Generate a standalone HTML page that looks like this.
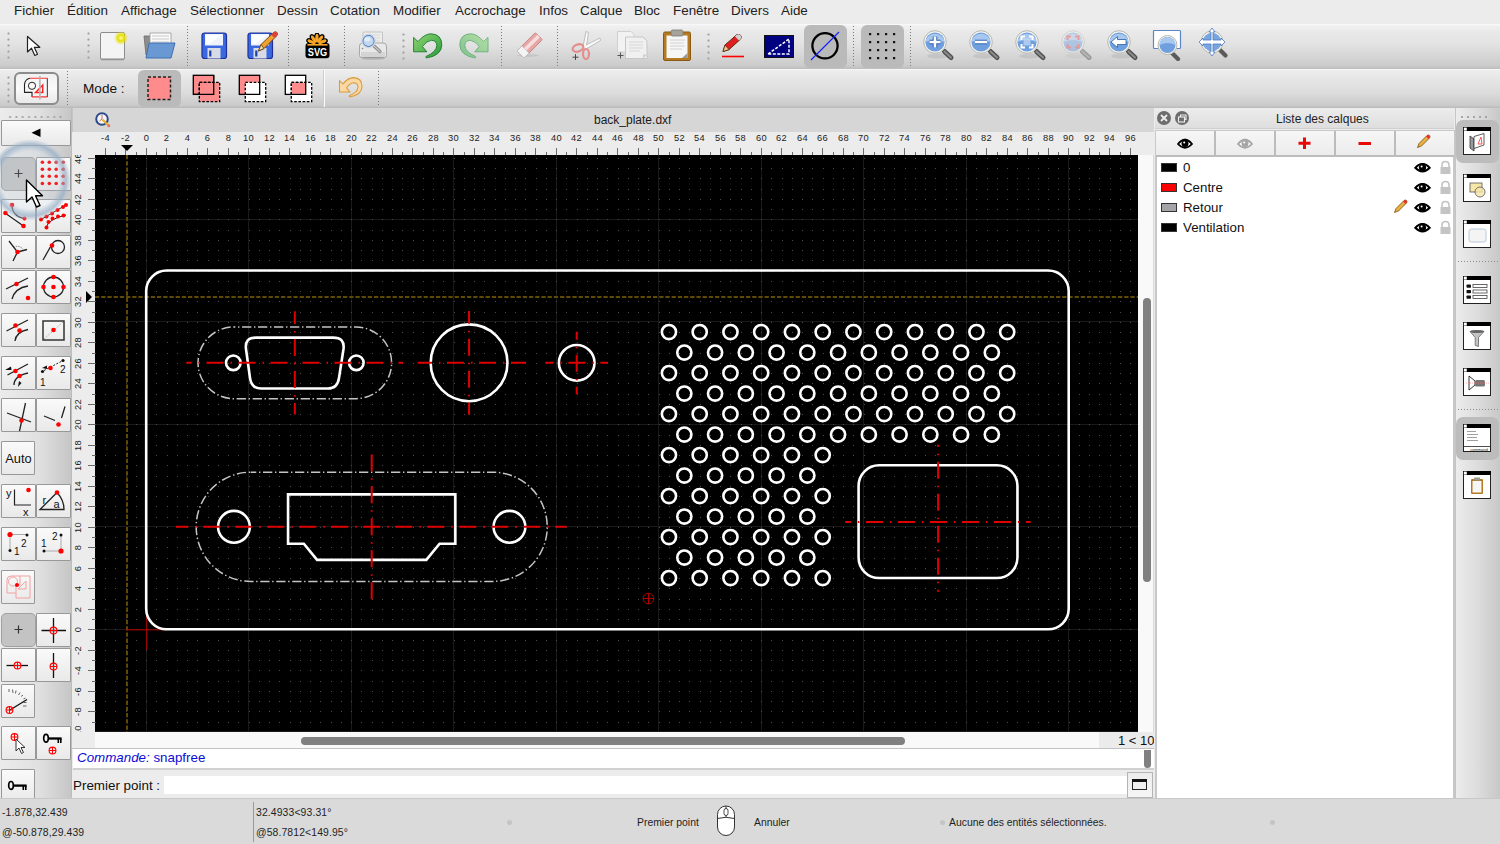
<!DOCTYPE html>
<html><head><meta charset="utf-8">
<style>
*{box-sizing:border-box;margin:0;padding:0}
html,body{width:1500px;height:844px;overflow:hidden;background:#ececec;font-family:"Liberation Sans",sans-serif;position:relative}
.a{position:absolute}
.mi{position:absolute;top:2px;font-size:13.4px;color:#222;white-space:nowrap;line-height:18px}
.sep{position:absolute;width:0;border-left:1px dotted #8a8a8a}
.hdl{position:absolute;width:2px;background-image:radial-gradient(circle,#9a9a9a 1px,transparent 1.2px);background-size:2px 6px}
.tb{position:absolute}
.btn{position:absolute;border:1px solid #989898;border-radius:1px;background:linear-gradient(#fafafa,#e9e9e9)}
.chk{position:absolute;border:1px solid #a0a0a0;border-radius:5px;background:#c3c3c3}
svg{display:block}
.st{position:absolute;font-size:10.4px;color:#1e1e1e;white-space:nowrap;letter-spacing:0.12px}
.st2{position:absolute;font-size:10.4px;color:#1e1e1e;white-space:nowrap}
.lr{position:absolute;left:1183px;font-size:13.3px;color:#111;white-space:nowrap;line-height:16px}
.sw{position:absolute;left:1161px;width:16px;height:9px;border:1px solid #333}
</style></head><body>
<!-- menu bar -->
<div class="a" style="left:0;top:0;width:1500px;height:24px;background:#ececec"></div>
<div class="mi" style="left:14px">Fichier</div>
<div class="mi" style="left:67px">Édition</div>
<div class="mi" style="left:121px">Affichage</div>
<div class="mi" style="left:190px">Sélectionner</div>
<div class="mi" style="left:277px">Dessin</div>
<div class="mi" style="left:330px">Cotation</div>
<div class="mi" style="left:393px">Modifier</div>
<div class="mi" style="left:455px">Accrochage</div>
<div class="mi" style="left:539px">Infos</div>
<div class="mi" style="left:580px">Calque</div>
<div class="mi" style="left:634px">Bloc</div>
<div class="mi" style="left:673px">Fenêtre</div>
<div class="mi" style="left:731px">Divers</div>
<div class="mi" style="left:781px">Aide</div>

<!-- toolbar 1 -->
<div class="a" style="left:0;top:24px;width:1500px;height:45px;background:linear-gradient(#f3f3f3,#e9e9e9 15%,#e2e2e2 45%,#cbcbcb 93%,#c6c6c6 95%,#bdbdbd);border-top:1px solid #f8f8f8"></div>
<!-- toolbar 2 -->
<div class="a" style="left:0;top:69px;width:1500px;height:39px;background:linear-gradient(#eeeeee,#e7e7e7 20%,#dcdcdc 60%,#cacaca 93%,#c4c4c4 95%,#bababa);border-top:1px solid #f6f6f6"></div>
<svg class="a" style="left:7px;top:32px" width="3" height="29"><rect x="0.5" y="0.5" width="2" height="2" rx="0.6" fill="#a0a0a0"/><rect x="0.5" y="6.5" width="2" height="2" rx="0.6" fill="#a0a0a0"/><rect x="0.5" y="12.5" width="2" height="2" rx="0.6" fill="#a0a0a0"/><rect x="0.5" y="18.5" width="2" height="2" rx="0.6" fill="#a0a0a0"/><rect x="0.5" y="24.5" width="2" height="2" rx="0.6" fill="#a0a0a0"/></svg><svg class="a" style="left:26px;top:35px" width="15" height="22" viewBox="0 0 15 22"><path d="M1.5 1.5V17L5.5 13.2L8.8 20.5L11.5 19.3L8.3 12.3H13.8Z" fill="#fff" stroke="#222" stroke-width="1.2" stroke-linejoin="round"/></svg><svg class="a" style="left:87px;top:32px" width="3" height="29"><rect x="0.5" y="0.5" width="2" height="2" rx="0.6" fill="#a0a0a0"/><rect x="0.5" y="6.5" width="2" height="2" rx="0.6" fill="#a0a0a0"/><rect x="0.5" y="12.5" width="2" height="2" rx="0.6" fill="#a0a0a0"/><rect x="0.5" y="18.5" width="2" height="2" rx="0.6" fill="#a0a0a0"/><rect x="0.5" y="24.5" width="2" height="2" rx="0.6" fill="#a0a0a0"/></svg><svg class="a" style="left:99px;top:31px" width="30" height="31" viewBox="0 0 30 31"><rect x="1.5" y="1.5" width="24" height="27" rx="1.5" fill="#f4f4f4" stroke="#8c8c8c" stroke-width="1"/><rect x="2" y="27" width="23" height="2.5" fill="#9a9a9a" opacity=".6"/><radialGradient id="gl"><stop offset="0" stop-color="#fff9b0"/><stop offset=".45" stop-color="#e8e000"/><stop offset="1" stop-color="#e8e000" stop-opacity="0"/></radialGradient><circle cx="22" cy="7" r="7" fill="url(#gl)"/></svg><svg class="a" style="left:142px;top:31px" width="35" height="29" viewBox="0 0 35 29"><path d="M2 5H9L11 7H27V24H4Z" fill="#8d8d8d" stroke="#6a6a6a" stroke-width=".8"/><path d="M8 2H29V18H8Z" fill="#fafafa" stroke="#999" stroke-width=".8"/><path d="M10 5H27M10 8H27M10 11H27" stroke="#c9c9c9" stroke-width="1"/><path d="M7 12H33L29 27H4Z" fill="#6a98d3" stroke="#3e6fb0" stroke-width="1"/></svg><div class="a" style="left:187px;top:26px;width:1px;height:40px;background-image:linear-gradient(#7a7a7a 50%,transparent 50%);background-size:1px 3px"></div><svg class="a" style="left:201px;top:32px" width="27" height="28" viewBox="0 0 27 28"><rect x="1" y="1" width="24.5" height="25.5" rx="2.5" fill="#3a68e0" stroke="#1e2f9a" stroke-width="1.2"/><rect x="4" y="2" width="18" height="11.5" fill="#eef3fb"/><path d="M5 3H20L9 12H5Z" fill="#fff" opacity=".8"/><rect x="6.5" y="16" width="13" height="10.5" fill="#d7dbe6"/><rect x="8.2" y="18.5" width="2.2" height="6" fill="#1f3fa8"/></svg><svg class="a" style="left:247px;top:32px" width="27" height="28" viewBox="0 0 27 28"><rect x="1" y="1" width="24.5" height="25.5" rx="2.5" fill="#3a68e0" stroke="#1e2f9a" stroke-width="1.2"/><rect x="4" y="2" width="18" height="11.5" fill="#eef3fb"/><path d="M5 3H20L9 12H5Z" fill="#fff" opacity=".8"/><rect x="6.5" y="16" width="13" height="10.5" fill="#d7dbe6"/><rect x="8.2" y="18.5" width="2.2" height="6" fill="#1f3fa8"/></svg><svg class="a" style="left:255px;top:30px" width="24" height="24" viewBox="0 0 24 24"><path d="M3.5 21L6 14.5L18.5 2.5Q20.5 1 22 2.5Q23.5 4 21.5 6L9 18.5Z" fill="#f0a030" stroke="#7a4a10" stroke-width="1"/><path d="M18.5 2.5Q20.5 1 22 2.5Q23.5 4 21.5 6L19.5 8L16.5 5Z" fill="#e04040"/><path d="M3.5 21L6 14.5L9 18.5Z" fill="#f3d9a8" stroke="#5a3a10" stroke-width=".8"/></svg><div class="a" style="left:288px;top:26px;width:1px;height:40px;background-image:linear-gradient(#7a7a7a 50%,transparent 50%);background-size:1px 3px"></div><svg class="a" style="left:305px;top:33px" width="25" height="26" viewBox="0 0 25 26"><ellipse cx="12" cy="5.2" rx="2.3" ry="5" transform="rotate(-68 12 11)" fill="#f8a427" stroke="#000" stroke-width="1.6"/><ellipse cx="12" cy="5.2" rx="2.3" ry="5" transform="rotate(-34 12 11)" fill="#f8a427" stroke="#000" stroke-width="1.6"/><ellipse cx="12" cy="5.2" rx="2.3" ry="5" transform="rotate(0 12 11)" fill="#f8a427" stroke="#000" stroke-width="1.6"/><ellipse cx="12" cy="5.2" rx="2.3" ry="5" transform="rotate(34 12 11)" fill="#f8a427" stroke="#000" stroke-width="1.6"/><ellipse cx="12" cy="5.2" rx="2.3" ry="5" transform="rotate(68 12 11)" fill="#f8a427" stroke="#000" stroke-width="1.6"/><rect x="0.5" y="10" width="24" height="15.2" rx="3" fill="#000"/><ellipse cx="12" cy="5.2" rx="1.5" ry="4.2" transform="rotate(-68 12 11)" fill="#f8a427"/><ellipse cx="12" cy="5.2" rx="1.5" ry="4.2" transform="rotate(-34 12 11)" fill="#f8a427"/><ellipse cx="12" cy="5.2" rx="1.5" ry="4.2" transform="rotate(0 12 11)" fill="#f8a427"/><ellipse cx="12" cy="5.2" rx="1.5" ry="4.2" transform="rotate(34 12 11)" fill="#f8a427"/><ellipse cx="12" cy="5.2" rx="1.5" ry="4.2" transform="rotate(68 12 11)" fill="#f8a427"/><rect x="2.5" y="11" width="20" height="1.6" fill="#f8a427"/><text x="12.5" y="23.3" font-family="Liberation Sans" font-weight="bold" font-size="10.5" fill="#fff" text-anchor="middle" transform="translate(12.5 0) scale(0.88 1.1) translate(-12.5 -2.2)">SVG</text></svg><div class="a" style="left:344px;top:26px;width:1px;height:40px;background-image:linear-gradient(#7a7a7a 50%,transparent 50%);background-size:1px 3px"></div><svg class="a" style="left:358px;top:31px" width="30" height="29" viewBox="0 0 30 29"><rect x="5" y="1" width="19.5" height="14" rx="1" fill="#ececec" stroke="#c4c4c4" stroke-width="1"/><path d="M8 4H22M8 7H22M8 10H22" stroke="#d8d8d8"/><path d="M1.5 15Q1.5 12 4.5 12H25Q28.5 12 28.5 15V24.5Q28.5 26.5 26.5 26.5H3.5Q1.5 26.5 1.5 24.5Z" fill="#e8e8e8" stroke="#a8a8a8" stroke-width="1"/><rect x="3" y="21" width="24" height="5" fill="#d4d4d4"/><ellipse cx="15" cy="27.5" rx="12" ry="1.3" fill="#000" opacity=".15"/><circle cx="4.5" cy="17.5" r=".8" fill="#888"/><path d="M15 14L22 20.5" stroke="#8a8a8a" stroke-width="3.2" stroke-linecap="round"/><path d="M15 14L22 20.5" stroke="#c8c8c8" stroke-width="1.2" stroke-linecap="round"/><circle cx="10.5" cy="10" r="6.8" fill="#f4f4f4" stroke="#d6d6d6" stroke-width="1"/><circle cx="10.5" cy="10" r="5.6" fill="#c6d8ef" stroke="#5a8ad0" stroke-width="1.1"/><ellipse cx="9.5" cy="8.2" rx="3" ry="2" fill="#fff" opacity=".55"/></svg><svg class="a" style="left:402px;top:33px" width="3" height="28"><rect x="0.5" y="0.5" width="2" height="2" rx="0.6" fill="#a0a0a0"/><rect x="0.5" y="6.5" width="2" height="2" rx="0.6" fill="#a0a0a0"/><rect x="0.5" y="12.5" width="2" height="2" rx="0.6" fill="#a0a0a0"/><rect x="0.5" y="18.5" width="2" height="2" rx="0.6" fill="#a0a0a0"/><rect x="0.5" y="24.5" width="2" height="2" rx="0.6" fill="#a0a0a0"/></svg><svg class="a" style="left:408px;top:28px" width="40" height="34" viewBox="0 0 40 34"><linearGradient id="ug" x1="0" y1="0" x2="1" y2="1"><stop offset="0" stop-color="#8fd672"/><stop offset="1" stop-color="#2a9a3c"/></linearGradient><path d="M5.6 9.4L10 13.6Q16.5 5.8 23 5.8Q33.8 6.2 33.8 17Q33.5 27.5 18.5 30Q17.5 29.5 18 28.5Q28.5 24 28.8 17.5Q28.5 12.5 23.5 12.3Q19 12.5 14.4 18.5L18.8 23.8L5.6 23.8Z" fill="url(#ug)" stroke="#1b7a2c" stroke-width="0.9" stroke-linejoin="round"/></svg><svg class="a" style="left:454px;top:28px" width="40" height="34" viewBox="0 0 40 34"><linearGradient id="rgd" x1="0" y1="0" x2="1" y2="1"><stop offset="0" stop-color="#b8e0a8"/><stop offset="1" stop-color="#7cc08c"/></linearGradient><g transform="translate(39.6 0) scale(-1 1)"><path d="M5.6 9.4L10 13.6Q16.5 5.8 23 5.8Q33.8 6.2 33.8 17Q33.5 27.5 18.5 30Q17.5 29.5 18 28.5Q28.5 24 28.8 17.5Q28.5 12.5 23.5 12.3Q19 12.5 14.4 18.5L18.8 23.8L5.6 23.8Z" fill="url(#rgd)" stroke="#6aae7c" stroke-width="0.9" stroke-linejoin="round"/></g></svg><div class="a" style="left:501px;top:26px;width:1px;height:40px;background-image:linear-gradient(#7a7a7a 50%,transparent 50%);background-size:1px 3px"></div><svg class="a" style="left:515px;top:32px" width="30" height="28" viewBox="0 0 30 28"><ellipse cx="13" cy="23.5" rx="11" ry="1.5" fill="#000" opacity=".08"/><g transform="rotate(-45 14 14)"><rect x="2" y="9" width="26" height="10" rx="1.5" fill="#e6a6a6" stroke="#c87a7a" stroke-width=".8"/><rect x="2" y="9" width="7" height="10" fill="#f4f4f4" stroke="#bdbdbd" stroke-width=".8"/><rect x="9" y="12" width="19" height="3.5" fill="#f6dede"/></g></svg><div class="a" style="left:557px;top:26px;width:1px;height:40px;background-image:linear-gradient(#7a7a7a 50%,transparent 50%);background-size:1px 3px"></div><svg class="a" style="left:570px;top:30px" width="32" height="30" viewBox="0 0 32 30"><path d="M13 17L16 1.5L18.5 2.5L16 19" fill="#fafafa" stroke="#b0b0b0" stroke-width=".8"/><path d="M16 15L30 8L30.5 10.5L16 19" fill="#fafafa" stroke="#b0b0b0" stroke-width=".8"/><ellipse cx="8" cy="18" rx="5.5" ry="3.5" fill="none" stroke="#e58c8c" stroke-width="2.2" transform="rotate(-20 8 18)"/><ellipse cx="16" cy="24" rx="3" ry="5" fill="none" stroke="#e58c8c" stroke-width="2.2"/><path d="M2.5 27.2H8.5M5.5 24.2V30.2" stroke="#444" stroke-width="1"/></svg><svg class="a" style="left:616px;top:30px" width="33" height="30" viewBox="0 0 33 30"><path d="M1.5 1.5H15L18 4.5V22H1.5Z" fill="#f2f2f2" stroke="#d0d0d0" stroke-width="1"/><path d="M9.5 7H27L31 11V28.5H9.5Z" fill="#f0f0f0" stroke="#c6c6c6" stroke-width="1"/><path d="M13 12H27M13 15H27M13 18H27M13 21H24" stroke="#d6d6d6"/><path d="M27 28.5L31 24.5H27Z" fill="#cfcfcf"/><path d="M1.5 25.5H7.5M4.5 22.5V28.5" stroke="#555" stroke-width="1"/></svg><svg class="a" style="left:662px;top:28px" width="31" height="34" viewBox="0 0 31 34"><rect x="1.5" y="4" width="27" height="28.5" rx="1.5" fill="#b57a22" stroke="#8a5a14" stroke-width="1"/><rect x="4.5" y="7.5" width="21" height="22.5" fill="#f7f7f7"/><rect x="9" y="2" width="12" height="6" rx="1.5" fill="#a4a49a" stroke="#7a7a70" stroke-width=".8"/><path d="M8 12H23M8 15H22M8 18H23M8 21H20" stroke="#d0d0d0"/><path d="M25.5 25L20 30H25.5Z" fill="#9a9a9a"/></svg><svg class="a" style="left:707px;top:33px" width="3" height="28"><rect x="0.5" y="0.5" width="2" height="2" rx="0.6" fill="#a0a0a0"/><rect x="0.5" y="6.5" width="2" height="2" rx="0.6" fill="#a0a0a0"/><rect x="0.5" y="12.5" width="2" height="2" rx="0.6" fill="#a0a0a0"/><rect x="0.5" y="18.5" width="2" height="2" rx="0.6" fill="#a0a0a0"/><rect x="0.5" y="24.5" width="2" height="2" rx="0.6" fill="#a0a0a0"/></svg><svg class="a" style="left:721px;top:34px" width="26" height="24" viewBox="0 0 26 24"><path d="M2 17.5L4 11L15.5 0.9Q17.8 -0.6 19.5 1.2Q21.2 3 19.5 5.2L8 15.6Z" fill="#e02020" stroke="#5a2a10" stroke-width="1"/><path d="M15.5 1Q17.8 -0.6 19.5 1.2Q21.2 3 19.5 5.2L18 6.5L14 2.5Z" fill="#d0d0d0"/><path d="M2 17.5L4 11L8 15.6Z" fill="#f0c890" stroke="#5a2a10" stroke-width=".8"/><path d="M1 22.5H23" stroke="#f00" stroke-width="1.6"/></svg><svg class="a" style="left:764px;top:35px" width="30" height="23" viewBox="0 0 30 23"><rect x="0.5" y="0.5" width="29" height="22" fill="#000080" stroke="#111" stroke-width="1"/><path d="M4 19L25 4V19Z" fill="none" stroke="#fff" stroke-width="1.5" stroke-dasharray="3 1.5"/></svg><div class="chk" style="left:804px;top:25px;width:43px;height:43px;border:none;background:#bababa;border-radius:6px"></div><svg class="a" style="left:809px;top:29px" width="34" height="34" viewBox="0 0 34 34"><circle cx="16" cy="16.8" r="12.6" fill="none" stroke="#000" stroke-width="2.3"/><path d="M2 31L30 3" stroke="#1020ff" stroke-width="1.1"/></svg><div class="a" style="left:853px;top:26px;width:1px;height:40px;background-image:linear-gradient(#7a7a7a 50%,transparent 50%);background-size:1px 3px"></div><div class="chk" style="left:861px;top:25px;width:43px;height:43px;border:none;background:#bababa;border-radius:6px"></div><svg class="a" style="left:869px;top:33px" width="27" height="27" viewBox="0 0 27 27"><rect x="0" y="0" width="2.2" height="2.2" fill="#111"/><rect x="0" y="8" width="2.2" height="2.2" fill="#111"/><rect x="0" y="16" width="2.2" height="2.2" fill="#111"/><rect x="0" y="24" width="2.2" height="2.2" fill="#111"/><rect x="8" y="0" width="2.2" height="2.2" fill="#111"/><rect x="8" y="8" width="2.2" height="2.2" fill="#111"/><rect x="8" y="16" width="2.2" height="2.2" fill="#111"/><rect x="8" y="24" width="2.2" height="2.2" fill="#111"/><rect x="16" y="0" width="2.2" height="2.2" fill="#111"/><rect x="16" y="8" width="2.2" height="2.2" fill="#111"/><rect x="16" y="16" width="2.2" height="2.2" fill="#111"/><rect x="16" y="24" width="2.2" height="2.2" fill="#111"/><rect x="24" y="0" width="2.2" height="2.2" fill="#111"/><rect x="24" y="8" width="2.2" height="2.2" fill="#111"/><rect x="24" y="16" width="2.2" height="2.2" fill="#111"/><rect x="24" y="24" width="2.2" height="2.2" fill="#111"/></svg><div class="a" style="left:910px;top:26px;width:1px;height:40px;background-image:linear-gradient(#7a7a7a 50%,transparent 50%);background-size:1px 3px"></div><svg class="a" style="left:921px;top:29px" width="34" height="34" viewBox="0 0 34 34"><g><ellipse cx="17" cy="27" rx="11" ry="2.5" fill="#000" opacity="0.08"/><path d="M23.5 22.5L30 28.5" stroke="#505050" stroke-width="5" stroke-linecap="round"/><path d="M23.5 22.5L30 28.5" stroke="#8a8a8a" stroke-width="2.2" stroke-linecap="round"/><circle cx="14" cy="13" r="11.3" fill="#f3f3ef" stroke="#b8b8b0" stroke-width="1"/><circle cx="14" cy="13" r="9.6" fill="#6f9fdf"/><path d="M4.5 13A9.6 9.6 0 0 1 23.5 13Q14 9 4.5 13Z" fill="#a9c8ef"/><path d="M14 7.5V18.5M8.5 13H19.5" stroke="#2a5ea8" stroke-width="4.5"/><path d="M14 7.5V18.5M8.5 13H19.5" stroke="#fff" stroke-width="2.6"/></g></svg><svg class="a" style="left:967px;top:29px" width="34" height="34" viewBox="0 0 34 34"><g><ellipse cx="17" cy="27" rx="11" ry="2.5" fill="#000" opacity="0.08"/><path d="M23.5 22.5L30 28.5" stroke="#505050" stroke-width="5" stroke-linecap="round"/><path d="M23.5 22.5L30 28.5" stroke="#8a8a8a" stroke-width="2.2" stroke-linecap="round"/><circle cx="14" cy="13" r="11.3" fill="#f3f3ef" stroke="#b8b8b0" stroke-width="1"/><circle cx="14" cy="13" r="9.6" fill="#6f9fdf"/><path d="M4.5 13A9.6 9.6 0 0 1 23.5 13Q14 9 4.5 13Z" fill="#a9c8ef"/><path d="M8 13H20" stroke="#2a5ea8" stroke-width="4.5"/><path d="M8 13H20" stroke="#fff" stroke-width="2.6"/></g></svg><svg class="a" style="left:1013px;top:29px" width="34" height="34" viewBox="0 0 34 34"><g><ellipse cx="17" cy="27" rx="11" ry="2.5" fill="#000" opacity="0.08"/><path d="M23.5 22.5L30 28.5" stroke="#505050" stroke-width="5" stroke-linecap="round"/><path d="M23.5 22.5L30 28.5" stroke="#8a8a8a" stroke-width="2.2" stroke-linecap="round"/><circle cx="14" cy="13" r="11.3" fill="#f3f3ef" stroke="#b8b8b0" stroke-width="1"/><circle cx="14" cy="13" r="9.6" fill="#6f9fdf"/><path d="M4.5 13A9.6 9.6 0 0 1 23.5 13Q14 9 4.5 13Z" fill="#a9c8ef"/><path d="M8.5 11V7.5H12M16 7.5H19.5V11M19.5 15V18.5H16M12 18.5H8.5V15" fill="none" stroke="#fff" stroke-width="2"/><rect x="10.5" y="9.5" width="7" height="7" fill="#c9dcf5" opacity=".7"/></g></svg><svg class="a" style="left:1059px;top:29px" width="34" height="34" viewBox="0 0 34 34"><g opacity="0.45"><ellipse cx="17" cy="27" rx="11" ry="2.5" fill="#000" opacity="0.08"/><path d="M23.5 22.5L30 28.5" stroke="#505050" stroke-width="5" stroke-linecap="round"/><path d="M23.5 22.5L30 28.5" stroke="#8a8a8a" stroke-width="2.2" stroke-linecap="round"/><circle cx="14" cy="13" r="11.3" fill="#f3f3ef" stroke="#b8b8b0" stroke-width="1"/><circle cx="14" cy="13" r="9.6" fill="#6f9fdf"/><path d="M4.5 13A9.6 9.6 0 0 1 23.5 13Q14 9 4.5 13Z" fill="#a9c8ef"/><path d="M8.5 11V7.5H12M16 7.5H19.5V11M19.5 15V18.5H16M12 18.5H8.5V15" fill="none" stroke="#f04040" stroke-width="2"/></g></svg><svg class="a" style="left:1105px;top:29px" width="34" height="34" viewBox="0 0 34 34"><g><ellipse cx="17" cy="27" rx="11" ry="2.5" fill="#000" opacity="0.08"/><path d="M23.5 22.5L30 28.5" stroke="#505050" stroke-width="5" stroke-linecap="round"/><path d="M23.5 22.5L30 28.5" stroke="#8a8a8a" stroke-width="2.2" stroke-linecap="round"/><circle cx="14" cy="13" r="11.3" fill="#f3f3ef" stroke="#b8b8b0" stroke-width="1"/><circle cx="14" cy="13" r="9.6" fill="#6f9fdf"/><path d="M4.5 13A9.6 9.6 0 0 1 23.5 13Q14 9 4.5 13Z" fill="#a9c8ef"/><path d="M6 13L12.5 7.5V10.5H21V15.5H12.5V18.5Z" fill="#fff" stroke="#2a5ea8" stroke-width=".8"/></g></svg><svg class="a" style="left:1152px;top:29px" width="32" height="32" viewBox="0 0 32 32"><rect x="1.5" y="1.5" width="27" height="18" rx="1" fill="#fff" stroke="#5b86c8" stroke-width="1.2"/><path d="M20 24L26 30" stroke="#5a5a5a" stroke-width="4.2" stroke-linecap="round"/><circle cx="15.5" cy="16" r="9.5" fill="#f3f3ef" stroke="#b8b8b0" stroke-width="1"/><circle cx="15.5" cy="16" r="8" fill="#6f9fdf"/><path d="M7.5 16A8 8 0 0 1 23.5 16Q15.5 12 7.5 16Z" fill="#a9c8ef"/></svg><svg class="a" style="left:1197px;top:27px" width="36" height="35" viewBox="0 0 36 35"><path d="M22 22L28.5 28.5" stroke="#5a5a5a" stroke-width="4.2" stroke-linecap="round"/><circle cx="15" cy="15" r="11" fill="#f3f3ef" stroke="#b8b8b0" stroke-width="1"/><circle cx="15" cy="15" r="9.3" fill="#7aa6e0"/><path d="M15 1L18 5H16V13H24V11L28 15L24 19V17H16V25H18L15 29L12 25H14V17H6V19L2 15L6 11V13H14V5H12Z" fill="#fff" stroke="#4a7ac0" stroke-width=".8"/></svg><svg class="a" style="left:7px;top:76px" width="3" height="27"><rect x="0.5" y="0.5" width="2" height="2" rx="0.6" fill="#a0a0a0"/><rect x="0.5" y="6.5" width="2" height="2" rx="0.6" fill="#a0a0a0"/><rect x="0.5" y="12.5" width="2" height="2" rx="0.6" fill="#a0a0a0"/><rect x="0.5" y="18.5" width="2" height="2" rx="0.6" fill="#a0a0a0"/><rect x="0.5" y="24.5" width="2" height="2" rx="0.6" fill="#a0a0a0"/></svg><div class="a" style="left:14px;top:72px;width:45px;height:33px;border:2px solid #8c8c8c;border-radius:6px;background:linear-gradient(#f0f0f0,#fafafa 50%,#e8e8e8)"></div><svg class="a" style="left:22px;top:76px" width="28" height="25" viewBox="0 0 28 25"><g transform="translate(0 1)"><path d="M7.9 1.2Q3 2 2.5 7.5V15.4H10V19.9" fill="none" stroke="#222" stroke-width="1.1"/><path d="M7.9 1.2H25.4M10 19.9H25.4" stroke="#f33" stroke-width="1.1"/><path d="M25.4 1.2V19.9" stroke="#555" stroke-width="1.2"/><circle cx="10" cy="8.8" r="3.6" fill="none" stroke="#222" stroke-width="1"/><path d="M13.6 15.4L20.7 8V15.4Z" fill="none" stroke="#f22" stroke-width="1.5"/><path d="M17.9 -1V22.5" stroke="#b4b4b4" stroke-width="1.6"/></g></svg><div class="a" style="left:67px;top:71px;width:1px;height:35px;background-image:linear-gradient(#7a7a7a 50%,transparent 50%);background-size:1px 3px"></div><div class="a" style="left:83px;top:81px;font-size:13.6px;color:#111;white-space:nowrap">Mode :</div><div class="chk" style="left:138px;top:70px;width:43px;height:37px;border:none;background:#bababa;border-radius:6px"></div><svg class="a" style="left:147px;top:76px" width="25" height="25" viewBox="0 0 25 25"><rect x="1" y="1" width="22.5" height="22.5" fill="#ff8c8c" stroke="#222" stroke-width="1.5" stroke-dasharray="3 2"/></svg><svg class="a" style="left:192px;top:74px" width="30" height="30" viewBox="0 0 30 30"><rect x="1.3" y="1.3" width="20.4" height="19.1" fill="#ff8c8c" stroke="#000" stroke-width="1.3"/><rect x="7.3" y="8.3" width="20.4" height="19.3" fill="#ff8c8c" stroke="#000" stroke-width="1.3" stroke-dasharray="2.6 1.6"/><path d="M7.3 20.4V8.3H21.7" fill="none" stroke="#000" stroke-width="1.3" stroke-dasharray="2.6 1.6"/><path d="M1.3 20.4H21.7V1.3" fill="none" stroke="#000" stroke-width="1.3"/></svg><svg class="a" style="left:238px;top:74px" width="30" height="30" viewBox="0 0 30 30"><rect x="1.3" y="1.3" width="20.4" height="19.1" fill="#ff8c8c" stroke="#000" stroke-width="1.3"/><rect x="7.3" y="8.3" width="20.4" height="19.3" fill="#fff" stroke="#000" stroke-width="1.3" stroke-dasharray="2.6 1.6"/><path d="M7.3 20.4H21.7V8.3" fill="none" stroke="#000" stroke-width="1.3"/></svg><svg class="a" style="left:284px;top:74px" width="30" height="30" viewBox="0 0 30 30"><rect x="1.3" y="1.3" width="20.4" height="19.1" fill="#fff" stroke="#000" stroke-width="1.3"/><rect x="7.3" y="8.3" width="20.4" height="19.3" fill="#fff" stroke="#000" stroke-width="1.3" stroke-dasharray="2.6 1.6"/><rect x="7.95" y="8.95" width="13.1" height="10.8" fill="#ff8c8c"/><path d="M7.3 20.4H21.7V8.3" fill="none" stroke="#000" stroke-width="1.3"/><path d="M7.3 20.4V8.3H21.7" fill="none" stroke="#000" stroke-width="1.3" stroke-dasharray="2.6 1.6"/></svg><div class="a" style="left:323px;top:70px;width:2px;height:37px;background:linear-gradient(90deg,#cfcfcf 50%,#fafafa 50%)"></div><svg class="a" style="left:335px;top:73px" width="32" height="30" viewBox="0 0 32 30"><g transform="scale(0.8)"><path d="M5.6 9.4L10 13.6Q16.5 5.8 23 5.8Q33.8 6.2 33.8 17Q33.5 27.5 18.5 30Q17.5 29.5 18 28.5Q28.5 24 28.8 17.5Q28.5 12.5 23.5 12.3Q19 12.5 14.4 18.5L18.8 23.8L5.6 23.8Z" fill="#fcd8a2" stroke="#d99a3c" stroke-width="1.3" stroke-linejoin="round"/></g></svg><div class="a" style="left:378px;top:71px;width:1px;height:35px;background-image:linear-gradient(#7a7a7a 50%,transparent 50%);background-size:1px 3px"></div>

<!-- left toolbar -->
<div class="a" style="left:0;top:108px;width:72px;height:690px;background:linear-gradient(90deg,#ececec,#e0e0e0 55%,#c6c6c6);border-right:1px solid #bdbdbd"></div>
<div class="a" style="left:7px;top:116px;width:58px;height:2px;background-image:radial-gradient(circle,#a6a6a6 0.9px,transparent 1.2px);background-size:6.3px 2px"></div><div class="btn" style="left:1px;top:120px;width:70px;height:26px"></div><svg class="a" style="left:1px;top:120px" width="70" height="26" viewBox="0 0 70 26"><path d="M30.5 12.8L39.5 8.5V17Z" fill="#000"/></svg><div class="chk" style="left:1px;top:157px;width:35px;height:34px"></div><svg class="a" style="left:1px;top:157px" width="35" height="34" viewBox="0 0 35 34"><path d="M17.5 12.5V20.5M13.5 16.5H21.5" stroke="#333" stroke-width="1.2"/></svg><div class="btn" style="left:36px;top:157px;width:35px;height:34px"></div><svg class="a" style="left:36px;top:157px" width="35" height="34" viewBox="0 0 35 34"><circle cx="6.4" cy="5.3" r="1.8" fill="#f00"/><circle cx="6.4" cy="12.3" r="1.8" fill="#f00"/><circle cx="6.4" cy="19.3" r="1.8" fill="#f00"/><circle cx="6.4" cy="26.5" r="1.8" fill="#f00"/><circle cx="13.3" cy="5.3" r="1.8" fill="#f00"/><circle cx="13.3" cy="12.3" r="1.8" fill="#f00"/><circle cx="13.3" cy="19.3" r="1.8" fill="#f00"/><circle cx="13.3" cy="26.5" r="1.8" fill="#f00"/><circle cx="20.2" cy="5.3" r="1.8" fill="#f00"/><circle cx="20.2" cy="12.3" r="1.8" fill="#f00"/><circle cx="20.2" cy="19.3" r="1.8" fill="#f00"/><circle cx="20.2" cy="26.5" r="1.8" fill="#f00"/><circle cx="27.2" cy="5.3" r="1.8" fill="#f00"/><circle cx="27.2" cy="12.3" r="1.8" fill="#f00"/><circle cx="27.2" cy="19.3" r="1.8" fill="#f00"/><circle cx="27.2" cy="26.5" r="1.8" fill="#f00"/></svg><div class="btn" style="left:1px;top:199px;width:35px;height:34px"></div><svg class="a" style="left:1px;top:199px" width="35" height="34" viewBox="0 0 35 34"><path d="M11 6Q11 17 23 19.5M4 14L22.5 27" stroke="#222" stroke-width="1.2" fill="none"/><circle cx="11" cy="6" r="2.3" fill="#f00"/><circle cx="23.5" cy="19.5" r="2" fill="#f00"/><circle cx="4.5" cy="14" r="2.3" fill="#f00"/><circle cx="22.5" cy="27" r="2.3" fill="#f00"/></svg><div class="btn" style="left:36px;top:199px;width:35px;height:34px"></div><svg class="a" style="left:36px;top:199px" width="35" height="34" viewBox="0 0 35 34"><path d="M5 20.5L30 6M10 29Q12 20 30 16" stroke="#222" stroke-width="1" fill="none"/><circle cx="5" cy="20.5" r="2" fill="#f00"/><circle cx="10.5" cy="17.5" r="2" fill="#f00"/><circle cx="16" cy="14.5" r="2" fill="#f00"/><circle cx="21.5" cy="11" r="2" fill="#f00"/><circle cx="27" cy="8" r="2" fill="#f00"/><circle cx="30" cy="6" r="2" fill="#f00"/><circle cx="10.5" cy="28.5" r="2" fill="#f00"/><circle cx="12.5" cy="23" r="2" fill="#f00"/><circle cx="16.5" cy="19.5" r="2" fill="#f00"/><circle cx="22" cy="17.5" r="2" fill="#f00"/><circle cx="27.5" cy="16.5" r="2" fill="#f00"/></svg><div class="btn" style="left:1px;top:235px;width:35px;height:34px"></div><svg class="a" style="left:1px;top:235px" width="35" height="34" viewBox="0 0 35 34"><path d="M8 6L16.5 17L12 26M16.5 17L26 14.5" stroke="#222" stroke-width="1.3" fill="none"/><path d="M13 12.5Q17 9.5 22 14" stroke="#444" stroke-width=".8" stroke-dasharray="1 1" fill="none"/><circle cx="16.5" cy="17" r="2.3" fill="#f00"/></svg><div class="btn" style="left:36px;top:235px;width:35px;height:34px"></div><svg class="a" style="left:36px;top:235px" width="35" height="34" viewBox="0 0 35 34"><circle cx="22" cy="12" r="6.5" fill="none" stroke="#222" stroke-width="1.3"/><path d="M7 25L15.5 10" stroke="#222" stroke-width="1.3"/><circle cx="16" cy="10.5" r="2.3" fill="#f00"/></svg><div class="btn" style="left:1px;top:270px;width:35px;height:34px"></div><svg class="a" style="left:1px;top:270px" width="35" height="34" viewBox="0 0 35 34"><path d="M5 19L27 8M11 29Q14 18 27 16" stroke="#222" stroke-width="1.3" fill="none"/><circle cx="15.5" cy="14" r="2.3" fill="#f00"/><circle cx="27" cy="28" r="2.3" fill="#f00"/></svg><div class="btn" style="left:36px;top:270px;width:35px;height:34px"></div><svg class="a" style="left:36px;top:270px" width="35" height="34" viewBox="0 0 35 34"><circle cx="17.5" cy="17" r="10" fill="none" stroke="#222" stroke-width="1.3"/><circle cx="17.5" cy="17" r="2.3" fill="#f00"/><circle cx="17.5" cy="7" r="2.3" fill="#f00"/><circle cx="17.5" cy="27" r="2.3" fill="#f00"/><circle cx="7.5" cy="17" r="2.3" fill="#f00"/><circle cx="27.5" cy="17" r="2.3" fill="#f00"/></svg><div class="btn" style="left:1px;top:313px;width:35px;height:34px"></div><svg class="a" style="left:1px;top:313px" width="35" height="34" viewBox="0 0 35 34"><path d="M5.5 18L27 7M14 28Q15 19 27 16.5" stroke="#222" stroke-width="1.3" fill="none"/><circle cx="14.5" cy="12.5" r="2.3" fill="#f00"/><circle cx="18.5" cy="17.5" r="2.3" fill="#f00"/></svg><div class="btn" style="left:36px;top:313px;width:35px;height:34px"></div><svg class="a" style="left:36px;top:313px" width="35" height="34" viewBox="0 0 35 34"><rect x="7" y="8" width="21" height="19" fill="none" stroke="#333" stroke-width="1.5"/><path d="M8 26L27 9" stroke="#888" stroke-width=".7" stroke-dasharray="1.5 1.5"/><circle cx="17.5" cy="17" r="2.3" fill="#f00"/></svg><div class="btn" style="left:1px;top:356px;width:35px;height:34px"></div><svg class="a" style="left:1px;top:356px" width="35" height="34" viewBox="0 0 35 34"><path d="M6.5 19L27 8M13 29Q13 20 27 17" stroke="#222" stroke-width="1.3" fill="none"/><path d="M4 14L10 10.5L10.5 14Z M17 31L18 25L20.5 27Z" fill="#111"/><circle cx="14.5" cy="15" r="2.3" fill="#f00"/><circle cx="18.5" cy="20" r="2.3" fill="#f00"/></svg><div class="btn" style="left:36px;top:356px;width:35px;height:34px"></div><svg class="a" style="left:36px;top:356px" width="35" height="34" viewBox="0 0 35 34"><path d="M8 14.5L27 4.5" stroke="#222" stroke-width="1" stroke-dasharray="2 1.5" fill="none"/><path d="M6 12L11 9.5L11 13Z" fill="#111"/><circle cx="27" cy="4.5" r="1.6" fill="#111"/><circle cx="6.5" cy="15.5" r="1.6" fill="#111"/><circle cx="14.5" cy="12" r="2.3" fill="#f00"/><text x="24" y="17" font-family="Liberation Sans" font-size="10" fill="#111">2</text><text x="4" y="30" font-family="Liberation Sans" font-size="10" fill="#111">1</text></svg><div class="btn" style="left:1px;top:398px;width:35px;height:34px"></div><svg class="a" style="left:1px;top:398px" width="35" height="34" viewBox="0 0 35 34"><path d="M6 15L30 24M24.5 5L18.5 33" stroke="#222" stroke-width="1.3"/><circle cx="20.5" cy="22.5" r="2.3" fill="#f00"/></svg><div class="btn" style="left:36px;top:398px;width:35px;height:34px"></div><svg class="a" style="left:36px;top:398px" width="35" height="34" viewBox="0 0 35 34"><path d="M8 18L19 22.5M29 8.5L25.5 20" stroke="#222" stroke-width="1.3"/><circle cx="22.5" cy="26.5" r="2.3" fill="#f00"/></svg><div class="btn" style="left:1px;top:441px;width:34px;height:34px"></div><svg class="a" style="left:1px;top:441px" width="34" height="34" viewBox="0 0 34 34"><text x="17.5" y="21.5" font-family="Liberation Sans" font-size="12.8" fill="#111" text-anchor="middle">Auto</text></svg><div class="btn" style="left:1px;top:484px;width:35px;height:34px"></div><svg class="a" style="left:1px;top:484px" width="35" height="34" viewBox="0 0 35 34"><text x="5" y="13" font-family="Liberation Sans" font-size="11" fill="#111">y</text><path d="M13.5 5.5V21H30" stroke="#222" stroke-width="1.2" fill="none"/><text x="22" y="32" font-family="Liberation Sans" font-size="11" fill="#111">x</text><circle cx="27.5" cy="6" r="2.3" fill="#f00"/></svg><div class="btn" style="left:36px;top:484px;width:35px;height:34px"></div><svg class="a" style="left:36px;top:484px" width="35" height="34" viewBox="0 0 35 34"><path d="M4 25.5H28Q28 16 21 8.5Z" fill="none" stroke="#222" stroke-width="1.3"/><text x="6.5" y="20" font-family="Liberation Sans" font-size="11" fill="#111">r</text><text x="17.5" y="24" font-family="Liberation Sans" font-size="11" fill="#111">a</text><circle cx="21" cy="8.5" r="2.3" fill="#f00"/></svg><div class="btn" style="left:1px;top:527px;width:35px;height:34px"></div><svg class="a" style="left:1px;top:527px" width="35" height="34" viewBox="0 0 35 34"><path d="M9 7.5H26M9 7.5V23.5" stroke="#aaa" stroke-width="1"/><circle cx="9" cy="7.5" r="2.6" fill="#f00"/><circle cx="26" cy="8" r="1.5" fill="#111"/><circle cx="9" cy="23.5" r="1.5" fill="#111"/><text x="20" y="20" font-family="Liberation Sans" font-size="10" fill="#111">2</text><text x="13" y="28" font-family="Liberation Sans" font-size="10" fill="#111">1</text></svg><div class="btn" style="left:36px;top:527px;width:35px;height:34px"></div><svg class="a" style="left:36px;top:527px" width="35" height="34" viewBox="0 0 35 34"><path d="M8 24H25M25 8V24" stroke="#aaa" stroke-width="1"/><circle cx="25" cy="24" r="2.6" fill="#f00"/><circle cx="25" cy="8" r="1.5" fill="#111"/><circle cx="8" cy="24" r="1.5" fill="#111"/><text x="16" y="13" font-family="Liberation Sans" font-size="10" fill="#111">2</text><text x="5" y="20" font-family="Liberation Sans" font-size="10" fill="#111">1</text></svg><div class="btn" style="left:1px;top:570px;width:34px;height:34px"></div><svg class="a" style="left:1px;top:570px" width="34" height="34" viewBox="0 0 34 34"><path d="M6 23V10Q6 6 10 6H19V15H15V23Z M15 23V28H29V6H19" fill="none" stroke="#f3a0a0" stroke-width="1"/><circle cx="12" cy="11.5" r="4.5" fill="none" stroke="#f3a0a0" stroke-width="1"/><path d="M17 19H25V11Z" fill="none" stroke="#f3a0a0"/><circle cx="16" cy="15" r="2" fill="#f00"/></svg><div class="chk" style="left:1px;top:613px;width:35px;height:34px"></div><svg class="a" style="left:1px;top:613px" width="35" height="34" viewBox="0 0 35 34"><path d="M17.5 12.5V20.5M13.5 16.5H21.5" stroke="#333" stroke-width="1.2"/></svg><div class="btn" style="left:36px;top:613px;width:35px;height:34px"></div><svg class="a" style="left:36px;top:613px" width="35" height="34" viewBox="0 0 35 34"><path d="M5.5 17.5H30M17.5 5V30" stroke="#111" stroke-width="1.3"/><circle cx="17.5" cy="17.5" r="3.4" fill="none" stroke="#f00" stroke-width="1.1"/><path d="M14.0 17.5H21.0M17.5 14.0V21.0" stroke="#f00" stroke-width="1"/></svg><div class="btn" style="left:1px;top:648px;width:35px;height:34px"></div><svg class="a" style="left:1px;top:648px" width="35" height="34" viewBox="0 0 35 34"><path d="M5.5 17.5H27" stroke="#111" stroke-width="1.3"/><circle cx="16.5" cy="17.5" r="3.4" fill="none" stroke="#f00" stroke-width="1.1"/><path d="M13.0 17.5H20.0M16.5 14.0V21.0" stroke="#f00" stroke-width="1"/></svg><div class="btn" style="left:36px;top:648px;width:35px;height:34px"></div><svg class="a" style="left:36px;top:648px" width="35" height="34" viewBox="0 0 35 34"><path d="M17.5 5V30" stroke="#111" stroke-width="1.3"/><circle cx="17.5" cy="18.5" r="3.4" fill="none" stroke="#f00" stroke-width="1.1"/><path d="M14.0 18.5H21.0M17.5 15.0V22.0" stroke="#f00" stroke-width="1"/></svg><div class="btn" style="left:1px;top:684px;width:34px;height:34px"></div><svg class="a" style="left:1px;top:684px" width="34" height="34" viewBox="0 0 34 34"><path d="M8 5V8M11.5 5.5L12 9M15 6.5L14.5 9.5M19 8.5L17.5 11M22 11L20 12.5M24.5 14L22.5 15M25.5 18.5H22.5M25.5 22H22" stroke="#666" stroke-width="1"/><path d="M9 26L26 15.5" stroke="#111" stroke-width="1.3"/><circle cx="8.5" cy="26" r="3.4" fill="none" stroke="#f00" stroke-width="1.1"/><path d="M5.0 26H12.0M8.5 22.5V29.5" stroke="#f00" stroke-width="1"/></svg><div class="btn" style="left:1px;top:726px;width:35px;height:34px"></div><svg class="a" style="left:1px;top:726px" width="35" height="34" viewBox="0 0 35 34"><circle cx="13.5" cy="11" r="3.4" fill="none" stroke="#f00" stroke-width="1.1"/><path d="M10.0 11H17.0M13.5 7.5V14.5" stroke="#f00" stroke-width="1"/><path d="M15 13V25L18 22L20.5 27.5L22.5 26.5L20 21.5H24Z" fill="#fff" stroke="#333" stroke-width="1"/></svg><div class="btn" style="left:36px;top:726px;width:35px;height:34px"></div><svg class="a" style="left:36px;top:726px" width="35" height="34" viewBox="0 0 35 34"><ellipse cx="10" cy="12.3" rx="2.3" ry="3.9" fill="none" stroke="#000" stroke-width="1.7"/><path d="M12.3 12.5H25.6" stroke="#000" stroke-width="2.3"/><path d="M22.3 12.5V17.0M24.8 12.5V17.0" stroke="#000" stroke-width="1.6"/><circle cx="16.5" cy="24.5" r="3.4" fill="none" stroke="#f00" stroke-width="1.1"/><path d="M13.0 24.5H20.0M16.5 21.0V28.0" stroke="#f00" stroke-width="1"/></svg><div class="btn" style="left:1px;top:769px;width:34px;height:34px"></div><svg class="a" style="left:1px;top:769px" width="34" height="34" viewBox="0 0 34 34"><ellipse cx="10" cy="16.4" rx="2.3" ry="3.9" fill="none" stroke="#000" stroke-width="1.7"/><path d="M12.3 16.599999999999998H25.6" stroke="#000" stroke-width="2.3"/><path d="M22.3 16.599999999999998V21.099999999999998M24.8 16.599999999999998V21.099999999999998" stroke="#000" stroke-width="1.6"/></svg><svg class="a" style="left:-12px;top:138px;z-index:5" width="84" height="84" viewBox="0 0 84 84"><radialGradient id="rg" cx=".5" cy=".5" r=".5"><stop offset="0" stop-color="#c4d2e0" stop-opacity=".10"/><stop offset=".70" stop-color="#b8cadc" stop-opacity=".18"/><stop offset=".80" stop-color="#9fb6cc" stop-opacity=".55"/><stop offset=".88" stop-color="#93abc4" stop-opacity=".7"/><stop offset=".95" stop-color="#aabdd0" stop-opacity=".35"/><stop offset="1" stop-color="#b8cadc" stop-opacity="0"/></radialGradient><circle cx="42" cy="42" r="41" fill="url(#rg)"/></svg><svg class="a" style="left:24px;top:178px;z-index:6" width="20" height="32" viewBox="0 0 20 32"><path d="M2.5 2V24L8 19L12.5 29L16 27.5L11.5 17.8H18.5Z" fill="#fff" stroke="#000" stroke-width="1.4" stroke-linejoin="round"/></svg>

<!-- drawing window -->
<div class="a" style="left:72px;top:108px;width:1083px;height:24px;background:#d6d6d6"></div>
<div class="a" style="left:72px;top:108px;width:1px;height:690px;background:#c4c4c4"></div>
<div class="a" style="left:72px;top:132px;width:1082px;height:23px;background:#ececec"></div>
<div class="a" style="left:72px;top:155px;width:23px;height:593px;background:#ececec"></div>
<div class="a" style="left:594px;top:113px;font-size:12px;color:#1a1a1a;white-space:nowrap">back_plate.dxf</div>
<svg class="a" style="left:95px;top:112px" width="16" height="16"><circle cx="7" cy="7" r="5.8" fill="#f4f4f4" stroke="#2b4a8a" stroke-width="2"/><path d="M7 3V7L4.5 9" stroke="#c44" stroke-width=".8" fill="none"/><path d="M7.5 7.5L13.5 13.5" stroke="#e8b030" stroke-width="2.2"/><circle cx="13.8" cy="13.8" r="1.5" fill="#e47070"/></svg>
<svg width="1043" height="23" viewBox="95 132 1043 23" style="position:absolute;left:95px;top:132px"><path d="M105.5 148V155M115.5 152V155M125.5 148V155M136.5 152V155M146.5 148V155M156.5 152V155M166.5 148V155M177.5 152V155M187.5 148V155M197.5 152V155M207.5 148V155M218.5 152V155M228.5 148V155M238.5 152V155M248.5 148V155M259.5 152V155M269.5 148V155M279.5 152V155M289.5 148V155M300.5 152V155M310.5 148V155M320.5 152V155M330.5 148V155M341.5 152V155M351.5 148V155M361.5 152V155M371.5 148V155M382.5 152V155M392.5 148V155M402.5 152V155M412.5 148V155M423.5 152V155M433.5 148V155M443.5 152V155M453.5 148V155M464.5 152V155M474.5 148V155M484.5 152V155M494.5 148V155M505.5 152V155M515.5 148V155M525.5 152V155M535.5 148V155M546.5 152V155M556.5 148V155M566.5 152V155M576.5 148V155M587.5 152V155M597.5 148V155M607.5 152V155M617.5 148V155M628.5 152V155M638.5 148V155M648.5 152V155M658.5 148V155M669.5 152V155M679.5 148V155M689.5 152V155M699.5 148V155M710.5 152V155M720.5 148V155M730.5 152V155M740.5 148V155M751.5 152V155M761.5 148V155M771.5 152V155M781.5 148V155M792.5 152V155M802.5 148V155M812.5 152V155M822.5 148V155M833.5 152V155M843.5 148V155M853.5 152V155M863.5 148V155M874.5 152V155M884.5 148V155M894.5 152V155M904.5 148V155M915.5 152V155M925.5 148V155M935.5 152V155M945.5 148V155M956.5 152V155M966.5 148V155M976.5 152V155M986.5 148V155M997.5 152V155M1007.5 148V155M1017.5 152V155M1027.5 148V155M1038.5 152V155M1048.5 148V155M1058.5 152V155M1068.5 148V155M1079.5 152V155M1089.5 148V155M1099.5 152V155M1109.5 148V155M1120.5 152V155M1130.5 148V155" stroke="#6b6b6b" stroke-width="1"/><g font-family="Liberation Sans" font-size="9.3" letter-spacing="0.3" text-anchor="middle" fill="#1c1c1c"><text x="105.5" y="141">-4</text><text x="125.5" y="141">-2</text><text x="146.5" y="141">0</text><text x="166.5" y="141">2</text><text x="187.5" y="141">4</text><text x="207.5" y="141">6</text><text x="228.5" y="141">8</text><text x="248.5" y="141">10</text><text x="269.5" y="141">12</text><text x="289.5" y="141">14</text><text x="310.5" y="141">16</text><text x="330.5" y="141">18</text><text x="351.5" y="141">20</text><text x="371.5" y="141">22</text><text x="392.5" y="141">24</text><text x="412.5" y="141">26</text><text x="433.5" y="141">28</text><text x="453.5" y="141">30</text><text x="474.5" y="141">32</text><text x="494.5" y="141">34</text><text x="515.5" y="141">36</text><text x="535.5" y="141">38</text><text x="556.5" y="141">40</text><text x="576.5" y="141">42</text><text x="597.5" y="141">44</text><text x="617.5" y="141">46</text><text x="638.5" y="141">48</text><text x="658.5" y="141">50</text><text x="679.5" y="141">52</text><text x="699.5" y="141">54</text><text x="720.5" y="141">56</text><text x="740.5" y="141">58</text><text x="761.5" y="141">60</text><text x="781.5" y="141">62</text><text x="802.5" y="141">64</text><text x="822.5" y="141">66</text><text x="843.5" y="141">68</text><text x="863.5" y="141">70</text><text x="884.5" y="141">72</text><text x="904.5" y="141">74</text><text x="925.5" y="141">76</text><text x="945.5" y="141">78</text><text x="966.5" y="141">80</text><text x="986.5" y="141">82</text><text x="1007.5" y="141">84</text><text x="1027.5" y="141">86</text><text x="1048.5" y="141">88</text><text x="1068.5" y="141">90</text><text x="1089.5" y="141">92</text><text x="1109.5" y="141">94</text><text x="1130.5" y="141">96</text></g><path d="M121 145H133L127 151Z" fill="#000"/></svg><svg width="23" height="577" viewBox="72 155 23 577" style="position:absolute;left:72px;top:155px"><path d="M88 732.5H95M92 722.5H95M88 711.5H95M92 701.5H95M88 691.5H95M92 681.5H95M88 670.5H95M92 660.5H95M88 650.5H95M92 640.5H95M88 629.5H95M92 619.5H95M88 609.5H95M92 599.5H95M88 588.5H95M92 578.5H95M88 568.5H95M92 558.5H95M88 547.5H95M92 537.5H95M88 527.5H95M92 517.5H95M88 506.5H95M92 496.5H95M88 486.5H95M92 476.5H95M88 465.5H95M92 455.5H95M88 445.5H95M92 435.5H95M88 424.5H95M92 414.5H95M88 404.5H95M92 394.5H95M88 383.5H95M92 373.5H95M88 363.5H95M92 353.5H95M88 342.5H95M92 332.5H95M88 322.5H95M92 312.5H95M88 301.5H95M92 291.5H95M88 281.5H95M92 271.5H95M88 260.5H95M92 250.5H95M88 240.5H95M92 230.5H95M88 219.5H95M92 209.5H95M88 199.5H95M92 189.5H95M88 178.5H95M92 168.5H95M88 158.5H95" stroke="#6b6b6b" stroke-width="1"/><g font-family="Liberation Sans" font-size="9.3" letter-spacing="0.3" text-anchor="middle" fill="#1c1c1c"><text transform="translate(81 732.5) rotate(-90)" y="0">-10</text><text transform="translate(81 711.5) rotate(-90)" y="0">-8</text><text transform="translate(81 691.5) rotate(-90)" y="0">-6</text><text transform="translate(81 670.5) rotate(-90)" y="0">-4</text><text transform="translate(81 650.5) rotate(-90)" y="0">-2</text><text transform="translate(81 629.5) rotate(-90)" y="0">0</text><text transform="translate(81 609.5) rotate(-90)" y="0">2</text><text transform="translate(81 588.5) rotate(-90)" y="0">4</text><text transform="translate(81 568.5) rotate(-90)" y="0">6</text><text transform="translate(81 547.5) rotate(-90)" y="0">8</text><text transform="translate(81 527.5) rotate(-90)" y="0">10</text><text transform="translate(81 506.5) rotate(-90)" y="0">12</text><text transform="translate(81 486.5) rotate(-90)" y="0">14</text><text transform="translate(81 465.5) rotate(-90)" y="0">16</text><text transform="translate(81 445.5) rotate(-90)" y="0">18</text><text transform="translate(81 424.5) rotate(-90)" y="0">20</text><text transform="translate(81 404.5) rotate(-90)" y="0">22</text><text transform="translate(81 383.5) rotate(-90)" y="0">24</text><text transform="translate(81 363.5) rotate(-90)" y="0">26</text><text transform="translate(81 342.5) rotate(-90)" y="0">28</text><text transform="translate(81 322.5) rotate(-90)" y="0">30</text><text transform="translate(81 301.5) rotate(-90)" y="0">32</text><text transform="translate(81 281.5) rotate(-90)" y="0">34</text><text transform="translate(81 260.5) rotate(-90)" y="0">36</text><text transform="translate(81 240.5) rotate(-90)" y="0">38</text><text transform="translate(81 219.5) rotate(-90)" y="0">40</text><text transform="translate(81 199.5) rotate(-90)" y="0">42</text><text transform="translate(81 178.5) rotate(-90)" y="0">44</text><text transform="translate(81 158.5) rotate(-90)" y="0">46</text></g><path d="M86 291V303L92 297Z" fill="#000"/></svg>
<svg width="1043" height="577" viewBox="95 155 1043 577" style="position:absolute;left:95px;top:155px;display:block"><rect x="95" y="155" width="1043" height="577" fill="#000"/><path d="M146.5 155V732M248.5 155V732M351.5 155V732M453.5 155V732M556.5 155V732M658.5 155V732M761.5 155V732M863.5 155V732M966.5 155V732M1068.5 155V732M95 731.5H1138M95 629.5H1138M95 526.5H1138M95 424.5H1138M95 321.5H1138M95 219.5H1138" stroke="#1a1a1a" stroke-width="1" fill="none"/><path d="M95 722h1v1h-1zm10 0h1v1h-1zm10 0h1v1h-1zm11 0h1v1h-1zm10 0h1v1h-1zm10 0h1v1h-1zm10 0h1v1h-1zm11 0h1v1h-1zm10 0h1v1h-1zm10 0h1v1h-1zm10 0h1v1h-1zm11 0h1v1h-1zm10 0h1v1h-1zm10 0h1v1h-1zm10 0h1v1h-1zm11 0h1v1h-1zm10 0h1v1h-1zm10 0h1v1h-1zm10 0h1v1h-1zm11 0h1v1h-1zm10 0h1v1h-1zm10 0h1v1h-1zm10 0h1v1h-1zm11 0h1v1h-1zm10 0h1v1h-1zm10 0h1v1h-1zm10 0h1v1h-1zm11 0h1v1h-1zm10 0h1v1h-1zm10 0h1v1h-1zm10 0h1v1h-1zm11 0h1v1h-1zm10 0h1v1h-1zm10 0h1v1h-1zm10 0h1v1h-1zm11 0h1v1h-1zm10 0h1v1h-1zm10 0h1v1h-1zm10 0h1v1h-1zm11 0h1v1h-1zm10 0h1v1h-1zm10 0h1v1h-1zm10 0h1v1h-1zm11 0h1v1h-1zm10 0h1v1h-1zm10 0h1v1h-1zm10 0h1v1h-1zm11 0h1v1h-1zm10 0h1v1h-1zm10 0h1v1h-1zm10 0h1v1h-1zm11 0h1v1h-1zm10 0h1v1h-1zm10 0h1v1h-1zm10 0h1v1h-1zm11 0h1v1h-1zm10 0h1v1h-1zm10 0h1v1h-1zm10 0h1v1h-1zm11 0h1v1h-1zm10 0h1v1h-1zm10 0h1v1h-1zm10 0h1v1h-1zm11 0h1v1h-1zm10 0h1v1h-1zm10 0h1v1h-1zm10 0h1v1h-1zm11 0h1v1h-1zm10 0h1v1h-1zm10 0h1v1h-1zm10 0h1v1h-1zm11 0h1v1h-1zm10 0h1v1h-1zm10 0h1v1h-1zm10 0h1v1h-1zm11 0h1v1h-1zm10 0h1v1h-1zm10 0h1v1h-1zm10 0h1v1h-1zm11 0h1v1h-1zm10 0h1v1h-1zm10 0h1v1h-1zm10 0h1v1h-1zm11 0h1v1h-1zm10 0h1v1h-1zm10 0h1v1h-1zm10 0h1v1h-1zm11 0h1v1h-1zm10 0h1v1h-1zm10 0h1v1h-1zm10 0h1v1h-1zm11 0h1v1h-1zm10 0h1v1h-1zm10 0h1v1h-1zm10 0h1v1h-1zm11 0h1v1h-1zm10 0h1v1h-1zm10 0h1v1h-1zm10 0h1v1h-1zm11 0h1v1h-1zm10 0h1v1h-1zm10 0h1v1h-1zM95 711h1v1h-1zm10 0h1v1h-1zm10 0h1v1h-1zm11 0h1v1h-1zm10 0h1v1h-1zm10 0h1v1h-1zm10 0h1v1h-1zm11 0h1v1h-1zm10 0h1v1h-1zm10 0h1v1h-1zm10 0h1v1h-1zm11 0h1v1h-1zm10 0h1v1h-1zm10 0h1v1h-1zm10 0h1v1h-1zm11 0h1v1h-1zm10 0h1v1h-1zm10 0h1v1h-1zm10 0h1v1h-1zm11 0h1v1h-1zm10 0h1v1h-1zm10 0h1v1h-1zm10 0h1v1h-1zm11 0h1v1h-1zm10 0h1v1h-1zm10 0h1v1h-1zm10 0h1v1h-1zm11 0h1v1h-1zm10 0h1v1h-1zm10 0h1v1h-1zm10 0h1v1h-1zm11 0h1v1h-1zm10 0h1v1h-1zm10 0h1v1h-1zm10 0h1v1h-1zm11 0h1v1h-1zm10 0h1v1h-1zm10 0h1v1h-1zm10 0h1v1h-1zm11 0h1v1h-1zm10 0h1v1h-1zm10 0h1v1h-1zm10 0h1v1h-1zm11 0h1v1h-1zm10 0h1v1h-1zm10 0h1v1h-1zm10 0h1v1h-1zm11 0h1v1h-1zm10 0h1v1h-1zm10 0h1v1h-1zm10 0h1v1h-1zm11 0h1v1h-1zm10 0h1v1h-1zm10 0h1v1h-1zm10 0h1v1h-1zm11 0h1v1h-1zm10 0h1v1h-1zm10 0h1v1h-1zm10 0h1v1h-1zm11 0h1v1h-1zm10 0h1v1h-1zm10 0h1v1h-1zm10 0h1v1h-1zm11 0h1v1h-1zm10 0h1v1h-1zm10 0h1v1h-1zm10 0h1v1h-1zm11 0h1v1h-1zm10 0h1v1h-1zm10 0h1v1h-1zm10 0h1v1h-1zm11 0h1v1h-1zm10 0h1v1h-1zm10 0h1v1h-1zm10 0h1v1h-1zm11 0h1v1h-1zm10 0h1v1h-1zm10 0h1v1h-1zm10 0h1v1h-1zm11 0h1v1h-1zm10 0h1v1h-1zm10 0h1v1h-1zm10 0h1v1h-1zm11 0h1v1h-1zm10 0h1v1h-1zm10 0h1v1h-1zm10 0h1v1h-1zm11 0h1v1h-1zm10 0h1v1h-1zm10 0h1v1h-1zm10 0h1v1h-1zm11 0h1v1h-1zm10 0h1v1h-1zm10 0h1v1h-1zm10 0h1v1h-1zm11 0h1v1h-1zm10 0h1v1h-1zm10 0h1v1h-1zm10 0h1v1h-1zm11 0h1v1h-1zm10 0h1v1h-1zm10 0h1v1h-1zM95 701h1v1h-1zm10 0h1v1h-1zm10 0h1v1h-1zm11 0h1v1h-1zm10 0h1v1h-1zm10 0h1v1h-1zm10 0h1v1h-1zm11 0h1v1h-1zm10 0h1v1h-1zm10 0h1v1h-1zm10 0h1v1h-1zm11 0h1v1h-1zm10 0h1v1h-1zm10 0h1v1h-1zm10 0h1v1h-1zm11 0h1v1h-1zm10 0h1v1h-1zm10 0h1v1h-1zm10 0h1v1h-1zm11 0h1v1h-1zm10 0h1v1h-1zm10 0h1v1h-1zm10 0h1v1h-1zm11 0h1v1h-1zm10 0h1v1h-1zm10 0h1v1h-1zm10 0h1v1h-1zm11 0h1v1h-1zm10 0h1v1h-1zm10 0h1v1h-1zm10 0h1v1h-1zm11 0h1v1h-1zm10 0h1v1h-1zm10 0h1v1h-1zm10 0h1v1h-1zm11 0h1v1h-1zm10 0h1v1h-1zm10 0h1v1h-1zm10 0h1v1h-1zm11 0h1v1h-1zm10 0h1v1h-1zm10 0h1v1h-1zm10 0h1v1h-1zm11 0h1v1h-1zm10 0h1v1h-1zm10 0h1v1h-1zm10 0h1v1h-1zm11 0h1v1h-1zm10 0h1v1h-1zm10 0h1v1h-1zm10 0h1v1h-1zm11 0h1v1h-1zm10 0h1v1h-1zm10 0h1v1h-1zm10 0h1v1h-1zm11 0h1v1h-1zm10 0h1v1h-1zm10 0h1v1h-1zm10 0h1v1h-1zm11 0h1v1h-1zm10 0h1v1h-1zm10 0h1v1h-1zm10 0h1v1h-1zm11 0h1v1h-1zm10 0h1v1h-1zm10 0h1v1h-1zm10 0h1v1h-1zm11 0h1v1h-1zm10 0h1v1h-1zm10 0h1v1h-1zm10 0h1v1h-1zm11 0h1v1h-1zm10 0h1v1h-1zm10 0h1v1h-1zm10 0h1v1h-1zm11 0h1v1h-1zm10 0h1v1h-1zm10 0h1v1h-1zm10 0h1v1h-1zm11 0h1v1h-1zm10 0h1v1h-1zm10 0h1v1h-1zm10 0h1v1h-1zm11 0h1v1h-1zm10 0h1v1h-1zm10 0h1v1h-1zm10 0h1v1h-1zm11 0h1v1h-1zm10 0h1v1h-1zm10 0h1v1h-1zm10 0h1v1h-1zm11 0h1v1h-1zm10 0h1v1h-1zm10 0h1v1h-1zm10 0h1v1h-1zm11 0h1v1h-1zm10 0h1v1h-1zm10 0h1v1h-1zm10 0h1v1h-1zm11 0h1v1h-1zm10 0h1v1h-1zm10 0h1v1h-1zM95 691h1v1h-1zm10 0h1v1h-1zm10 0h1v1h-1zm11 0h1v1h-1zm10 0h1v1h-1zm10 0h1v1h-1zm10 0h1v1h-1zm11 0h1v1h-1zm10 0h1v1h-1zm10 0h1v1h-1zm10 0h1v1h-1zm11 0h1v1h-1zm10 0h1v1h-1zm10 0h1v1h-1zm10 0h1v1h-1zm11 0h1v1h-1zm10 0h1v1h-1zm10 0h1v1h-1zm10 0h1v1h-1zm11 0h1v1h-1zm10 0h1v1h-1zm10 0h1v1h-1zm10 0h1v1h-1zm11 0h1v1h-1zm10 0h1v1h-1zm10 0h1v1h-1zm10 0h1v1h-1zm11 0h1v1h-1zm10 0h1v1h-1zm10 0h1v1h-1zm10 0h1v1h-1zm11 0h1v1h-1zm10 0h1v1h-1zm10 0h1v1h-1zm10 0h1v1h-1zm11 0h1v1h-1zm10 0h1v1h-1zm10 0h1v1h-1zm10 0h1v1h-1zm11 0h1v1h-1zm10 0h1v1h-1zm10 0h1v1h-1zm10 0h1v1h-1zm11 0h1v1h-1zm10 0h1v1h-1zm10 0h1v1h-1zm10 0h1v1h-1zm11 0h1v1h-1zm10 0h1v1h-1zm10 0h1v1h-1zm10 0h1v1h-1zm11 0h1v1h-1zm10 0h1v1h-1zm10 0h1v1h-1zm10 0h1v1h-1zm11 0h1v1h-1zm10 0h1v1h-1zm10 0h1v1h-1zm10 0h1v1h-1zm11 0h1v1h-1zm10 0h1v1h-1zm10 0h1v1h-1zm10 0h1v1h-1zm11 0h1v1h-1zm10 0h1v1h-1zm10 0h1v1h-1zm10 0h1v1h-1zm11 0h1v1h-1zm10 0h1v1h-1zm10 0h1v1h-1zm10 0h1v1h-1zm11 0h1v1h-1zm10 0h1v1h-1zm10 0h1v1h-1zm10 0h1v1h-1zm11 0h1v1h-1zm10 0h1v1h-1zm10 0h1v1h-1zm10 0h1v1h-1zm11 0h1v1h-1zm10 0h1v1h-1zm10 0h1v1h-1zm10 0h1v1h-1zm11 0h1v1h-1zm10 0h1v1h-1zm10 0h1v1h-1zm10 0h1v1h-1zm11 0h1v1h-1zm10 0h1v1h-1zm10 0h1v1h-1zm10 0h1v1h-1zm11 0h1v1h-1zm10 0h1v1h-1zm10 0h1v1h-1zm10 0h1v1h-1zm11 0h1v1h-1zm10 0h1v1h-1zm10 0h1v1h-1zm10 0h1v1h-1zm11 0h1v1h-1zm10 0h1v1h-1zm10 0h1v1h-1zM95 681h1v1h-1zm10 0h1v1h-1zm10 0h1v1h-1zm11 0h1v1h-1zm10 0h1v1h-1zm10 0h1v1h-1zm10 0h1v1h-1zm11 0h1v1h-1zm10 0h1v1h-1zm10 0h1v1h-1zm10 0h1v1h-1zm11 0h1v1h-1zm10 0h1v1h-1zm10 0h1v1h-1zm10 0h1v1h-1zm11 0h1v1h-1zm10 0h1v1h-1zm10 0h1v1h-1zm10 0h1v1h-1zm11 0h1v1h-1zm10 0h1v1h-1zm10 0h1v1h-1zm10 0h1v1h-1zm11 0h1v1h-1zm10 0h1v1h-1zm10 0h1v1h-1zm10 0h1v1h-1zm11 0h1v1h-1zm10 0h1v1h-1zm10 0h1v1h-1zm10 0h1v1h-1zm11 0h1v1h-1zm10 0h1v1h-1zm10 0h1v1h-1zm10 0h1v1h-1zm11 0h1v1h-1zm10 0h1v1h-1zm10 0h1v1h-1zm10 0h1v1h-1zm11 0h1v1h-1zm10 0h1v1h-1zm10 0h1v1h-1zm10 0h1v1h-1zm11 0h1v1h-1zm10 0h1v1h-1zm10 0h1v1h-1zm10 0h1v1h-1zm11 0h1v1h-1zm10 0h1v1h-1zm10 0h1v1h-1zm10 0h1v1h-1zm11 0h1v1h-1zm10 0h1v1h-1zm10 0h1v1h-1zm10 0h1v1h-1zm11 0h1v1h-1zm10 0h1v1h-1zm10 0h1v1h-1zm10 0h1v1h-1zm11 0h1v1h-1zm10 0h1v1h-1zm10 0h1v1h-1zm10 0h1v1h-1zm11 0h1v1h-1zm10 0h1v1h-1zm10 0h1v1h-1zm10 0h1v1h-1zm11 0h1v1h-1zm10 0h1v1h-1zm10 0h1v1h-1zm10 0h1v1h-1zm11 0h1v1h-1zm10 0h1v1h-1zm10 0h1v1h-1zm10 0h1v1h-1zm11 0h1v1h-1zm10 0h1v1h-1zm10 0h1v1h-1zm10 0h1v1h-1zm11 0h1v1h-1zm10 0h1v1h-1zm10 0h1v1h-1zm10 0h1v1h-1zm11 0h1v1h-1zm10 0h1v1h-1zm10 0h1v1h-1zm10 0h1v1h-1zm11 0h1v1h-1zm10 0h1v1h-1zm10 0h1v1h-1zm10 0h1v1h-1zm11 0h1v1h-1zm10 0h1v1h-1zm10 0h1v1h-1zm10 0h1v1h-1zm11 0h1v1h-1zm10 0h1v1h-1zm10 0h1v1h-1zm10 0h1v1h-1zm11 0h1v1h-1zm10 0h1v1h-1zm10 0h1v1h-1zM95 670h1v1h-1zm10 0h1v1h-1zm10 0h1v1h-1zm11 0h1v1h-1zm10 0h1v1h-1zm10 0h1v1h-1zm10 0h1v1h-1zm11 0h1v1h-1zm10 0h1v1h-1zm10 0h1v1h-1zm10 0h1v1h-1zm11 0h1v1h-1zm10 0h1v1h-1zm10 0h1v1h-1zm10 0h1v1h-1zm11 0h1v1h-1zm10 0h1v1h-1zm10 0h1v1h-1zm10 0h1v1h-1zm11 0h1v1h-1zm10 0h1v1h-1zm10 0h1v1h-1zm10 0h1v1h-1zm11 0h1v1h-1zm10 0h1v1h-1zm10 0h1v1h-1zm10 0h1v1h-1zm11 0h1v1h-1zm10 0h1v1h-1zm10 0h1v1h-1zm10 0h1v1h-1zm11 0h1v1h-1zm10 0h1v1h-1zm10 0h1v1h-1zm10 0h1v1h-1zm11 0h1v1h-1zm10 0h1v1h-1zm10 0h1v1h-1zm10 0h1v1h-1zm11 0h1v1h-1zm10 0h1v1h-1zm10 0h1v1h-1zm10 0h1v1h-1zm11 0h1v1h-1zm10 0h1v1h-1zm10 0h1v1h-1zm10 0h1v1h-1zm11 0h1v1h-1zm10 0h1v1h-1zm10 0h1v1h-1zm10 0h1v1h-1zm11 0h1v1h-1zm10 0h1v1h-1zm10 0h1v1h-1zm10 0h1v1h-1zm11 0h1v1h-1zm10 0h1v1h-1zm10 0h1v1h-1zm10 0h1v1h-1zm11 0h1v1h-1zm10 0h1v1h-1zm10 0h1v1h-1zm10 0h1v1h-1zm11 0h1v1h-1zm10 0h1v1h-1zm10 0h1v1h-1zm10 0h1v1h-1zm11 0h1v1h-1zm10 0h1v1h-1zm10 0h1v1h-1zm10 0h1v1h-1zm11 0h1v1h-1zm10 0h1v1h-1zm10 0h1v1h-1zm10 0h1v1h-1zm11 0h1v1h-1zm10 0h1v1h-1zm10 0h1v1h-1zm10 0h1v1h-1zm11 0h1v1h-1zm10 0h1v1h-1zm10 0h1v1h-1zm10 0h1v1h-1zm11 0h1v1h-1zm10 0h1v1h-1zm10 0h1v1h-1zm10 0h1v1h-1zm11 0h1v1h-1zm10 0h1v1h-1zm10 0h1v1h-1zm10 0h1v1h-1zm11 0h1v1h-1zm10 0h1v1h-1zm10 0h1v1h-1zm10 0h1v1h-1zm11 0h1v1h-1zm10 0h1v1h-1zm10 0h1v1h-1zm10 0h1v1h-1zm11 0h1v1h-1zm10 0h1v1h-1zm10 0h1v1h-1zM95 660h1v1h-1zm10 0h1v1h-1zm10 0h1v1h-1zm11 0h1v1h-1zm10 0h1v1h-1zm10 0h1v1h-1zm10 0h1v1h-1zm11 0h1v1h-1zm10 0h1v1h-1zm10 0h1v1h-1zm10 0h1v1h-1zm11 0h1v1h-1zm10 0h1v1h-1zm10 0h1v1h-1zm10 0h1v1h-1zm11 0h1v1h-1zm10 0h1v1h-1zm10 0h1v1h-1zm10 0h1v1h-1zm11 0h1v1h-1zm10 0h1v1h-1zm10 0h1v1h-1zm10 0h1v1h-1zm11 0h1v1h-1zm10 0h1v1h-1zm10 0h1v1h-1zm10 0h1v1h-1zm11 0h1v1h-1zm10 0h1v1h-1zm10 0h1v1h-1zm10 0h1v1h-1zm11 0h1v1h-1zm10 0h1v1h-1zm10 0h1v1h-1zm10 0h1v1h-1zm11 0h1v1h-1zm10 0h1v1h-1zm10 0h1v1h-1zm10 0h1v1h-1zm11 0h1v1h-1zm10 0h1v1h-1zm10 0h1v1h-1zm10 0h1v1h-1zm11 0h1v1h-1zm10 0h1v1h-1zm10 0h1v1h-1zm10 0h1v1h-1zm11 0h1v1h-1zm10 0h1v1h-1zm10 0h1v1h-1zm10 0h1v1h-1zm11 0h1v1h-1zm10 0h1v1h-1zm10 0h1v1h-1zm10 0h1v1h-1zm11 0h1v1h-1zm10 0h1v1h-1zm10 0h1v1h-1zm10 0h1v1h-1zm11 0h1v1h-1zm10 0h1v1h-1zm10 0h1v1h-1zm10 0h1v1h-1zm11 0h1v1h-1zm10 0h1v1h-1zm10 0h1v1h-1zm10 0h1v1h-1zm11 0h1v1h-1zm10 0h1v1h-1zm10 0h1v1h-1zm10 0h1v1h-1zm11 0h1v1h-1zm10 0h1v1h-1zm10 0h1v1h-1zm10 0h1v1h-1zm11 0h1v1h-1zm10 0h1v1h-1zm10 0h1v1h-1zm10 0h1v1h-1zm11 0h1v1h-1zm10 0h1v1h-1zm10 0h1v1h-1zm10 0h1v1h-1zm11 0h1v1h-1zm10 0h1v1h-1zm10 0h1v1h-1zm10 0h1v1h-1zm11 0h1v1h-1zm10 0h1v1h-1zm10 0h1v1h-1zm10 0h1v1h-1zm11 0h1v1h-1zm10 0h1v1h-1zm10 0h1v1h-1zm10 0h1v1h-1zm11 0h1v1h-1zm10 0h1v1h-1zm10 0h1v1h-1zm10 0h1v1h-1zm11 0h1v1h-1zm10 0h1v1h-1zm10 0h1v1h-1zM95 650h1v1h-1zm10 0h1v1h-1zm10 0h1v1h-1zm11 0h1v1h-1zm10 0h1v1h-1zm10 0h1v1h-1zm10 0h1v1h-1zm11 0h1v1h-1zm10 0h1v1h-1zm10 0h1v1h-1zm10 0h1v1h-1zm11 0h1v1h-1zm10 0h1v1h-1zm10 0h1v1h-1zm10 0h1v1h-1zm11 0h1v1h-1zm10 0h1v1h-1zm10 0h1v1h-1zm10 0h1v1h-1zm11 0h1v1h-1zm10 0h1v1h-1zm10 0h1v1h-1zm10 0h1v1h-1zm11 0h1v1h-1zm10 0h1v1h-1zm10 0h1v1h-1zm10 0h1v1h-1zm11 0h1v1h-1zm10 0h1v1h-1zm10 0h1v1h-1zm10 0h1v1h-1zm11 0h1v1h-1zm10 0h1v1h-1zm10 0h1v1h-1zm10 0h1v1h-1zm11 0h1v1h-1zm10 0h1v1h-1zm10 0h1v1h-1zm10 0h1v1h-1zm11 0h1v1h-1zm10 0h1v1h-1zm10 0h1v1h-1zm10 0h1v1h-1zm11 0h1v1h-1zm10 0h1v1h-1zm10 0h1v1h-1zm10 0h1v1h-1zm11 0h1v1h-1zm10 0h1v1h-1zm10 0h1v1h-1zm10 0h1v1h-1zm11 0h1v1h-1zm10 0h1v1h-1zm10 0h1v1h-1zm10 0h1v1h-1zm11 0h1v1h-1zm10 0h1v1h-1zm10 0h1v1h-1zm10 0h1v1h-1zm11 0h1v1h-1zm10 0h1v1h-1zm10 0h1v1h-1zm10 0h1v1h-1zm11 0h1v1h-1zm10 0h1v1h-1zm10 0h1v1h-1zm10 0h1v1h-1zm11 0h1v1h-1zm10 0h1v1h-1zm10 0h1v1h-1zm10 0h1v1h-1zm11 0h1v1h-1zm10 0h1v1h-1zm10 0h1v1h-1zm10 0h1v1h-1zm11 0h1v1h-1zm10 0h1v1h-1zm10 0h1v1h-1zm10 0h1v1h-1zm11 0h1v1h-1zm10 0h1v1h-1zm10 0h1v1h-1zm10 0h1v1h-1zm11 0h1v1h-1zm10 0h1v1h-1zm10 0h1v1h-1zm10 0h1v1h-1zm11 0h1v1h-1zm10 0h1v1h-1zm10 0h1v1h-1zm10 0h1v1h-1zm11 0h1v1h-1zm10 0h1v1h-1zm10 0h1v1h-1zm10 0h1v1h-1zm11 0h1v1h-1zm10 0h1v1h-1zm10 0h1v1h-1zm10 0h1v1h-1zm11 0h1v1h-1zm10 0h1v1h-1zm10 0h1v1h-1zM95 640h1v1h-1zm10 0h1v1h-1zm10 0h1v1h-1zm11 0h1v1h-1zm10 0h1v1h-1zm10 0h1v1h-1zm10 0h1v1h-1zm11 0h1v1h-1zm10 0h1v1h-1zm10 0h1v1h-1zm10 0h1v1h-1zm11 0h1v1h-1zm10 0h1v1h-1zm10 0h1v1h-1zm10 0h1v1h-1zm11 0h1v1h-1zm10 0h1v1h-1zm10 0h1v1h-1zm10 0h1v1h-1zm11 0h1v1h-1zm10 0h1v1h-1zm10 0h1v1h-1zm10 0h1v1h-1zm11 0h1v1h-1zm10 0h1v1h-1zm10 0h1v1h-1zm10 0h1v1h-1zm11 0h1v1h-1zm10 0h1v1h-1zm10 0h1v1h-1zm10 0h1v1h-1zm11 0h1v1h-1zm10 0h1v1h-1zm10 0h1v1h-1zm10 0h1v1h-1zm11 0h1v1h-1zm10 0h1v1h-1zm10 0h1v1h-1zm10 0h1v1h-1zm11 0h1v1h-1zm10 0h1v1h-1zm10 0h1v1h-1zm10 0h1v1h-1zm11 0h1v1h-1zm10 0h1v1h-1zm10 0h1v1h-1zm10 0h1v1h-1zm11 0h1v1h-1zm10 0h1v1h-1zm10 0h1v1h-1zm10 0h1v1h-1zm11 0h1v1h-1zm10 0h1v1h-1zm10 0h1v1h-1zm10 0h1v1h-1zm11 0h1v1h-1zm10 0h1v1h-1zm10 0h1v1h-1zm10 0h1v1h-1zm11 0h1v1h-1zm10 0h1v1h-1zm10 0h1v1h-1zm10 0h1v1h-1zm11 0h1v1h-1zm10 0h1v1h-1zm10 0h1v1h-1zm10 0h1v1h-1zm11 0h1v1h-1zm10 0h1v1h-1zm10 0h1v1h-1zm10 0h1v1h-1zm11 0h1v1h-1zm10 0h1v1h-1zm10 0h1v1h-1zm10 0h1v1h-1zm11 0h1v1h-1zm10 0h1v1h-1zm10 0h1v1h-1zm10 0h1v1h-1zm11 0h1v1h-1zm10 0h1v1h-1zm10 0h1v1h-1zm10 0h1v1h-1zm11 0h1v1h-1zm10 0h1v1h-1zm10 0h1v1h-1zm10 0h1v1h-1zm11 0h1v1h-1zm10 0h1v1h-1zm10 0h1v1h-1zm10 0h1v1h-1zm11 0h1v1h-1zm10 0h1v1h-1zm10 0h1v1h-1zm10 0h1v1h-1zm11 0h1v1h-1zm10 0h1v1h-1zm10 0h1v1h-1zm10 0h1v1h-1zm11 0h1v1h-1zm10 0h1v1h-1zm10 0h1v1h-1zM95 629h1v1h-1zm10 0h1v1h-1zm10 0h1v1h-1zm11 0h1v1h-1zm10 0h1v1h-1zm10 0h1v1h-1zm10 0h1v1h-1zm11 0h1v1h-1zm10 0h1v1h-1zm10 0h1v1h-1zm10 0h1v1h-1zm11 0h1v1h-1zm10 0h1v1h-1zm10 0h1v1h-1zm10 0h1v1h-1zm11 0h1v1h-1zm10 0h1v1h-1zm10 0h1v1h-1zm10 0h1v1h-1zm11 0h1v1h-1zm10 0h1v1h-1zm10 0h1v1h-1zm10 0h1v1h-1zm11 0h1v1h-1zm10 0h1v1h-1zm10 0h1v1h-1zm10 0h1v1h-1zm11 0h1v1h-1zm10 0h1v1h-1zm10 0h1v1h-1zm10 0h1v1h-1zm11 0h1v1h-1zm10 0h1v1h-1zm10 0h1v1h-1zm10 0h1v1h-1zm11 0h1v1h-1zm10 0h1v1h-1zm10 0h1v1h-1zm10 0h1v1h-1zm11 0h1v1h-1zm10 0h1v1h-1zm10 0h1v1h-1zm10 0h1v1h-1zm11 0h1v1h-1zm10 0h1v1h-1zm10 0h1v1h-1zm10 0h1v1h-1zm11 0h1v1h-1zm10 0h1v1h-1zm10 0h1v1h-1zm10 0h1v1h-1zm11 0h1v1h-1zm10 0h1v1h-1zm10 0h1v1h-1zm10 0h1v1h-1zm11 0h1v1h-1zm10 0h1v1h-1zm10 0h1v1h-1zm10 0h1v1h-1zm11 0h1v1h-1zm10 0h1v1h-1zm10 0h1v1h-1zm10 0h1v1h-1zm11 0h1v1h-1zm10 0h1v1h-1zm10 0h1v1h-1zm10 0h1v1h-1zm11 0h1v1h-1zm10 0h1v1h-1zm10 0h1v1h-1zm10 0h1v1h-1zm11 0h1v1h-1zm10 0h1v1h-1zm10 0h1v1h-1zm10 0h1v1h-1zm11 0h1v1h-1zm10 0h1v1h-1zm10 0h1v1h-1zm10 0h1v1h-1zm11 0h1v1h-1zm10 0h1v1h-1zm10 0h1v1h-1zm10 0h1v1h-1zm11 0h1v1h-1zm10 0h1v1h-1zm10 0h1v1h-1zm10 0h1v1h-1zm11 0h1v1h-1zm10 0h1v1h-1zm10 0h1v1h-1zm10 0h1v1h-1zm11 0h1v1h-1zm10 0h1v1h-1zm10 0h1v1h-1zm10 0h1v1h-1zm11 0h1v1h-1zm10 0h1v1h-1zm10 0h1v1h-1zm10 0h1v1h-1zm11 0h1v1h-1zm10 0h1v1h-1zm10 0h1v1h-1zM95 619h1v1h-1zm10 0h1v1h-1zm10 0h1v1h-1zm11 0h1v1h-1zm10 0h1v1h-1zm10 0h1v1h-1zm10 0h1v1h-1zm11 0h1v1h-1zm10 0h1v1h-1zm10 0h1v1h-1zm10 0h1v1h-1zm11 0h1v1h-1zm10 0h1v1h-1zm10 0h1v1h-1zm10 0h1v1h-1zm11 0h1v1h-1zm10 0h1v1h-1zm10 0h1v1h-1zm10 0h1v1h-1zm11 0h1v1h-1zm10 0h1v1h-1zm10 0h1v1h-1zm10 0h1v1h-1zm11 0h1v1h-1zm10 0h1v1h-1zm10 0h1v1h-1zm10 0h1v1h-1zm11 0h1v1h-1zm10 0h1v1h-1zm10 0h1v1h-1zm10 0h1v1h-1zm11 0h1v1h-1zm10 0h1v1h-1zm10 0h1v1h-1zm10 0h1v1h-1zm11 0h1v1h-1zm10 0h1v1h-1zm10 0h1v1h-1zm10 0h1v1h-1zm11 0h1v1h-1zm10 0h1v1h-1zm10 0h1v1h-1zm10 0h1v1h-1zm11 0h1v1h-1zm10 0h1v1h-1zm10 0h1v1h-1zm10 0h1v1h-1zm11 0h1v1h-1zm10 0h1v1h-1zm10 0h1v1h-1zm10 0h1v1h-1zm11 0h1v1h-1zm10 0h1v1h-1zm10 0h1v1h-1zm10 0h1v1h-1zm11 0h1v1h-1zm10 0h1v1h-1zm10 0h1v1h-1zm10 0h1v1h-1zm11 0h1v1h-1zm10 0h1v1h-1zm10 0h1v1h-1zm10 0h1v1h-1zm11 0h1v1h-1zm10 0h1v1h-1zm10 0h1v1h-1zm10 0h1v1h-1zm11 0h1v1h-1zm10 0h1v1h-1zm10 0h1v1h-1zm10 0h1v1h-1zm11 0h1v1h-1zm10 0h1v1h-1zm10 0h1v1h-1zm10 0h1v1h-1zm11 0h1v1h-1zm10 0h1v1h-1zm10 0h1v1h-1zm10 0h1v1h-1zm11 0h1v1h-1zm10 0h1v1h-1zm10 0h1v1h-1zm10 0h1v1h-1zm11 0h1v1h-1zm10 0h1v1h-1zm10 0h1v1h-1zm10 0h1v1h-1zm11 0h1v1h-1zm10 0h1v1h-1zm10 0h1v1h-1zm10 0h1v1h-1zm11 0h1v1h-1zm10 0h1v1h-1zm10 0h1v1h-1zm10 0h1v1h-1zm11 0h1v1h-1zm10 0h1v1h-1zm10 0h1v1h-1zm10 0h1v1h-1zm11 0h1v1h-1zm10 0h1v1h-1zm10 0h1v1h-1zM95 609h1v1h-1zm10 0h1v1h-1zm10 0h1v1h-1zm11 0h1v1h-1zm10 0h1v1h-1zm10 0h1v1h-1zm10 0h1v1h-1zm11 0h1v1h-1zm10 0h1v1h-1zm10 0h1v1h-1zm10 0h1v1h-1zm11 0h1v1h-1zm10 0h1v1h-1zm10 0h1v1h-1zm10 0h1v1h-1zm11 0h1v1h-1zm10 0h1v1h-1zm10 0h1v1h-1zm10 0h1v1h-1zm11 0h1v1h-1zm10 0h1v1h-1zm10 0h1v1h-1zm10 0h1v1h-1zm11 0h1v1h-1zm10 0h1v1h-1zm10 0h1v1h-1zm10 0h1v1h-1zm11 0h1v1h-1zm10 0h1v1h-1zm10 0h1v1h-1zm10 0h1v1h-1zm11 0h1v1h-1zm10 0h1v1h-1zm10 0h1v1h-1zm10 0h1v1h-1zm11 0h1v1h-1zm10 0h1v1h-1zm10 0h1v1h-1zm10 0h1v1h-1zm11 0h1v1h-1zm10 0h1v1h-1zm10 0h1v1h-1zm10 0h1v1h-1zm11 0h1v1h-1zm10 0h1v1h-1zm10 0h1v1h-1zm10 0h1v1h-1zm11 0h1v1h-1zm10 0h1v1h-1zm10 0h1v1h-1zm10 0h1v1h-1zm11 0h1v1h-1zm10 0h1v1h-1zm10 0h1v1h-1zm10 0h1v1h-1zm11 0h1v1h-1zm10 0h1v1h-1zm10 0h1v1h-1zm10 0h1v1h-1zm11 0h1v1h-1zm10 0h1v1h-1zm10 0h1v1h-1zm10 0h1v1h-1zm11 0h1v1h-1zm10 0h1v1h-1zm10 0h1v1h-1zm10 0h1v1h-1zm11 0h1v1h-1zm10 0h1v1h-1zm10 0h1v1h-1zm10 0h1v1h-1zm11 0h1v1h-1zm10 0h1v1h-1zm10 0h1v1h-1zm10 0h1v1h-1zm11 0h1v1h-1zm10 0h1v1h-1zm10 0h1v1h-1zm10 0h1v1h-1zm11 0h1v1h-1zm10 0h1v1h-1zm10 0h1v1h-1zm10 0h1v1h-1zm11 0h1v1h-1zm10 0h1v1h-1zm10 0h1v1h-1zm10 0h1v1h-1zm11 0h1v1h-1zm10 0h1v1h-1zm10 0h1v1h-1zm10 0h1v1h-1zm11 0h1v1h-1zm10 0h1v1h-1zm10 0h1v1h-1zm10 0h1v1h-1zm11 0h1v1h-1zm10 0h1v1h-1zm10 0h1v1h-1zm10 0h1v1h-1zm11 0h1v1h-1zm10 0h1v1h-1zm10 0h1v1h-1zM95 599h1v1h-1zm10 0h1v1h-1zm10 0h1v1h-1zm11 0h1v1h-1zm10 0h1v1h-1zm10 0h1v1h-1zm10 0h1v1h-1zm11 0h1v1h-1zm10 0h1v1h-1zm10 0h1v1h-1zm10 0h1v1h-1zm11 0h1v1h-1zm10 0h1v1h-1zm10 0h1v1h-1zm10 0h1v1h-1zm11 0h1v1h-1zm10 0h1v1h-1zm10 0h1v1h-1zm10 0h1v1h-1zm11 0h1v1h-1zm10 0h1v1h-1zm10 0h1v1h-1zm10 0h1v1h-1zm11 0h1v1h-1zm10 0h1v1h-1zm10 0h1v1h-1zm10 0h1v1h-1zm11 0h1v1h-1zm10 0h1v1h-1zm10 0h1v1h-1zm10 0h1v1h-1zm11 0h1v1h-1zm10 0h1v1h-1zm10 0h1v1h-1zm10 0h1v1h-1zm11 0h1v1h-1zm10 0h1v1h-1zm10 0h1v1h-1zm10 0h1v1h-1zm11 0h1v1h-1zm10 0h1v1h-1zm10 0h1v1h-1zm10 0h1v1h-1zm11 0h1v1h-1zm10 0h1v1h-1zm10 0h1v1h-1zm10 0h1v1h-1zm11 0h1v1h-1zm10 0h1v1h-1zm10 0h1v1h-1zm10 0h1v1h-1zm11 0h1v1h-1zm10 0h1v1h-1zm10 0h1v1h-1zm10 0h1v1h-1zm11 0h1v1h-1zm10 0h1v1h-1zm10 0h1v1h-1zm10 0h1v1h-1zm11 0h1v1h-1zm10 0h1v1h-1zm10 0h1v1h-1zm10 0h1v1h-1zm11 0h1v1h-1zm10 0h1v1h-1zm10 0h1v1h-1zm10 0h1v1h-1zm11 0h1v1h-1zm10 0h1v1h-1zm10 0h1v1h-1zm10 0h1v1h-1zm11 0h1v1h-1zm10 0h1v1h-1zm10 0h1v1h-1zm10 0h1v1h-1zm11 0h1v1h-1zm10 0h1v1h-1zm10 0h1v1h-1zm10 0h1v1h-1zm11 0h1v1h-1zm10 0h1v1h-1zm10 0h1v1h-1zm10 0h1v1h-1zm11 0h1v1h-1zm10 0h1v1h-1zm10 0h1v1h-1zm10 0h1v1h-1zm11 0h1v1h-1zm10 0h1v1h-1zm10 0h1v1h-1zm10 0h1v1h-1zm11 0h1v1h-1zm10 0h1v1h-1zm10 0h1v1h-1zm10 0h1v1h-1zm11 0h1v1h-1zm10 0h1v1h-1zm10 0h1v1h-1zm10 0h1v1h-1zm11 0h1v1h-1zm10 0h1v1h-1zm10 0h1v1h-1zM95 588h1v1h-1zm10 0h1v1h-1zm10 0h1v1h-1zm11 0h1v1h-1zm10 0h1v1h-1zm10 0h1v1h-1zm10 0h1v1h-1zm11 0h1v1h-1zm10 0h1v1h-1zm10 0h1v1h-1zm10 0h1v1h-1zm11 0h1v1h-1zm10 0h1v1h-1zm10 0h1v1h-1zm10 0h1v1h-1zm11 0h1v1h-1zm10 0h1v1h-1zm10 0h1v1h-1zm10 0h1v1h-1zm11 0h1v1h-1zm10 0h1v1h-1zm10 0h1v1h-1zm10 0h1v1h-1zm11 0h1v1h-1zm10 0h1v1h-1zm10 0h1v1h-1zm10 0h1v1h-1zm11 0h1v1h-1zm10 0h1v1h-1zm10 0h1v1h-1zm10 0h1v1h-1zm11 0h1v1h-1zm10 0h1v1h-1zm10 0h1v1h-1zm10 0h1v1h-1zm11 0h1v1h-1zm10 0h1v1h-1zm10 0h1v1h-1zm10 0h1v1h-1zm11 0h1v1h-1zm10 0h1v1h-1zm10 0h1v1h-1zm10 0h1v1h-1zm11 0h1v1h-1zm10 0h1v1h-1zm10 0h1v1h-1zm10 0h1v1h-1zm11 0h1v1h-1zm10 0h1v1h-1zm10 0h1v1h-1zm10 0h1v1h-1zm11 0h1v1h-1zm10 0h1v1h-1zm10 0h1v1h-1zm10 0h1v1h-1zm11 0h1v1h-1zm10 0h1v1h-1zm10 0h1v1h-1zm10 0h1v1h-1zm11 0h1v1h-1zm10 0h1v1h-1zm10 0h1v1h-1zm10 0h1v1h-1zm11 0h1v1h-1zm10 0h1v1h-1zm10 0h1v1h-1zm10 0h1v1h-1zm11 0h1v1h-1zm10 0h1v1h-1zm10 0h1v1h-1zm10 0h1v1h-1zm11 0h1v1h-1zm10 0h1v1h-1zm10 0h1v1h-1zm10 0h1v1h-1zm11 0h1v1h-1zm10 0h1v1h-1zm10 0h1v1h-1zm10 0h1v1h-1zm11 0h1v1h-1zm10 0h1v1h-1zm10 0h1v1h-1zm10 0h1v1h-1zm11 0h1v1h-1zm10 0h1v1h-1zm10 0h1v1h-1zm10 0h1v1h-1zm11 0h1v1h-1zm10 0h1v1h-1zm10 0h1v1h-1zm10 0h1v1h-1zm11 0h1v1h-1zm10 0h1v1h-1zm10 0h1v1h-1zm10 0h1v1h-1zm11 0h1v1h-1zm10 0h1v1h-1zm10 0h1v1h-1zm10 0h1v1h-1zm11 0h1v1h-1zm10 0h1v1h-1zm10 0h1v1h-1zM95 578h1v1h-1zm10 0h1v1h-1zm10 0h1v1h-1zm11 0h1v1h-1zm10 0h1v1h-1zm10 0h1v1h-1zm10 0h1v1h-1zm11 0h1v1h-1zm10 0h1v1h-1zm10 0h1v1h-1zm10 0h1v1h-1zm11 0h1v1h-1zm10 0h1v1h-1zm10 0h1v1h-1zm10 0h1v1h-1zm11 0h1v1h-1zm10 0h1v1h-1zm10 0h1v1h-1zm10 0h1v1h-1zm11 0h1v1h-1zm10 0h1v1h-1zm10 0h1v1h-1zm10 0h1v1h-1zm11 0h1v1h-1zm10 0h1v1h-1zm10 0h1v1h-1zm10 0h1v1h-1zm11 0h1v1h-1zm10 0h1v1h-1zm10 0h1v1h-1zm10 0h1v1h-1zm11 0h1v1h-1zm10 0h1v1h-1zm10 0h1v1h-1zm10 0h1v1h-1zm11 0h1v1h-1zm10 0h1v1h-1zm10 0h1v1h-1zm10 0h1v1h-1zm11 0h1v1h-1zm10 0h1v1h-1zm10 0h1v1h-1zm10 0h1v1h-1zm11 0h1v1h-1zm10 0h1v1h-1zm10 0h1v1h-1zm10 0h1v1h-1zm11 0h1v1h-1zm10 0h1v1h-1zm10 0h1v1h-1zm10 0h1v1h-1zm11 0h1v1h-1zm10 0h1v1h-1zm10 0h1v1h-1zm10 0h1v1h-1zm11 0h1v1h-1zm10 0h1v1h-1zm10 0h1v1h-1zm10 0h1v1h-1zm11 0h1v1h-1zm10 0h1v1h-1zm10 0h1v1h-1zm10 0h1v1h-1zm11 0h1v1h-1zm10 0h1v1h-1zm10 0h1v1h-1zm10 0h1v1h-1zm11 0h1v1h-1zm10 0h1v1h-1zm10 0h1v1h-1zm10 0h1v1h-1zm11 0h1v1h-1zm10 0h1v1h-1zm10 0h1v1h-1zm10 0h1v1h-1zm11 0h1v1h-1zm10 0h1v1h-1zm10 0h1v1h-1zm10 0h1v1h-1zm11 0h1v1h-1zm10 0h1v1h-1zm10 0h1v1h-1zm10 0h1v1h-1zm11 0h1v1h-1zm10 0h1v1h-1zm10 0h1v1h-1zm10 0h1v1h-1zm11 0h1v1h-1zm10 0h1v1h-1zm10 0h1v1h-1zm10 0h1v1h-1zm11 0h1v1h-1zm10 0h1v1h-1zm10 0h1v1h-1zm10 0h1v1h-1zm11 0h1v1h-1zm10 0h1v1h-1zm10 0h1v1h-1zm10 0h1v1h-1zm11 0h1v1h-1zm10 0h1v1h-1zm10 0h1v1h-1zM95 568h1v1h-1zm10 0h1v1h-1zm10 0h1v1h-1zm11 0h1v1h-1zm10 0h1v1h-1zm10 0h1v1h-1zm10 0h1v1h-1zm11 0h1v1h-1zm10 0h1v1h-1zm10 0h1v1h-1zm10 0h1v1h-1zm11 0h1v1h-1zm10 0h1v1h-1zm10 0h1v1h-1zm10 0h1v1h-1zm11 0h1v1h-1zm10 0h1v1h-1zm10 0h1v1h-1zm10 0h1v1h-1zm11 0h1v1h-1zm10 0h1v1h-1zm10 0h1v1h-1zm10 0h1v1h-1zm11 0h1v1h-1zm10 0h1v1h-1zm10 0h1v1h-1zm10 0h1v1h-1zm11 0h1v1h-1zm10 0h1v1h-1zm10 0h1v1h-1zm10 0h1v1h-1zm11 0h1v1h-1zm10 0h1v1h-1zm10 0h1v1h-1zm10 0h1v1h-1zm11 0h1v1h-1zm10 0h1v1h-1zm10 0h1v1h-1zm10 0h1v1h-1zm11 0h1v1h-1zm10 0h1v1h-1zm10 0h1v1h-1zm10 0h1v1h-1zm11 0h1v1h-1zm10 0h1v1h-1zm10 0h1v1h-1zm10 0h1v1h-1zm11 0h1v1h-1zm10 0h1v1h-1zm10 0h1v1h-1zm10 0h1v1h-1zm11 0h1v1h-1zm10 0h1v1h-1zm10 0h1v1h-1zm10 0h1v1h-1zm11 0h1v1h-1zm10 0h1v1h-1zm10 0h1v1h-1zm10 0h1v1h-1zm11 0h1v1h-1zm10 0h1v1h-1zm10 0h1v1h-1zm10 0h1v1h-1zm11 0h1v1h-1zm10 0h1v1h-1zm10 0h1v1h-1zm10 0h1v1h-1zm11 0h1v1h-1zm10 0h1v1h-1zm10 0h1v1h-1zm10 0h1v1h-1zm11 0h1v1h-1zm10 0h1v1h-1zm10 0h1v1h-1zm10 0h1v1h-1zm11 0h1v1h-1zm10 0h1v1h-1zm10 0h1v1h-1zm10 0h1v1h-1zm11 0h1v1h-1zm10 0h1v1h-1zm10 0h1v1h-1zm10 0h1v1h-1zm11 0h1v1h-1zm10 0h1v1h-1zm10 0h1v1h-1zm10 0h1v1h-1zm11 0h1v1h-1zm10 0h1v1h-1zm10 0h1v1h-1zm10 0h1v1h-1zm11 0h1v1h-1zm10 0h1v1h-1zm10 0h1v1h-1zm10 0h1v1h-1zm11 0h1v1h-1zm10 0h1v1h-1zm10 0h1v1h-1zm10 0h1v1h-1zm11 0h1v1h-1zm10 0h1v1h-1zm10 0h1v1h-1zM95 558h1v1h-1zm10 0h1v1h-1zm10 0h1v1h-1zm11 0h1v1h-1zm10 0h1v1h-1zm10 0h1v1h-1zm10 0h1v1h-1zm11 0h1v1h-1zm10 0h1v1h-1zm10 0h1v1h-1zm10 0h1v1h-1zm11 0h1v1h-1zm10 0h1v1h-1zm10 0h1v1h-1zm10 0h1v1h-1zm11 0h1v1h-1zm10 0h1v1h-1zm10 0h1v1h-1zm10 0h1v1h-1zm11 0h1v1h-1zm10 0h1v1h-1zm10 0h1v1h-1zm10 0h1v1h-1zm11 0h1v1h-1zm10 0h1v1h-1zm10 0h1v1h-1zm10 0h1v1h-1zm11 0h1v1h-1zm10 0h1v1h-1zm10 0h1v1h-1zm10 0h1v1h-1zm11 0h1v1h-1zm10 0h1v1h-1zm10 0h1v1h-1zm10 0h1v1h-1zm11 0h1v1h-1zm10 0h1v1h-1zm10 0h1v1h-1zm10 0h1v1h-1zm11 0h1v1h-1zm10 0h1v1h-1zm10 0h1v1h-1zm10 0h1v1h-1zm11 0h1v1h-1zm10 0h1v1h-1zm10 0h1v1h-1zm10 0h1v1h-1zm11 0h1v1h-1zm10 0h1v1h-1zm10 0h1v1h-1zm10 0h1v1h-1zm11 0h1v1h-1zm10 0h1v1h-1zm10 0h1v1h-1zm10 0h1v1h-1zm11 0h1v1h-1zm10 0h1v1h-1zm10 0h1v1h-1zm10 0h1v1h-1zm11 0h1v1h-1zm10 0h1v1h-1zm10 0h1v1h-1zm10 0h1v1h-1zm11 0h1v1h-1zm10 0h1v1h-1zm10 0h1v1h-1zm10 0h1v1h-1zm11 0h1v1h-1zm10 0h1v1h-1zm10 0h1v1h-1zm10 0h1v1h-1zm11 0h1v1h-1zm10 0h1v1h-1zm10 0h1v1h-1zm10 0h1v1h-1zm11 0h1v1h-1zm10 0h1v1h-1zm10 0h1v1h-1zm10 0h1v1h-1zm11 0h1v1h-1zm10 0h1v1h-1zm10 0h1v1h-1zm10 0h1v1h-1zm11 0h1v1h-1zm10 0h1v1h-1zm10 0h1v1h-1zm10 0h1v1h-1zm11 0h1v1h-1zm10 0h1v1h-1zm10 0h1v1h-1zm10 0h1v1h-1zm11 0h1v1h-1zm10 0h1v1h-1zm10 0h1v1h-1zm10 0h1v1h-1zm11 0h1v1h-1zm10 0h1v1h-1zm10 0h1v1h-1zm10 0h1v1h-1zm11 0h1v1h-1zm10 0h1v1h-1zm10 0h1v1h-1zM95 547h1v1h-1zm10 0h1v1h-1zm10 0h1v1h-1zm11 0h1v1h-1zm10 0h1v1h-1zm10 0h1v1h-1zm10 0h1v1h-1zm11 0h1v1h-1zm10 0h1v1h-1zm10 0h1v1h-1zm10 0h1v1h-1zm11 0h1v1h-1zm10 0h1v1h-1zm10 0h1v1h-1zm10 0h1v1h-1zm11 0h1v1h-1zm10 0h1v1h-1zm10 0h1v1h-1zm10 0h1v1h-1zm11 0h1v1h-1zm10 0h1v1h-1zm10 0h1v1h-1zm10 0h1v1h-1zm11 0h1v1h-1zm10 0h1v1h-1zm10 0h1v1h-1zm10 0h1v1h-1zm11 0h1v1h-1zm10 0h1v1h-1zm10 0h1v1h-1zm10 0h1v1h-1zm11 0h1v1h-1zm10 0h1v1h-1zm10 0h1v1h-1zm10 0h1v1h-1zm11 0h1v1h-1zm10 0h1v1h-1zm10 0h1v1h-1zm10 0h1v1h-1zm11 0h1v1h-1zm10 0h1v1h-1zm10 0h1v1h-1zm10 0h1v1h-1zm11 0h1v1h-1zm10 0h1v1h-1zm10 0h1v1h-1zm10 0h1v1h-1zm11 0h1v1h-1zm10 0h1v1h-1zm10 0h1v1h-1zm10 0h1v1h-1zm11 0h1v1h-1zm10 0h1v1h-1zm10 0h1v1h-1zm10 0h1v1h-1zm11 0h1v1h-1zm10 0h1v1h-1zm10 0h1v1h-1zm10 0h1v1h-1zm11 0h1v1h-1zm10 0h1v1h-1zm10 0h1v1h-1zm10 0h1v1h-1zm11 0h1v1h-1zm10 0h1v1h-1zm10 0h1v1h-1zm10 0h1v1h-1zm11 0h1v1h-1zm10 0h1v1h-1zm10 0h1v1h-1zm10 0h1v1h-1zm11 0h1v1h-1zm10 0h1v1h-1zm10 0h1v1h-1zm10 0h1v1h-1zm11 0h1v1h-1zm10 0h1v1h-1zm10 0h1v1h-1zm10 0h1v1h-1zm11 0h1v1h-1zm10 0h1v1h-1zm10 0h1v1h-1zm10 0h1v1h-1zm11 0h1v1h-1zm10 0h1v1h-1zm10 0h1v1h-1zm10 0h1v1h-1zm11 0h1v1h-1zm10 0h1v1h-1zm10 0h1v1h-1zm10 0h1v1h-1zm11 0h1v1h-1zm10 0h1v1h-1zm10 0h1v1h-1zm10 0h1v1h-1zm11 0h1v1h-1zm10 0h1v1h-1zm10 0h1v1h-1zm10 0h1v1h-1zm11 0h1v1h-1zm10 0h1v1h-1zm10 0h1v1h-1zM95 537h1v1h-1zm10 0h1v1h-1zm10 0h1v1h-1zm11 0h1v1h-1zm10 0h1v1h-1zm10 0h1v1h-1zm10 0h1v1h-1zm11 0h1v1h-1zm10 0h1v1h-1zm10 0h1v1h-1zm10 0h1v1h-1zm11 0h1v1h-1zm10 0h1v1h-1zm10 0h1v1h-1zm10 0h1v1h-1zm11 0h1v1h-1zm10 0h1v1h-1zm10 0h1v1h-1zm10 0h1v1h-1zm11 0h1v1h-1zm10 0h1v1h-1zm10 0h1v1h-1zm10 0h1v1h-1zm11 0h1v1h-1zm10 0h1v1h-1zm10 0h1v1h-1zm10 0h1v1h-1zm11 0h1v1h-1zm10 0h1v1h-1zm10 0h1v1h-1zm10 0h1v1h-1zm11 0h1v1h-1zm10 0h1v1h-1zm10 0h1v1h-1zm10 0h1v1h-1zm11 0h1v1h-1zm10 0h1v1h-1zm10 0h1v1h-1zm10 0h1v1h-1zm11 0h1v1h-1zm10 0h1v1h-1zm10 0h1v1h-1zm10 0h1v1h-1zm11 0h1v1h-1zm10 0h1v1h-1zm10 0h1v1h-1zm10 0h1v1h-1zm11 0h1v1h-1zm10 0h1v1h-1zm10 0h1v1h-1zm10 0h1v1h-1zm11 0h1v1h-1zm10 0h1v1h-1zm10 0h1v1h-1zm10 0h1v1h-1zm11 0h1v1h-1zm10 0h1v1h-1zm10 0h1v1h-1zm10 0h1v1h-1zm11 0h1v1h-1zm10 0h1v1h-1zm10 0h1v1h-1zm10 0h1v1h-1zm11 0h1v1h-1zm10 0h1v1h-1zm10 0h1v1h-1zm10 0h1v1h-1zm11 0h1v1h-1zm10 0h1v1h-1zm10 0h1v1h-1zm10 0h1v1h-1zm11 0h1v1h-1zm10 0h1v1h-1zm10 0h1v1h-1zm10 0h1v1h-1zm11 0h1v1h-1zm10 0h1v1h-1zm10 0h1v1h-1zm10 0h1v1h-1zm11 0h1v1h-1zm10 0h1v1h-1zm10 0h1v1h-1zm10 0h1v1h-1zm11 0h1v1h-1zm10 0h1v1h-1zm10 0h1v1h-1zm10 0h1v1h-1zm11 0h1v1h-1zm10 0h1v1h-1zm10 0h1v1h-1zm10 0h1v1h-1zm11 0h1v1h-1zm10 0h1v1h-1zm10 0h1v1h-1zm10 0h1v1h-1zm11 0h1v1h-1zm10 0h1v1h-1zm10 0h1v1h-1zm10 0h1v1h-1zm11 0h1v1h-1zm10 0h1v1h-1zm10 0h1v1h-1zM95 527h1v1h-1zm10 0h1v1h-1zm10 0h1v1h-1zm11 0h1v1h-1zm10 0h1v1h-1zm10 0h1v1h-1zm10 0h1v1h-1zm11 0h1v1h-1zm10 0h1v1h-1zm10 0h1v1h-1zm10 0h1v1h-1zm11 0h1v1h-1zm10 0h1v1h-1zm10 0h1v1h-1zm10 0h1v1h-1zm11 0h1v1h-1zm10 0h1v1h-1zm10 0h1v1h-1zm10 0h1v1h-1zm11 0h1v1h-1zm10 0h1v1h-1zm10 0h1v1h-1zm10 0h1v1h-1zm11 0h1v1h-1zm10 0h1v1h-1zm10 0h1v1h-1zm10 0h1v1h-1zm11 0h1v1h-1zm10 0h1v1h-1zm10 0h1v1h-1zm10 0h1v1h-1zm11 0h1v1h-1zm10 0h1v1h-1zm10 0h1v1h-1zm10 0h1v1h-1zm11 0h1v1h-1zm10 0h1v1h-1zm10 0h1v1h-1zm10 0h1v1h-1zm11 0h1v1h-1zm10 0h1v1h-1zm10 0h1v1h-1zm10 0h1v1h-1zm11 0h1v1h-1zm10 0h1v1h-1zm10 0h1v1h-1zm10 0h1v1h-1zm11 0h1v1h-1zm10 0h1v1h-1zm10 0h1v1h-1zm10 0h1v1h-1zm11 0h1v1h-1zm10 0h1v1h-1zm10 0h1v1h-1zm10 0h1v1h-1zm11 0h1v1h-1zm10 0h1v1h-1zm10 0h1v1h-1zm10 0h1v1h-1zm11 0h1v1h-1zm10 0h1v1h-1zm10 0h1v1h-1zm10 0h1v1h-1zm11 0h1v1h-1zm10 0h1v1h-1zm10 0h1v1h-1zm10 0h1v1h-1zm11 0h1v1h-1zm10 0h1v1h-1zm10 0h1v1h-1zm10 0h1v1h-1zm11 0h1v1h-1zm10 0h1v1h-1zm10 0h1v1h-1zm10 0h1v1h-1zm11 0h1v1h-1zm10 0h1v1h-1zm10 0h1v1h-1zm10 0h1v1h-1zm11 0h1v1h-1zm10 0h1v1h-1zm10 0h1v1h-1zm10 0h1v1h-1zm11 0h1v1h-1zm10 0h1v1h-1zm10 0h1v1h-1zm10 0h1v1h-1zm11 0h1v1h-1zm10 0h1v1h-1zm10 0h1v1h-1zm10 0h1v1h-1zm11 0h1v1h-1zm10 0h1v1h-1zm10 0h1v1h-1zm10 0h1v1h-1zm11 0h1v1h-1zm10 0h1v1h-1zm10 0h1v1h-1zm10 0h1v1h-1zm11 0h1v1h-1zm10 0h1v1h-1zm10 0h1v1h-1zM95 517h1v1h-1zm10 0h1v1h-1zm10 0h1v1h-1zm11 0h1v1h-1zm10 0h1v1h-1zm10 0h1v1h-1zm10 0h1v1h-1zm11 0h1v1h-1zm10 0h1v1h-1zm10 0h1v1h-1zm10 0h1v1h-1zm11 0h1v1h-1zm10 0h1v1h-1zm10 0h1v1h-1zm10 0h1v1h-1zm11 0h1v1h-1zm10 0h1v1h-1zm10 0h1v1h-1zm10 0h1v1h-1zm11 0h1v1h-1zm10 0h1v1h-1zm10 0h1v1h-1zm10 0h1v1h-1zm11 0h1v1h-1zm10 0h1v1h-1zm10 0h1v1h-1zm10 0h1v1h-1zm11 0h1v1h-1zm10 0h1v1h-1zm10 0h1v1h-1zm10 0h1v1h-1zm11 0h1v1h-1zm10 0h1v1h-1zm10 0h1v1h-1zm10 0h1v1h-1zm11 0h1v1h-1zm10 0h1v1h-1zm10 0h1v1h-1zm10 0h1v1h-1zm11 0h1v1h-1zm10 0h1v1h-1zm10 0h1v1h-1zm10 0h1v1h-1zm11 0h1v1h-1zm10 0h1v1h-1zm10 0h1v1h-1zm10 0h1v1h-1zm11 0h1v1h-1zm10 0h1v1h-1zm10 0h1v1h-1zm10 0h1v1h-1zm11 0h1v1h-1zm10 0h1v1h-1zm10 0h1v1h-1zm10 0h1v1h-1zm11 0h1v1h-1zm10 0h1v1h-1zm10 0h1v1h-1zm10 0h1v1h-1zm11 0h1v1h-1zm10 0h1v1h-1zm10 0h1v1h-1zm10 0h1v1h-1zm11 0h1v1h-1zm10 0h1v1h-1zm10 0h1v1h-1zm10 0h1v1h-1zm11 0h1v1h-1zm10 0h1v1h-1zm10 0h1v1h-1zm10 0h1v1h-1zm11 0h1v1h-1zm10 0h1v1h-1zm10 0h1v1h-1zm10 0h1v1h-1zm11 0h1v1h-1zm10 0h1v1h-1zm10 0h1v1h-1zm10 0h1v1h-1zm11 0h1v1h-1zm10 0h1v1h-1zm10 0h1v1h-1zm10 0h1v1h-1zm11 0h1v1h-1zm10 0h1v1h-1zm10 0h1v1h-1zm10 0h1v1h-1zm11 0h1v1h-1zm10 0h1v1h-1zm10 0h1v1h-1zm10 0h1v1h-1zm11 0h1v1h-1zm10 0h1v1h-1zm10 0h1v1h-1zm10 0h1v1h-1zm11 0h1v1h-1zm10 0h1v1h-1zm10 0h1v1h-1zm10 0h1v1h-1zm11 0h1v1h-1zm10 0h1v1h-1zm10 0h1v1h-1zM95 506h1v1h-1zm10 0h1v1h-1zm10 0h1v1h-1zm11 0h1v1h-1zm10 0h1v1h-1zm10 0h1v1h-1zm10 0h1v1h-1zm11 0h1v1h-1zm10 0h1v1h-1zm10 0h1v1h-1zm10 0h1v1h-1zm11 0h1v1h-1zm10 0h1v1h-1zm10 0h1v1h-1zm10 0h1v1h-1zm11 0h1v1h-1zm10 0h1v1h-1zm10 0h1v1h-1zm10 0h1v1h-1zm11 0h1v1h-1zm10 0h1v1h-1zm10 0h1v1h-1zm10 0h1v1h-1zm11 0h1v1h-1zm10 0h1v1h-1zm10 0h1v1h-1zm10 0h1v1h-1zm11 0h1v1h-1zm10 0h1v1h-1zm10 0h1v1h-1zm10 0h1v1h-1zm11 0h1v1h-1zm10 0h1v1h-1zm10 0h1v1h-1zm10 0h1v1h-1zm11 0h1v1h-1zm10 0h1v1h-1zm10 0h1v1h-1zm10 0h1v1h-1zm11 0h1v1h-1zm10 0h1v1h-1zm10 0h1v1h-1zm10 0h1v1h-1zm11 0h1v1h-1zm10 0h1v1h-1zm10 0h1v1h-1zm10 0h1v1h-1zm11 0h1v1h-1zm10 0h1v1h-1zm10 0h1v1h-1zm10 0h1v1h-1zm11 0h1v1h-1zm10 0h1v1h-1zm10 0h1v1h-1zm10 0h1v1h-1zm11 0h1v1h-1zm10 0h1v1h-1zm10 0h1v1h-1zm10 0h1v1h-1zm11 0h1v1h-1zm10 0h1v1h-1zm10 0h1v1h-1zm10 0h1v1h-1zm11 0h1v1h-1zm10 0h1v1h-1zm10 0h1v1h-1zm10 0h1v1h-1zm11 0h1v1h-1zm10 0h1v1h-1zm10 0h1v1h-1zm10 0h1v1h-1zm11 0h1v1h-1zm10 0h1v1h-1zm10 0h1v1h-1zm10 0h1v1h-1zm11 0h1v1h-1zm10 0h1v1h-1zm10 0h1v1h-1zm10 0h1v1h-1zm11 0h1v1h-1zm10 0h1v1h-1zm10 0h1v1h-1zm10 0h1v1h-1zm11 0h1v1h-1zm10 0h1v1h-1zm10 0h1v1h-1zm10 0h1v1h-1zm11 0h1v1h-1zm10 0h1v1h-1zm10 0h1v1h-1zm10 0h1v1h-1zm11 0h1v1h-1zm10 0h1v1h-1zm10 0h1v1h-1zm10 0h1v1h-1zm11 0h1v1h-1zm10 0h1v1h-1zm10 0h1v1h-1zm10 0h1v1h-1zm11 0h1v1h-1zm10 0h1v1h-1zm10 0h1v1h-1zM95 496h1v1h-1zm10 0h1v1h-1zm10 0h1v1h-1zm11 0h1v1h-1zm10 0h1v1h-1zm10 0h1v1h-1zm10 0h1v1h-1zm11 0h1v1h-1zm10 0h1v1h-1zm10 0h1v1h-1zm10 0h1v1h-1zm11 0h1v1h-1zm10 0h1v1h-1zm10 0h1v1h-1zm10 0h1v1h-1zm11 0h1v1h-1zm10 0h1v1h-1zm10 0h1v1h-1zm10 0h1v1h-1zm11 0h1v1h-1zm10 0h1v1h-1zm10 0h1v1h-1zm10 0h1v1h-1zm11 0h1v1h-1zm10 0h1v1h-1zm10 0h1v1h-1zm10 0h1v1h-1zm11 0h1v1h-1zm10 0h1v1h-1zm10 0h1v1h-1zm10 0h1v1h-1zm11 0h1v1h-1zm10 0h1v1h-1zm10 0h1v1h-1zm10 0h1v1h-1zm11 0h1v1h-1zm10 0h1v1h-1zm10 0h1v1h-1zm10 0h1v1h-1zm11 0h1v1h-1zm10 0h1v1h-1zm10 0h1v1h-1zm10 0h1v1h-1zm11 0h1v1h-1zm10 0h1v1h-1zm10 0h1v1h-1zm10 0h1v1h-1zm11 0h1v1h-1zm10 0h1v1h-1zm10 0h1v1h-1zm10 0h1v1h-1zm11 0h1v1h-1zm10 0h1v1h-1zm10 0h1v1h-1zm10 0h1v1h-1zm11 0h1v1h-1zm10 0h1v1h-1zm10 0h1v1h-1zm10 0h1v1h-1zm11 0h1v1h-1zm10 0h1v1h-1zm10 0h1v1h-1zm10 0h1v1h-1zm11 0h1v1h-1zm10 0h1v1h-1zm10 0h1v1h-1zm10 0h1v1h-1zm11 0h1v1h-1zm10 0h1v1h-1zm10 0h1v1h-1zm10 0h1v1h-1zm11 0h1v1h-1zm10 0h1v1h-1zm10 0h1v1h-1zm10 0h1v1h-1zm11 0h1v1h-1zm10 0h1v1h-1zm10 0h1v1h-1zm10 0h1v1h-1zm11 0h1v1h-1zm10 0h1v1h-1zm10 0h1v1h-1zm10 0h1v1h-1zm11 0h1v1h-1zm10 0h1v1h-1zm10 0h1v1h-1zm10 0h1v1h-1zm11 0h1v1h-1zm10 0h1v1h-1zm10 0h1v1h-1zm10 0h1v1h-1zm11 0h1v1h-1zm10 0h1v1h-1zm10 0h1v1h-1zm10 0h1v1h-1zm11 0h1v1h-1zm10 0h1v1h-1zm10 0h1v1h-1zm10 0h1v1h-1zm11 0h1v1h-1zm10 0h1v1h-1zm10 0h1v1h-1zM95 486h1v1h-1zm10 0h1v1h-1zm10 0h1v1h-1zm11 0h1v1h-1zm10 0h1v1h-1zm10 0h1v1h-1zm10 0h1v1h-1zm11 0h1v1h-1zm10 0h1v1h-1zm10 0h1v1h-1zm10 0h1v1h-1zm11 0h1v1h-1zm10 0h1v1h-1zm10 0h1v1h-1zm10 0h1v1h-1zm11 0h1v1h-1zm10 0h1v1h-1zm10 0h1v1h-1zm10 0h1v1h-1zm11 0h1v1h-1zm10 0h1v1h-1zm10 0h1v1h-1zm10 0h1v1h-1zm11 0h1v1h-1zm10 0h1v1h-1zm10 0h1v1h-1zm10 0h1v1h-1zm11 0h1v1h-1zm10 0h1v1h-1zm10 0h1v1h-1zm10 0h1v1h-1zm11 0h1v1h-1zm10 0h1v1h-1zm10 0h1v1h-1zm10 0h1v1h-1zm11 0h1v1h-1zm10 0h1v1h-1zm10 0h1v1h-1zm10 0h1v1h-1zm11 0h1v1h-1zm10 0h1v1h-1zm10 0h1v1h-1zm10 0h1v1h-1zm11 0h1v1h-1zm10 0h1v1h-1zm10 0h1v1h-1zm10 0h1v1h-1zm11 0h1v1h-1zm10 0h1v1h-1zm10 0h1v1h-1zm10 0h1v1h-1zm11 0h1v1h-1zm10 0h1v1h-1zm10 0h1v1h-1zm10 0h1v1h-1zm11 0h1v1h-1zm10 0h1v1h-1zm10 0h1v1h-1zm10 0h1v1h-1zm11 0h1v1h-1zm10 0h1v1h-1zm10 0h1v1h-1zm10 0h1v1h-1zm11 0h1v1h-1zm10 0h1v1h-1zm10 0h1v1h-1zm10 0h1v1h-1zm11 0h1v1h-1zm10 0h1v1h-1zm10 0h1v1h-1zm10 0h1v1h-1zm11 0h1v1h-1zm10 0h1v1h-1zm10 0h1v1h-1zm10 0h1v1h-1zm11 0h1v1h-1zm10 0h1v1h-1zm10 0h1v1h-1zm10 0h1v1h-1zm11 0h1v1h-1zm10 0h1v1h-1zm10 0h1v1h-1zm10 0h1v1h-1zm11 0h1v1h-1zm10 0h1v1h-1zm10 0h1v1h-1zm10 0h1v1h-1zm11 0h1v1h-1zm10 0h1v1h-1zm10 0h1v1h-1zm10 0h1v1h-1zm11 0h1v1h-1zm10 0h1v1h-1zm10 0h1v1h-1zm10 0h1v1h-1zm11 0h1v1h-1zm10 0h1v1h-1zm10 0h1v1h-1zm10 0h1v1h-1zm11 0h1v1h-1zm10 0h1v1h-1zm10 0h1v1h-1zM95 476h1v1h-1zm10 0h1v1h-1zm10 0h1v1h-1zm11 0h1v1h-1zm10 0h1v1h-1zm10 0h1v1h-1zm10 0h1v1h-1zm11 0h1v1h-1zm10 0h1v1h-1zm10 0h1v1h-1zm10 0h1v1h-1zm11 0h1v1h-1zm10 0h1v1h-1zm10 0h1v1h-1zm10 0h1v1h-1zm11 0h1v1h-1zm10 0h1v1h-1zm10 0h1v1h-1zm10 0h1v1h-1zm11 0h1v1h-1zm10 0h1v1h-1zm10 0h1v1h-1zm10 0h1v1h-1zm11 0h1v1h-1zm10 0h1v1h-1zm10 0h1v1h-1zm10 0h1v1h-1zm11 0h1v1h-1zm10 0h1v1h-1zm10 0h1v1h-1zm10 0h1v1h-1zm11 0h1v1h-1zm10 0h1v1h-1zm10 0h1v1h-1zm10 0h1v1h-1zm11 0h1v1h-1zm10 0h1v1h-1zm10 0h1v1h-1zm10 0h1v1h-1zm11 0h1v1h-1zm10 0h1v1h-1zm10 0h1v1h-1zm10 0h1v1h-1zm11 0h1v1h-1zm10 0h1v1h-1zm10 0h1v1h-1zm10 0h1v1h-1zm11 0h1v1h-1zm10 0h1v1h-1zm10 0h1v1h-1zm10 0h1v1h-1zm11 0h1v1h-1zm10 0h1v1h-1zm10 0h1v1h-1zm10 0h1v1h-1zm11 0h1v1h-1zm10 0h1v1h-1zm10 0h1v1h-1zm10 0h1v1h-1zm11 0h1v1h-1zm10 0h1v1h-1zm10 0h1v1h-1zm10 0h1v1h-1zm11 0h1v1h-1zm10 0h1v1h-1zm10 0h1v1h-1zm10 0h1v1h-1zm11 0h1v1h-1zm10 0h1v1h-1zm10 0h1v1h-1zm10 0h1v1h-1zm11 0h1v1h-1zm10 0h1v1h-1zm10 0h1v1h-1zm10 0h1v1h-1zm11 0h1v1h-1zm10 0h1v1h-1zm10 0h1v1h-1zm10 0h1v1h-1zm11 0h1v1h-1zm10 0h1v1h-1zm10 0h1v1h-1zm10 0h1v1h-1zm11 0h1v1h-1zm10 0h1v1h-1zm10 0h1v1h-1zm10 0h1v1h-1zm11 0h1v1h-1zm10 0h1v1h-1zm10 0h1v1h-1zm10 0h1v1h-1zm11 0h1v1h-1zm10 0h1v1h-1zm10 0h1v1h-1zm10 0h1v1h-1zm11 0h1v1h-1zm10 0h1v1h-1zm10 0h1v1h-1zm10 0h1v1h-1zm11 0h1v1h-1zm10 0h1v1h-1zm10 0h1v1h-1zM95 465h1v1h-1zm10 0h1v1h-1zm10 0h1v1h-1zm11 0h1v1h-1zm10 0h1v1h-1zm10 0h1v1h-1zm10 0h1v1h-1zm11 0h1v1h-1zm10 0h1v1h-1zm10 0h1v1h-1zm10 0h1v1h-1zm11 0h1v1h-1zm10 0h1v1h-1zm10 0h1v1h-1zm10 0h1v1h-1zm11 0h1v1h-1zm10 0h1v1h-1zm10 0h1v1h-1zm10 0h1v1h-1zm11 0h1v1h-1zm10 0h1v1h-1zm10 0h1v1h-1zm10 0h1v1h-1zm11 0h1v1h-1zm10 0h1v1h-1zm10 0h1v1h-1zm10 0h1v1h-1zm11 0h1v1h-1zm10 0h1v1h-1zm10 0h1v1h-1zm10 0h1v1h-1zm11 0h1v1h-1zm10 0h1v1h-1zm10 0h1v1h-1zm10 0h1v1h-1zm11 0h1v1h-1zm10 0h1v1h-1zm10 0h1v1h-1zm10 0h1v1h-1zm11 0h1v1h-1zm10 0h1v1h-1zm10 0h1v1h-1zm10 0h1v1h-1zm11 0h1v1h-1zm10 0h1v1h-1zm10 0h1v1h-1zm10 0h1v1h-1zm11 0h1v1h-1zm10 0h1v1h-1zm10 0h1v1h-1zm10 0h1v1h-1zm11 0h1v1h-1zm10 0h1v1h-1zm10 0h1v1h-1zm10 0h1v1h-1zm11 0h1v1h-1zm10 0h1v1h-1zm10 0h1v1h-1zm10 0h1v1h-1zm11 0h1v1h-1zm10 0h1v1h-1zm10 0h1v1h-1zm10 0h1v1h-1zm11 0h1v1h-1zm10 0h1v1h-1zm10 0h1v1h-1zm10 0h1v1h-1zm11 0h1v1h-1zm10 0h1v1h-1zm10 0h1v1h-1zm10 0h1v1h-1zm11 0h1v1h-1zm10 0h1v1h-1zm10 0h1v1h-1zm10 0h1v1h-1zm11 0h1v1h-1zm10 0h1v1h-1zm10 0h1v1h-1zm10 0h1v1h-1zm11 0h1v1h-1zm10 0h1v1h-1zm10 0h1v1h-1zm10 0h1v1h-1zm11 0h1v1h-1zm10 0h1v1h-1zm10 0h1v1h-1zm10 0h1v1h-1zm11 0h1v1h-1zm10 0h1v1h-1zm10 0h1v1h-1zm10 0h1v1h-1zm11 0h1v1h-1zm10 0h1v1h-1zm10 0h1v1h-1zm10 0h1v1h-1zm11 0h1v1h-1zm10 0h1v1h-1zm10 0h1v1h-1zm10 0h1v1h-1zm11 0h1v1h-1zm10 0h1v1h-1zm10 0h1v1h-1zM95 455h1v1h-1zm10 0h1v1h-1zm10 0h1v1h-1zm11 0h1v1h-1zm10 0h1v1h-1zm10 0h1v1h-1zm10 0h1v1h-1zm11 0h1v1h-1zm10 0h1v1h-1zm10 0h1v1h-1zm10 0h1v1h-1zm11 0h1v1h-1zm10 0h1v1h-1zm10 0h1v1h-1zm10 0h1v1h-1zm11 0h1v1h-1zm10 0h1v1h-1zm10 0h1v1h-1zm10 0h1v1h-1zm11 0h1v1h-1zm10 0h1v1h-1zm10 0h1v1h-1zm10 0h1v1h-1zm11 0h1v1h-1zm10 0h1v1h-1zm10 0h1v1h-1zm10 0h1v1h-1zm11 0h1v1h-1zm10 0h1v1h-1zm10 0h1v1h-1zm10 0h1v1h-1zm11 0h1v1h-1zm10 0h1v1h-1zm10 0h1v1h-1zm10 0h1v1h-1zm11 0h1v1h-1zm10 0h1v1h-1zm10 0h1v1h-1zm10 0h1v1h-1zm11 0h1v1h-1zm10 0h1v1h-1zm10 0h1v1h-1zm10 0h1v1h-1zm11 0h1v1h-1zm10 0h1v1h-1zm10 0h1v1h-1zm10 0h1v1h-1zm11 0h1v1h-1zm10 0h1v1h-1zm10 0h1v1h-1zm10 0h1v1h-1zm11 0h1v1h-1zm10 0h1v1h-1zm10 0h1v1h-1zm10 0h1v1h-1zm11 0h1v1h-1zm10 0h1v1h-1zm10 0h1v1h-1zm10 0h1v1h-1zm11 0h1v1h-1zm10 0h1v1h-1zm10 0h1v1h-1zm10 0h1v1h-1zm11 0h1v1h-1zm10 0h1v1h-1zm10 0h1v1h-1zm10 0h1v1h-1zm11 0h1v1h-1zm10 0h1v1h-1zm10 0h1v1h-1zm10 0h1v1h-1zm11 0h1v1h-1zm10 0h1v1h-1zm10 0h1v1h-1zm10 0h1v1h-1zm11 0h1v1h-1zm10 0h1v1h-1zm10 0h1v1h-1zm10 0h1v1h-1zm11 0h1v1h-1zm10 0h1v1h-1zm10 0h1v1h-1zm10 0h1v1h-1zm11 0h1v1h-1zm10 0h1v1h-1zm10 0h1v1h-1zm10 0h1v1h-1zm11 0h1v1h-1zm10 0h1v1h-1zm10 0h1v1h-1zm10 0h1v1h-1zm11 0h1v1h-1zm10 0h1v1h-1zm10 0h1v1h-1zm10 0h1v1h-1zm11 0h1v1h-1zm10 0h1v1h-1zm10 0h1v1h-1zm10 0h1v1h-1zm11 0h1v1h-1zm10 0h1v1h-1zm10 0h1v1h-1zM95 445h1v1h-1zm10 0h1v1h-1zm10 0h1v1h-1zm11 0h1v1h-1zm10 0h1v1h-1zm10 0h1v1h-1zm10 0h1v1h-1zm11 0h1v1h-1zm10 0h1v1h-1zm10 0h1v1h-1zm10 0h1v1h-1zm11 0h1v1h-1zm10 0h1v1h-1zm10 0h1v1h-1zm10 0h1v1h-1zm11 0h1v1h-1zm10 0h1v1h-1zm10 0h1v1h-1zm10 0h1v1h-1zm11 0h1v1h-1zm10 0h1v1h-1zm10 0h1v1h-1zm10 0h1v1h-1zm11 0h1v1h-1zm10 0h1v1h-1zm10 0h1v1h-1zm10 0h1v1h-1zm11 0h1v1h-1zm10 0h1v1h-1zm10 0h1v1h-1zm10 0h1v1h-1zm11 0h1v1h-1zm10 0h1v1h-1zm10 0h1v1h-1zm10 0h1v1h-1zm11 0h1v1h-1zm10 0h1v1h-1zm10 0h1v1h-1zm10 0h1v1h-1zm11 0h1v1h-1zm10 0h1v1h-1zm10 0h1v1h-1zm10 0h1v1h-1zm11 0h1v1h-1zm10 0h1v1h-1zm10 0h1v1h-1zm10 0h1v1h-1zm11 0h1v1h-1zm10 0h1v1h-1zm10 0h1v1h-1zm10 0h1v1h-1zm11 0h1v1h-1zm10 0h1v1h-1zm10 0h1v1h-1zm10 0h1v1h-1zm11 0h1v1h-1zm10 0h1v1h-1zm10 0h1v1h-1zm10 0h1v1h-1zm11 0h1v1h-1zm10 0h1v1h-1zm10 0h1v1h-1zm10 0h1v1h-1zm11 0h1v1h-1zm10 0h1v1h-1zm10 0h1v1h-1zm10 0h1v1h-1zm11 0h1v1h-1zm10 0h1v1h-1zm10 0h1v1h-1zm10 0h1v1h-1zm11 0h1v1h-1zm10 0h1v1h-1zm10 0h1v1h-1zm10 0h1v1h-1zm11 0h1v1h-1zm10 0h1v1h-1zm10 0h1v1h-1zm10 0h1v1h-1zm11 0h1v1h-1zm10 0h1v1h-1zm10 0h1v1h-1zm10 0h1v1h-1zm11 0h1v1h-1zm10 0h1v1h-1zm10 0h1v1h-1zm10 0h1v1h-1zm11 0h1v1h-1zm10 0h1v1h-1zm10 0h1v1h-1zm10 0h1v1h-1zm11 0h1v1h-1zm10 0h1v1h-1zm10 0h1v1h-1zm10 0h1v1h-1zm11 0h1v1h-1zm10 0h1v1h-1zm10 0h1v1h-1zm10 0h1v1h-1zm11 0h1v1h-1zm10 0h1v1h-1zm10 0h1v1h-1zM95 435h1v1h-1zm10 0h1v1h-1zm10 0h1v1h-1zm11 0h1v1h-1zm10 0h1v1h-1zm10 0h1v1h-1zm10 0h1v1h-1zm11 0h1v1h-1zm10 0h1v1h-1zm10 0h1v1h-1zm10 0h1v1h-1zm11 0h1v1h-1zm10 0h1v1h-1zm10 0h1v1h-1zm10 0h1v1h-1zm11 0h1v1h-1zm10 0h1v1h-1zm10 0h1v1h-1zm10 0h1v1h-1zm11 0h1v1h-1zm10 0h1v1h-1zm10 0h1v1h-1zm10 0h1v1h-1zm11 0h1v1h-1zm10 0h1v1h-1zm10 0h1v1h-1zm10 0h1v1h-1zm11 0h1v1h-1zm10 0h1v1h-1zm10 0h1v1h-1zm10 0h1v1h-1zm11 0h1v1h-1zm10 0h1v1h-1zm10 0h1v1h-1zm10 0h1v1h-1zm11 0h1v1h-1zm10 0h1v1h-1zm10 0h1v1h-1zm10 0h1v1h-1zm11 0h1v1h-1zm10 0h1v1h-1zm10 0h1v1h-1zm10 0h1v1h-1zm11 0h1v1h-1zm10 0h1v1h-1zm10 0h1v1h-1zm10 0h1v1h-1zm11 0h1v1h-1zm10 0h1v1h-1zm10 0h1v1h-1zm10 0h1v1h-1zm11 0h1v1h-1zm10 0h1v1h-1zm10 0h1v1h-1zm10 0h1v1h-1zm11 0h1v1h-1zm10 0h1v1h-1zm10 0h1v1h-1zm10 0h1v1h-1zm11 0h1v1h-1zm10 0h1v1h-1zm10 0h1v1h-1zm10 0h1v1h-1zm11 0h1v1h-1zm10 0h1v1h-1zm10 0h1v1h-1zm10 0h1v1h-1zm11 0h1v1h-1zm10 0h1v1h-1zm10 0h1v1h-1zm10 0h1v1h-1zm11 0h1v1h-1zm10 0h1v1h-1zm10 0h1v1h-1zm10 0h1v1h-1zm11 0h1v1h-1zm10 0h1v1h-1zm10 0h1v1h-1zm10 0h1v1h-1zm11 0h1v1h-1zm10 0h1v1h-1zm10 0h1v1h-1zm10 0h1v1h-1zm11 0h1v1h-1zm10 0h1v1h-1zm10 0h1v1h-1zm10 0h1v1h-1zm11 0h1v1h-1zm10 0h1v1h-1zm10 0h1v1h-1zm10 0h1v1h-1zm11 0h1v1h-1zm10 0h1v1h-1zm10 0h1v1h-1zm10 0h1v1h-1zm11 0h1v1h-1zm10 0h1v1h-1zm10 0h1v1h-1zm10 0h1v1h-1zm11 0h1v1h-1zm10 0h1v1h-1zm10 0h1v1h-1zM95 424h1v1h-1zm10 0h1v1h-1zm10 0h1v1h-1zm11 0h1v1h-1zm10 0h1v1h-1zm10 0h1v1h-1zm10 0h1v1h-1zm11 0h1v1h-1zm10 0h1v1h-1zm10 0h1v1h-1zm10 0h1v1h-1zm11 0h1v1h-1zm10 0h1v1h-1zm10 0h1v1h-1zm10 0h1v1h-1zm11 0h1v1h-1zm10 0h1v1h-1zm10 0h1v1h-1zm10 0h1v1h-1zm11 0h1v1h-1zm10 0h1v1h-1zm10 0h1v1h-1zm10 0h1v1h-1zm11 0h1v1h-1zm10 0h1v1h-1zm10 0h1v1h-1zm10 0h1v1h-1zm11 0h1v1h-1zm10 0h1v1h-1zm10 0h1v1h-1zm10 0h1v1h-1zm11 0h1v1h-1zm10 0h1v1h-1zm10 0h1v1h-1zm10 0h1v1h-1zm11 0h1v1h-1zm10 0h1v1h-1zm10 0h1v1h-1zm10 0h1v1h-1zm11 0h1v1h-1zm10 0h1v1h-1zm10 0h1v1h-1zm10 0h1v1h-1zm11 0h1v1h-1zm10 0h1v1h-1zm10 0h1v1h-1zm10 0h1v1h-1zm11 0h1v1h-1zm10 0h1v1h-1zm10 0h1v1h-1zm10 0h1v1h-1zm11 0h1v1h-1zm10 0h1v1h-1zm10 0h1v1h-1zm10 0h1v1h-1zm11 0h1v1h-1zm10 0h1v1h-1zm10 0h1v1h-1zm10 0h1v1h-1zm11 0h1v1h-1zm10 0h1v1h-1zm10 0h1v1h-1zm10 0h1v1h-1zm11 0h1v1h-1zm10 0h1v1h-1zm10 0h1v1h-1zm10 0h1v1h-1zm11 0h1v1h-1zm10 0h1v1h-1zm10 0h1v1h-1zm10 0h1v1h-1zm11 0h1v1h-1zm10 0h1v1h-1zm10 0h1v1h-1zm10 0h1v1h-1zm11 0h1v1h-1zm10 0h1v1h-1zm10 0h1v1h-1zm10 0h1v1h-1zm11 0h1v1h-1zm10 0h1v1h-1zm10 0h1v1h-1zm10 0h1v1h-1zm11 0h1v1h-1zm10 0h1v1h-1zm10 0h1v1h-1zm10 0h1v1h-1zm11 0h1v1h-1zm10 0h1v1h-1zm10 0h1v1h-1zm10 0h1v1h-1zm11 0h1v1h-1zm10 0h1v1h-1zm10 0h1v1h-1zm10 0h1v1h-1zm11 0h1v1h-1zm10 0h1v1h-1zm10 0h1v1h-1zm10 0h1v1h-1zm11 0h1v1h-1zm10 0h1v1h-1zm10 0h1v1h-1zM95 414h1v1h-1zm10 0h1v1h-1zm10 0h1v1h-1zm11 0h1v1h-1zm10 0h1v1h-1zm10 0h1v1h-1zm10 0h1v1h-1zm11 0h1v1h-1zm10 0h1v1h-1zm10 0h1v1h-1zm10 0h1v1h-1zm11 0h1v1h-1zm10 0h1v1h-1zm10 0h1v1h-1zm10 0h1v1h-1zm11 0h1v1h-1zm10 0h1v1h-1zm10 0h1v1h-1zm10 0h1v1h-1zm11 0h1v1h-1zm10 0h1v1h-1zm10 0h1v1h-1zm10 0h1v1h-1zm11 0h1v1h-1zm10 0h1v1h-1zm10 0h1v1h-1zm10 0h1v1h-1zm11 0h1v1h-1zm10 0h1v1h-1zm10 0h1v1h-1zm10 0h1v1h-1zm11 0h1v1h-1zm10 0h1v1h-1zm10 0h1v1h-1zm10 0h1v1h-1zm11 0h1v1h-1zm10 0h1v1h-1zm10 0h1v1h-1zm10 0h1v1h-1zm11 0h1v1h-1zm10 0h1v1h-1zm10 0h1v1h-1zm10 0h1v1h-1zm11 0h1v1h-1zm10 0h1v1h-1zm10 0h1v1h-1zm10 0h1v1h-1zm11 0h1v1h-1zm10 0h1v1h-1zm10 0h1v1h-1zm10 0h1v1h-1zm11 0h1v1h-1zm10 0h1v1h-1zm10 0h1v1h-1zm10 0h1v1h-1zm11 0h1v1h-1zm10 0h1v1h-1zm10 0h1v1h-1zm10 0h1v1h-1zm11 0h1v1h-1zm10 0h1v1h-1zm10 0h1v1h-1zm10 0h1v1h-1zm11 0h1v1h-1zm10 0h1v1h-1zm10 0h1v1h-1zm10 0h1v1h-1zm11 0h1v1h-1zm10 0h1v1h-1zm10 0h1v1h-1zm10 0h1v1h-1zm11 0h1v1h-1zm10 0h1v1h-1zm10 0h1v1h-1zm10 0h1v1h-1zm11 0h1v1h-1zm10 0h1v1h-1zm10 0h1v1h-1zm10 0h1v1h-1zm11 0h1v1h-1zm10 0h1v1h-1zm10 0h1v1h-1zm10 0h1v1h-1zm11 0h1v1h-1zm10 0h1v1h-1zm10 0h1v1h-1zm10 0h1v1h-1zm11 0h1v1h-1zm10 0h1v1h-1zm10 0h1v1h-1zm10 0h1v1h-1zm11 0h1v1h-1zm10 0h1v1h-1zm10 0h1v1h-1zm10 0h1v1h-1zm11 0h1v1h-1zm10 0h1v1h-1zm10 0h1v1h-1zm10 0h1v1h-1zm11 0h1v1h-1zm10 0h1v1h-1zm10 0h1v1h-1zM95 404h1v1h-1zm10 0h1v1h-1zm10 0h1v1h-1zm11 0h1v1h-1zm10 0h1v1h-1zm10 0h1v1h-1zm10 0h1v1h-1zm11 0h1v1h-1zm10 0h1v1h-1zm10 0h1v1h-1zm10 0h1v1h-1zm11 0h1v1h-1zm10 0h1v1h-1zm10 0h1v1h-1zm10 0h1v1h-1zm11 0h1v1h-1zm10 0h1v1h-1zm10 0h1v1h-1zm10 0h1v1h-1zm11 0h1v1h-1zm10 0h1v1h-1zm10 0h1v1h-1zm10 0h1v1h-1zm11 0h1v1h-1zm10 0h1v1h-1zm10 0h1v1h-1zm10 0h1v1h-1zm11 0h1v1h-1zm10 0h1v1h-1zm10 0h1v1h-1zm10 0h1v1h-1zm11 0h1v1h-1zm10 0h1v1h-1zm10 0h1v1h-1zm10 0h1v1h-1zm11 0h1v1h-1zm10 0h1v1h-1zm10 0h1v1h-1zm10 0h1v1h-1zm11 0h1v1h-1zm10 0h1v1h-1zm10 0h1v1h-1zm10 0h1v1h-1zm11 0h1v1h-1zm10 0h1v1h-1zm10 0h1v1h-1zm10 0h1v1h-1zm11 0h1v1h-1zm10 0h1v1h-1zm10 0h1v1h-1zm10 0h1v1h-1zm11 0h1v1h-1zm10 0h1v1h-1zm10 0h1v1h-1zm10 0h1v1h-1zm11 0h1v1h-1zm10 0h1v1h-1zm10 0h1v1h-1zm10 0h1v1h-1zm11 0h1v1h-1zm10 0h1v1h-1zm10 0h1v1h-1zm10 0h1v1h-1zm11 0h1v1h-1zm10 0h1v1h-1zm10 0h1v1h-1zm10 0h1v1h-1zm11 0h1v1h-1zm10 0h1v1h-1zm10 0h1v1h-1zm10 0h1v1h-1zm11 0h1v1h-1zm10 0h1v1h-1zm10 0h1v1h-1zm10 0h1v1h-1zm11 0h1v1h-1zm10 0h1v1h-1zm10 0h1v1h-1zm10 0h1v1h-1zm11 0h1v1h-1zm10 0h1v1h-1zm10 0h1v1h-1zm10 0h1v1h-1zm11 0h1v1h-1zm10 0h1v1h-1zm10 0h1v1h-1zm10 0h1v1h-1zm11 0h1v1h-1zm10 0h1v1h-1zm10 0h1v1h-1zm10 0h1v1h-1zm11 0h1v1h-1zm10 0h1v1h-1zm10 0h1v1h-1zm10 0h1v1h-1zm11 0h1v1h-1zm10 0h1v1h-1zm10 0h1v1h-1zm10 0h1v1h-1zm11 0h1v1h-1zm10 0h1v1h-1zm10 0h1v1h-1zM95 394h1v1h-1zm10 0h1v1h-1zm10 0h1v1h-1zm11 0h1v1h-1zm10 0h1v1h-1zm10 0h1v1h-1zm10 0h1v1h-1zm11 0h1v1h-1zm10 0h1v1h-1zm10 0h1v1h-1zm10 0h1v1h-1zm11 0h1v1h-1zm10 0h1v1h-1zm10 0h1v1h-1zm10 0h1v1h-1zm11 0h1v1h-1zm10 0h1v1h-1zm10 0h1v1h-1zm10 0h1v1h-1zm11 0h1v1h-1zm10 0h1v1h-1zm10 0h1v1h-1zm10 0h1v1h-1zm11 0h1v1h-1zm10 0h1v1h-1zm10 0h1v1h-1zm10 0h1v1h-1zm11 0h1v1h-1zm10 0h1v1h-1zm10 0h1v1h-1zm10 0h1v1h-1zm11 0h1v1h-1zm10 0h1v1h-1zm10 0h1v1h-1zm10 0h1v1h-1zm11 0h1v1h-1zm10 0h1v1h-1zm10 0h1v1h-1zm10 0h1v1h-1zm11 0h1v1h-1zm10 0h1v1h-1zm10 0h1v1h-1zm10 0h1v1h-1zm11 0h1v1h-1zm10 0h1v1h-1zm10 0h1v1h-1zm10 0h1v1h-1zm11 0h1v1h-1zm10 0h1v1h-1zm10 0h1v1h-1zm10 0h1v1h-1zm11 0h1v1h-1zm10 0h1v1h-1zm10 0h1v1h-1zm10 0h1v1h-1zm11 0h1v1h-1zm10 0h1v1h-1zm10 0h1v1h-1zm10 0h1v1h-1zm11 0h1v1h-1zm10 0h1v1h-1zm10 0h1v1h-1zm10 0h1v1h-1zm11 0h1v1h-1zm10 0h1v1h-1zm10 0h1v1h-1zm10 0h1v1h-1zm11 0h1v1h-1zm10 0h1v1h-1zm10 0h1v1h-1zm10 0h1v1h-1zm11 0h1v1h-1zm10 0h1v1h-1zm10 0h1v1h-1zm10 0h1v1h-1zm11 0h1v1h-1zm10 0h1v1h-1zm10 0h1v1h-1zm10 0h1v1h-1zm11 0h1v1h-1zm10 0h1v1h-1zm10 0h1v1h-1zm10 0h1v1h-1zm11 0h1v1h-1zm10 0h1v1h-1zm10 0h1v1h-1zm10 0h1v1h-1zm11 0h1v1h-1zm10 0h1v1h-1zm10 0h1v1h-1zm10 0h1v1h-1zm11 0h1v1h-1zm10 0h1v1h-1zm10 0h1v1h-1zm10 0h1v1h-1zm11 0h1v1h-1zm10 0h1v1h-1zm10 0h1v1h-1zm10 0h1v1h-1zm11 0h1v1h-1zm10 0h1v1h-1zm10 0h1v1h-1zM95 383h1v1h-1zm10 0h1v1h-1zm10 0h1v1h-1zm11 0h1v1h-1zm10 0h1v1h-1zm10 0h1v1h-1zm10 0h1v1h-1zm11 0h1v1h-1zm10 0h1v1h-1zm10 0h1v1h-1zm10 0h1v1h-1zm11 0h1v1h-1zm10 0h1v1h-1zm10 0h1v1h-1zm10 0h1v1h-1zm11 0h1v1h-1zm10 0h1v1h-1zm10 0h1v1h-1zm10 0h1v1h-1zm11 0h1v1h-1zm10 0h1v1h-1zm10 0h1v1h-1zm10 0h1v1h-1zm11 0h1v1h-1zm10 0h1v1h-1zm10 0h1v1h-1zm10 0h1v1h-1zm11 0h1v1h-1zm10 0h1v1h-1zm10 0h1v1h-1zm10 0h1v1h-1zm11 0h1v1h-1zm10 0h1v1h-1zm10 0h1v1h-1zm10 0h1v1h-1zm11 0h1v1h-1zm10 0h1v1h-1zm10 0h1v1h-1zm10 0h1v1h-1zm11 0h1v1h-1zm10 0h1v1h-1zm10 0h1v1h-1zm10 0h1v1h-1zm11 0h1v1h-1zm10 0h1v1h-1zm10 0h1v1h-1zm10 0h1v1h-1zm11 0h1v1h-1zm10 0h1v1h-1zm10 0h1v1h-1zm10 0h1v1h-1zm11 0h1v1h-1zm10 0h1v1h-1zm10 0h1v1h-1zm10 0h1v1h-1zm11 0h1v1h-1zm10 0h1v1h-1zm10 0h1v1h-1zm10 0h1v1h-1zm11 0h1v1h-1zm10 0h1v1h-1zm10 0h1v1h-1zm10 0h1v1h-1zm11 0h1v1h-1zm10 0h1v1h-1zm10 0h1v1h-1zm10 0h1v1h-1zm11 0h1v1h-1zm10 0h1v1h-1zm10 0h1v1h-1zm10 0h1v1h-1zm11 0h1v1h-1zm10 0h1v1h-1zm10 0h1v1h-1zm10 0h1v1h-1zm11 0h1v1h-1zm10 0h1v1h-1zm10 0h1v1h-1zm10 0h1v1h-1zm11 0h1v1h-1zm10 0h1v1h-1zm10 0h1v1h-1zm10 0h1v1h-1zm11 0h1v1h-1zm10 0h1v1h-1zm10 0h1v1h-1zm10 0h1v1h-1zm11 0h1v1h-1zm10 0h1v1h-1zm10 0h1v1h-1zm10 0h1v1h-1zm11 0h1v1h-1zm10 0h1v1h-1zm10 0h1v1h-1zm10 0h1v1h-1zm11 0h1v1h-1zm10 0h1v1h-1zm10 0h1v1h-1zm10 0h1v1h-1zm11 0h1v1h-1zm10 0h1v1h-1zm10 0h1v1h-1zM95 373h1v1h-1zm10 0h1v1h-1zm10 0h1v1h-1zm11 0h1v1h-1zm10 0h1v1h-1zm10 0h1v1h-1zm10 0h1v1h-1zm11 0h1v1h-1zm10 0h1v1h-1zm10 0h1v1h-1zm10 0h1v1h-1zm11 0h1v1h-1zm10 0h1v1h-1zm10 0h1v1h-1zm10 0h1v1h-1zm11 0h1v1h-1zm10 0h1v1h-1zm10 0h1v1h-1zm10 0h1v1h-1zm11 0h1v1h-1zm10 0h1v1h-1zm10 0h1v1h-1zm10 0h1v1h-1zm11 0h1v1h-1zm10 0h1v1h-1zm10 0h1v1h-1zm10 0h1v1h-1zm11 0h1v1h-1zm10 0h1v1h-1zm10 0h1v1h-1zm10 0h1v1h-1zm11 0h1v1h-1zm10 0h1v1h-1zm10 0h1v1h-1zm10 0h1v1h-1zm11 0h1v1h-1zm10 0h1v1h-1zm10 0h1v1h-1zm10 0h1v1h-1zm11 0h1v1h-1zm10 0h1v1h-1zm10 0h1v1h-1zm10 0h1v1h-1zm11 0h1v1h-1zm10 0h1v1h-1zm10 0h1v1h-1zm10 0h1v1h-1zm11 0h1v1h-1zm10 0h1v1h-1zm10 0h1v1h-1zm10 0h1v1h-1zm11 0h1v1h-1zm10 0h1v1h-1zm10 0h1v1h-1zm10 0h1v1h-1zm11 0h1v1h-1zm10 0h1v1h-1zm10 0h1v1h-1zm10 0h1v1h-1zm11 0h1v1h-1zm10 0h1v1h-1zm10 0h1v1h-1zm10 0h1v1h-1zm11 0h1v1h-1zm10 0h1v1h-1zm10 0h1v1h-1zm10 0h1v1h-1zm11 0h1v1h-1zm10 0h1v1h-1zm10 0h1v1h-1zm10 0h1v1h-1zm11 0h1v1h-1zm10 0h1v1h-1zm10 0h1v1h-1zm10 0h1v1h-1zm11 0h1v1h-1zm10 0h1v1h-1zm10 0h1v1h-1zm10 0h1v1h-1zm11 0h1v1h-1zm10 0h1v1h-1zm10 0h1v1h-1zm10 0h1v1h-1zm11 0h1v1h-1zm10 0h1v1h-1zm10 0h1v1h-1zm10 0h1v1h-1zm11 0h1v1h-1zm10 0h1v1h-1zm10 0h1v1h-1zm10 0h1v1h-1zm11 0h1v1h-1zm10 0h1v1h-1zm10 0h1v1h-1zm10 0h1v1h-1zm11 0h1v1h-1zm10 0h1v1h-1zm10 0h1v1h-1zm10 0h1v1h-1zm11 0h1v1h-1zm10 0h1v1h-1zm10 0h1v1h-1zM95 363h1v1h-1zm10 0h1v1h-1zm10 0h1v1h-1zm11 0h1v1h-1zm10 0h1v1h-1zm10 0h1v1h-1zm10 0h1v1h-1zm11 0h1v1h-1zm10 0h1v1h-1zm10 0h1v1h-1zm10 0h1v1h-1zm11 0h1v1h-1zm10 0h1v1h-1zm10 0h1v1h-1zm10 0h1v1h-1zm11 0h1v1h-1zm10 0h1v1h-1zm10 0h1v1h-1zm10 0h1v1h-1zm11 0h1v1h-1zm10 0h1v1h-1zm10 0h1v1h-1zm10 0h1v1h-1zm11 0h1v1h-1zm10 0h1v1h-1zm10 0h1v1h-1zm10 0h1v1h-1zm11 0h1v1h-1zm10 0h1v1h-1zm10 0h1v1h-1zm10 0h1v1h-1zm11 0h1v1h-1zm10 0h1v1h-1zm10 0h1v1h-1zm10 0h1v1h-1zm11 0h1v1h-1zm10 0h1v1h-1zm10 0h1v1h-1zm10 0h1v1h-1zm11 0h1v1h-1zm10 0h1v1h-1zm10 0h1v1h-1zm10 0h1v1h-1zm11 0h1v1h-1zm10 0h1v1h-1zm10 0h1v1h-1zm10 0h1v1h-1zm11 0h1v1h-1zm10 0h1v1h-1zm10 0h1v1h-1zm10 0h1v1h-1zm11 0h1v1h-1zm10 0h1v1h-1zm10 0h1v1h-1zm10 0h1v1h-1zm11 0h1v1h-1zm10 0h1v1h-1zm10 0h1v1h-1zm10 0h1v1h-1zm11 0h1v1h-1zm10 0h1v1h-1zm10 0h1v1h-1zm10 0h1v1h-1zm11 0h1v1h-1zm10 0h1v1h-1zm10 0h1v1h-1zm10 0h1v1h-1zm11 0h1v1h-1zm10 0h1v1h-1zm10 0h1v1h-1zm10 0h1v1h-1zm11 0h1v1h-1zm10 0h1v1h-1zm10 0h1v1h-1zm10 0h1v1h-1zm11 0h1v1h-1zm10 0h1v1h-1zm10 0h1v1h-1zm10 0h1v1h-1zm11 0h1v1h-1zm10 0h1v1h-1zm10 0h1v1h-1zm10 0h1v1h-1zm11 0h1v1h-1zm10 0h1v1h-1zm10 0h1v1h-1zm10 0h1v1h-1zm11 0h1v1h-1zm10 0h1v1h-1zm10 0h1v1h-1zm10 0h1v1h-1zm11 0h1v1h-1zm10 0h1v1h-1zm10 0h1v1h-1zm10 0h1v1h-1zm11 0h1v1h-1zm10 0h1v1h-1zm10 0h1v1h-1zm10 0h1v1h-1zm11 0h1v1h-1zm10 0h1v1h-1zm10 0h1v1h-1zM95 353h1v1h-1zm10 0h1v1h-1zm10 0h1v1h-1zm11 0h1v1h-1zm10 0h1v1h-1zm10 0h1v1h-1zm10 0h1v1h-1zm11 0h1v1h-1zm10 0h1v1h-1zm10 0h1v1h-1zm10 0h1v1h-1zm11 0h1v1h-1zm10 0h1v1h-1zm10 0h1v1h-1zm10 0h1v1h-1zm11 0h1v1h-1zm10 0h1v1h-1zm10 0h1v1h-1zm10 0h1v1h-1zm11 0h1v1h-1zm10 0h1v1h-1zm10 0h1v1h-1zm10 0h1v1h-1zm11 0h1v1h-1zm10 0h1v1h-1zm10 0h1v1h-1zm10 0h1v1h-1zm11 0h1v1h-1zm10 0h1v1h-1zm10 0h1v1h-1zm10 0h1v1h-1zm11 0h1v1h-1zm10 0h1v1h-1zm10 0h1v1h-1zm10 0h1v1h-1zm11 0h1v1h-1zm10 0h1v1h-1zm10 0h1v1h-1zm10 0h1v1h-1zm11 0h1v1h-1zm10 0h1v1h-1zm10 0h1v1h-1zm10 0h1v1h-1zm11 0h1v1h-1zm10 0h1v1h-1zm10 0h1v1h-1zm10 0h1v1h-1zm11 0h1v1h-1zm10 0h1v1h-1zm10 0h1v1h-1zm10 0h1v1h-1zm11 0h1v1h-1zm10 0h1v1h-1zm10 0h1v1h-1zm10 0h1v1h-1zm11 0h1v1h-1zm10 0h1v1h-1zm10 0h1v1h-1zm10 0h1v1h-1zm11 0h1v1h-1zm10 0h1v1h-1zm10 0h1v1h-1zm10 0h1v1h-1zm11 0h1v1h-1zm10 0h1v1h-1zm10 0h1v1h-1zm10 0h1v1h-1zm11 0h1v1h-1zm10 0h1v1h-1zm10 0h1v1h-1zm10 0h1v1h-1zm11 0h1v1h-1zm10 0h1v1h-1zm10 0h1v1h-1zm10 0h1v1h-1zm11 0h1v1h-1zm10 0h1v1h-1zm10 0h1v1h-1zm10 0h1v1h-1zm11 0h1v1h-1zm10 0h1v1h-1zm10 0h1v1h-1zm10 0h1v1h-1zm11 0h1v1h-1zm10 0h1v1h-1zm10 0h1v1h-1zm10 0h1v1h-1zm11 0h1v1h-1zm10 0h1v1h-1zm10 0h1v1h-1zm10 0h1v1h-1zm11 0h1v1h-1zm10 0h1v1h-1zm10 0h1v1h-1zm10 0h1v1h-1zm11 0h1v1h-1zm10 0h1v1h-1zm10 0h1v1h-1zm10 0h1v1h-1zm11 0h1v1h-1zm10 0h1v1h-1zm10 0h1v1h-1zM95 342h1v1h-1zm10 0h1v1h-1zm10 0h1v1h-1zm11 0h1v1h-1zm10 0h1v1h-1zm10 0h1v1h-1zm10 0h1v1h-1zm11 0h1v1h-1zm10 0h1v1h-1zm10 0h1v1h-1zm10 0h1v1h-1zm11 0h1v1h-1zm10 0h1v1h-1zm10 0h1v1h-1zm10 0h1v1h-1zm11 0h1v1h-1zm10 0h1v1h-1zm10 0h1v1h-1zm10 0h1v1h-1zm11 0h1v1h-1zm10 0h1v1h-1zm10 0h1v1h-1zm10 0h1v1h-1zm11 0h1v1h-1zm10 0h1v1h-1zm10 0h1v1h-1zm10 0h1v1h-1zm11 0h1v1h-1zm10 0h1v1h-1zm10 0h1v1h-1zm10 0h1v1h-1zm11 0h1v1h-1zm10 0h1v1h-1zm10 0h1v1h-1zm10 0h1v1h-1zm11 0h1v1h-1zm10 0h1v1h-1zm10 0h1v1h-1zm10 0h1v1h-1zm11 0h1v1h-1zm10 0h1v1h-1zm10 0h1v1h-1zm10 0h1v1h-1zm11 0h1v1h-1zm10 0h1v1h-1zm10 0h1v1h-1zm10 0h1v1h-1zm11 0h1v1h-1zm10 0h1v1h-1zm10 0h1v1h-1zm10 0h1v1h-1zm11 0h1v1h-1zm10 0h1v1h-1zm10 0h1v1h-1zm10 0h1v1h-1zm11 0h1v1h-1zm10 0h1v1h-1zm10 0h1v1h-1zm10 0h1v1h-1zm11 0h1v1h-1zm10 0h1v1h-1zm10 0h1v1h-1zm10 0h1v1h-1zm11 0h1v1h-1zm10 0h1v1h-1zm10 0h1v1h-1zm10 0h1v1h-1zm11 0h1v1h-1zm10 0h1v1h-1zm10 0h1v1h-1zm10 0h1v1h-1zm11 0h1v1h-1zm10 0h1v1h-1zm10 0h1v1h-1zm10 0h1v1h-1zm11 0h1v1h-1zm10 0h1v1h-1zm10 0h1v1h-1zm10 0h1v1h-1zm11 0h1v1h-1zm10 0h1v1h-1zm10 0h1v1h-1zm10 0h1v1h-1zm11 0h1v1h-1zm10 0h1v1h-1zm10 0h1v1h-1zm10 0h1v1h-1zm11 0h1v1h-1zm10 0h1v1h-1zm10 0h1v1h-1zm10 0h1v1h-1zm11 0h1v1h-1zm10 0h1v1h-1zm10 0h1v1h-1zm10 0h1v1h-1zm11 0h1v1h-1zm10 0h1v1h-1zm10 0h1v1h-1zm10 0h1v1h-1zm11 0h1v1h-1zm10 0h1v1h-1zm10 0h1v1h-1zM95 332h1v1h-1zm10 0h1v1h-1zm10 0h1v1h-1zm11 0h1v1h-1zm10 0h1v1h-1zm10 0h1v1h-1zm10 0h1v1h-1zm11 0h1v1h-1zm10 0h1v1h-1zm10 0h1v1h-1zm10 0h1v1h-1zm11 0h1v1h-1zm10 0h1v1h-1zm10 0h1v1h-1zm10 0h1v1h-1zm11 0h1v1h-1zm10 0h1v1h-1zm10 0h1v1h-1zm10 0h1v1h-1zm11 0h1v1h-1zm10 0h1v1h-1zm10 0h1v1h-1zm10 0h1v1h-1zm11 0h1v1h-1zm10 0h1v1h-1zm10 0h1v1h-1zm10 0h1v1h-1zm11 0h1v1h-1zm10 0h1v1h-1zm10 0h1v1h-1zm10 0h1v1h-1zm11 0h1v1h-1zm10 0h1v1h-1zm10 0h1v1h-1zm10 0h1v1h-1zm11 0h1v1h-1zm10 0h1v1h-1zm10 0h1v1h-1zm10 0h1v1h-1zm11 0h1v1h-1zm10 0h1v1h-1zm10 0h1v1h-1zm10 0h1v1h-1zm11 0h1v1h-1zm10 0h1v1h-1zm10 0h1v1h-1zm10 0h1v1h-1zm11 0h1v1h-1zm10 0h1v1h-1zm10 0h1v1h-1zm10 0h1v1h-1zm11 0h1v1h-1zm10 0h1v1h-1zm10 0h1v1h-1zm10 0h1v1h-1zm11 0h1v1h-1zm10 0h1v1h-1zm10 0h1v1h-1zm10 0h1v1h-1zm11 0h1v1h-1zm10 0h1v1h-1zm10 0h1v1h-1zm10 0h1v1h-1zm11 0h1v1h-1zm10 0h1v1h-1zm10 0h1v1h-1zm10 0h1v1h-1zm11 0h1v1h-1zm10 0h1v1h-1zm10 0h1v1h-1zm10 0h1v1h-1zm11 0h1v1h-1zm10 0h1v1h-1zm10 0h1v1h-1zm10 0h1v1h-1zm11 0h1v1h-1zm10 0h1v1h-1zm10 0h1v1h-1zm10 0h1v1h-1zm11 0h1v1h-1zm10 0h1v1h-1zm10 0h1v1h-1zm10 0h1v1h-1zm11 0h1v1h-1zm10 0h1v1h-1zm10 0h1v1h-1zm10 0h1v1h-1zm11 0h1v1h-1zm10 0h1v1h-1zm10 0h1v1h-1zm10 0h1v1h-1zm11 0h1v1h-1zm10 0h1v1h-1zm10 0h1v1h-1zm10 0h1v1h-1zm11 0h1v1h-1zm10 0h1v1h-1zm10 0h1v1h-1zm10 0h1v1h-1zm11 0h1v1h-1zm10 0h1v1h-1zm10 0h1v1h-1zM95 322h1v1h-1zm10 0h1v1h-1zm10 0h1v1h-1zm11 0h1v1h-1zm10 0h1v1h-1zm10 0h1v1h-1zm10 0h1v1h-1zm11 0h1v1h-1zm10 0h1v1h-1zm10 0h1v1h-1zm10 0h1v1h-1zm11 0h1v1h-1zm10 0h1v1h-1zm10 0h1v1h-1zm10 0h1v1h-1zm11 0h1v1h-1zm10 0h1v1h-1zm10 0h1v1h-1zm10 0h1v1h-1zm11 0h1v1h-1zm10 0h1v1h-1zm10 0h1v1h-1zm10 0h1v1h-1zm11 0h1v1h-1zm10 0h1v1h-1zm10 0h1v1h-1zm10 0h1v1h-1zm11 0h1v1h-1zm10 0h1v1h-1zm10 0h1v1h-1zm10 0h1v1h-1zm11 0h1v1h-1zm10 0h1v1h-1zm10 0h1v1h-1zm10 0h1v1h-1zm11 0h1v1h-1zm10 0h1v1h-1zm10 0h1v1h-1zm10 0h1v1h-1zm11 0h1v1h-1zm10 0h1v1h-1zm10 0h1v1h-1zm10 0h1v1h-1zm11 0h1v1h-1zm10 0h1v1h-1zm10 0h1v1h-1zm10 0h1v1h-1zm11 0h1v1h-1zm10 0h1v1h-1zm10 0h1v1h-1zm10 0h1v1h-1zm11 0h1v1h-1zm10 0h1v1h-1zm10 0h1v1h-1zm10 0h1v1h-1zm11 0h1v1h-1zm10 0h1v1h-1zm10 0h1v1h-1zm10 0h1v1h-1zm11 0h1v1h-1zm10 0h1v1h-1zm10 0h1v1h-1zm10 0h1v1h-1zm11 0h1v1h-1zm10 0h1v1h-1zm10 0h1v1h-1zm10 0h1v1h-1zm11 0h1v1h-1zm10 0h1v1h-1zm10 0h1v1h-1zm10 0h1v1h-1zm11 0h1v1h-1zm10 0h1v1h-1zm10 0h1v1h-1zm10 0h1v1h-1zm11 0h1v1h-1zm10 0h1v1h-1zm10 0h1v1h-1zm10 0h1v1h-1zm11 0h1v1h-1zm10 0h1v1h-1zm10 0h1v1h-1zm10 0h1v1h-1zm11 0h1v1h-1zm10 0h1v1h-1zm10 0h1v1h-1zm10 0h1v1h-1zm11 0h1v1h-1zm10 0h1v1h-1zm10 0h1v1h-1zm10 0h1v1h-1zm11 0h1v1h-1zm10 0h1v1h-1zm10 0h1v1h-1zm10 0h1v1h-1zm11 0h1v1h-1zm10 0h1v1h-1zm10 0h1v1h-1zm10 0h1v1h-1zm11 0h1v1h-1zm10 0h1v1h-1zm10 0h1v1h-1zM95 312h1v1h-1zm10 0h1v1h-1zm10 0h1v1h-1zm11 0h1v1h-1zm10 0h1v1h-1zm10 0h1v1h-1zm10 0h1v1h-1zm11 0h1v1h-1zm10 0h1v1h-1zm10 0h1v1h-1zm10 0h1v1h-1zm11 0h1v1h-1zm10 0h1v1h-1zm10 0h1v1h-1zm10 0h1v1h-1zm11 0h1v1h-1zm10 0h1v1h-1zm10 0h1v1h-1zm10 0h1v1h-1zm11 0h1v1h-1zm10 0h1v1h-1zm10 0h1v1h-1zm10 0h1v1h-1zm11 0h1v1h-1zm10 0h1v1h-1zm10 0h1v1h-1zm10 0h1v1h-1zm11 0h1v1h-1zm10 0h1v1h-1zm10 0h1v1h-1zm10 0h1v1h-1zm11 0h1v1h-1zm10 0h1v1h-1zm10 0h1v1h-1zm10 0h1v1h-1zm11 0h1v1h-1zm10 0h1v1h-1zm10 0h1v1h-1zm10 0h1v1h-1zm11 0h1v1h-1zm10 0h1v1h-1zm10 0h1v1h-1zm10 0h1v1h-1zm11 0h1v1h-1zm10 0h1v1h-1zm10 0h1v1h-1zm10 0h1v1h-1zm11 0h1v1h-1zm10 0h1v1h-1zm10 0h1v1h-1zm10 0h1v1h-1zm11 0h1v1h-1zm10 0h1v1h-1zm10 0h1v1h-1zm10 0h1v1h-1zm11 0h1v1h-1zm10 0h1v1h-1zm10 0h1v1h-1zm10 0h1v1h-1zm11 0h1v1h-1zm10 0h1v1h-1zm10 0h1v1h-1zm10 0h1v1h-1zm11 0h1v1h-1zm10 0h1v1h-1zm10 0h1v1h-1zm10 0h1v1h-1zm11 0h1v1h-1zm10 0h1v1h-1zm10 0h1v1h-1zm10 0h1v1h-1zm11 0h1v1h-1zm10 0h1v1h-1zm10 0h1v1h-1zm10 0h1v1h-1zm11 0h1v1h-1zm10 0h1v1h-1zm10 0h1v1h-1zm10 0h1v1h-1zm11 0h1v1h-1zm10 0h1v1h-1zm10 0h1v1h-1zm10 0h1v1h-1zm11 0h1v1h-1zm10 0h1v1h-1zm10 0h1v1h-1zm10 0h1v1h-1zm11 0h1v1h-1zm10 0h1v1h-1zm10 0h1v1h-1zm10 0h1v1h-1zm11 0h1v1h-1zm10 0h1v1h-1zm10 0h1v1h-1zm10 0h1v1h-1zm11 0h1v1h-1zm10 0h1v1h-1zm10 0h1v1h-1zm10 0h1v1h-1zm11 0h1v1h-1zm10 0h1v1h-1zm10 0h1v1h-1zM95 301h1v1h-1zm10 0h1v1h-1zm10 0h1v1h-1zm11 0h1v1h-1zm10 0h1v1h-1zm10 0h1v1h-1zm10 0h1v1h-1zm11 0h1v1h-1zm10 0h1v1h-1zm10 0h1v1h-1zm10 0h1v1h-1zm11 0h1v1h-1zm10 0h1v1h-1zm10 0h1v1h-1zm10 0h1v1h-1zm11 0h1v1h-1zm10 0h1v1h-1zm10 0h1v1h-1zm10 0h1v1h-1zm11 0h1v1h-1zm10 0h1v1h-1zm10 0h1v1h-1zm10 0h1v1h-1zm11 0h1v1h-1zm10 0h1v1h-1zm10 0h1v1h-1zm10 0h1v1h-1zm11 0h1v1h-1zm10 0h1v1h-1zm10 0h1v1h-1zm10 0h1v1h-1zm11 0h1v1h-1zm10 0h1v1h-1zm10 0h1v1h-1zm10 0h1v1h-1zm11 0h1v1h-1zm10 0h1v1h-1zm10 0h1v1h-1zm10 0h1v1h-1zm11 0h1v1h-1zm10 0h1v1h-1zm10 0h1v1h-1zm10 0h1v1h-1zm11 0h1v1h-1zm10 0h1v1h-1zm10 0h1v1h-1zm10 0h1v1h-1zm11 0h1v1h-1zm10 0h1v1h-1zm10 0h1v1h-1zm10 0h1v1h-1zm11 0h1v1h-1zm10 0h1v1h-1zm10 0h1v1h-1zm10 0h1v1h-1zm11 0h1v1h-1zm10 0h1v1h-1zm10 0h1v1h-1zm10 0h1v1h-1zm11 0h1v1h-1zm10 0h1v1h-1zm10 0h1v1h-1zm10 0h1v1h-1zm11 0h1v1h-1zm10 0h1v1h-1zm10 0h1v1h-1zm10 0h1v1h-1zm11 0h1v1h-1zm10 0h1v1h-1zm10 0h1v1h-1zm10 0h1v1h-1zm11 0h1v1h-1zm10 0h1v1h-1zm10 0h1v1h-1zm10 0h1v1h-1zm11 0h1v1h-1zm10 0h1v1h-1zm10 0h1v1h-1zm10 0h1v1h-1zm11 0h1v1h-1zm10 0h1v1h-1zm10 0h1v1h-1zm10 0h1v1h-1zm11 0h1v1h-1zm10 0h1v1h-1zm10 0h1v1h-1zm10 0h1v1h-1zm11 0h1v1h-1zm10 0h1v1h-1zm10 0h1v1h-1zm10 0h1v1h-1zm11 0h1v1h-1zm10 0h1v1h-1zm10 0h1v1h-1zm10 0h1v1h-1zm11 0h1v1h-1zm10 0h1v1h-1zm10 0h1v1h-1zm10 0h1v1h-1zm11 0h1v1h-1zm10 0h1v1h-1zm10 0h1v1h-1zM95 291h1v1h-1zm10 0h1v1h-1zm10 0h1v1h-1zm11 0h1v1h-1zm10 0h1v1h-1zm10 0h1v1h-1zm10 0h1v1h-1zm11 0h1v1h-1zm10 0h1v1h-1zm10 0h1v1h-1zm10 0h1v1h-1zm11 0h1v1h-1zm10 0h1v1h-1zm10 0h1v1h-1zm10 0h1v1h-1zm11 0h1v1h-1zm10 0h1v1h-1zm10 0h1v1h-1zm10 0h1v1h-1zm11 0h1v1h-1zm10 0h1v1h-1zm10 0h1v1h-1zm10 0h1v1h-1zm11 0h1v1h-1zm10 0h1v1h-1zm10 0h1v1h-1zm10 0h1v1h-1zm11 0h1v1h-1zm10 0h1v1h-1zm10 0h1v1h-1zm10 0h1v1h-1zm11 0h1v1h-1zm10 0h1v1h-1zm10 0h1v1h-1zm10 0h1v1h-1zm11 0h1v1h-1zm10 0h1v1h-1zm10 0h1v1h-1zm10 0h1v1h-1zm11 0h1v1h-1zm10 0h1v1h-1zm10 0h1v1h-1zm10 0h1v1h-1zm11 0h1v1h-1zm10 0h1v1h-1zm10 0h1v1h-1zm10 0h1v1h-1zm11 0h1v1h-1zm10 0h1v1h-1zm10 0h1v1h-1zm10 0h1v1h-1zm11 0h1v1h-1zm10 0h1v1h-1zm10 0h1v1h-1zm10 0h1v1h-1zm11 0h1v1h-1zm10 0h1v1h-1zm10 0h1v1h-1zm10 0h1v1h-1zm11 0h1v1h-1zm10 0h1v1h-1zm10 0h1v1h-1zm10 0h1v1h-1zm11 0h1v1h-1zm10 0h1v1h-1zm10 0h1v1h-1zm10 0h1v1h-1zm11 0h1v1h-1zm10 0h1v1h-1zm10 0h1v1h-1zm10 0h1v1h-1zm11 0h1v1h-1zm10 0h1v1h-1zm10 0h1v1h-1zm10 0h1v1h-1zm11 0h1v1h-1zm10 0h1v1h-1zm10 0h1v1h-1zm10 0h1v1h-1zm11 0h1v1h-1zm10 0h1v1h-1zm10 0h1v1h-1zm10 0h1v1h-1zm11 0h1v1h-1zm10 0h1v1h-1zm10 0h1v1h-1zm10 0h1v1h-1zm11 0h1v1h-1zm10 0h1v1h-1zm10 0h1v1h-1zm10 0h1v1h-1zm11 0h1v1h-1zm10 0h1v1h-1zm10 0h1v1h-1zm10 0h1v1h-1zm11 0h1v1h-1zm10 0h1v1h-1zm10 0h1v1h-1zm10 0h1v1h-1zm11 0h1v1h-1zm10 0h1v1h-1zm10 0h1v1h-1zM95 281h1v1h-1zm10 0h1v1h-1zm10 0h1v1h-1zm11 0h1v1h-1zm10 0h1v1h-1zm10 0h1v1h-1zm10 0h1v1h-1zm11 0h1v1h-1zm10 0h1v1h-1zm10 0h1v1h-1zm10 0h1v1h-1zm11 0h1v1h-1zm10 0h1v1h-1zm10 0h1v1h-1zm10 0h1v1h-1zm11 0h1v1h-1zm10 0h1v1h-1zm10 0h1v1h-1zm10 0h1v1h-1zm11 0h1v1h-1zm10 0h1v1h-1zm10 0h1v1h-1zm10 0h1v1h-1zm11 0h1v1h-1zm10 0h1v1h-1zm10 0h1v1h-1zm10 0h1v1h-1zm11 0h1v1h-1zm10 0h1v1h-1zm10 0h1v1h-1zm10 0h1v1h-1zm11 0h1v1h-1zm10 0h1v1h-1zm10 0h1v1h-1zm10 0h1v1h-1zm11 0h1v1h-1zm10 0h1v1h-1zm10 0h1v1h-1zm10 0h1v1h-1zm11 0h1v1h-1zm10 0h1v1h-1zm10 0h1v1h-1zm10 0h1v1h-1zm11 0h1v1h-1zm10 0h1v1h-1zm10 0h1v1h-1zm10 0h1v1h-1zm11 0h1v1h-1zm10 0h1v1h-1zm10 0h1v1h-1zm10 0h1v1h-1zm11 0h1v1h-1zm10 0h1v1h-1zm10 0h1v1h-1zm10 0h1v1h-1zm11 0h1v1h-1zm10 0h1v1h-1zm10 0h1v1h-1zm10 0h1v1h-1zm11 0h1v1h-1zm10 0h1v1h-1zm10 0h1v1h-1zm10 0h1v1h-1zm11 0h1v1h-1zm10 0h1v1h-1zm10 0h1v1h-1zm10 0h1v1h-1zm11 0h1v1h-1zm10 0h1v1h-1zm10 0h1v1h-1zm10 0h1v1h-1zm11 0h1v1h-1zm10 0h1v1h-1zm10 0h1v1h-1zm10 0h1v1h-1zm11 0h1v1h-1zm10 0h1v1h-1zm10 0h1v1h-1zm10 0h1v1h-1zm11 0h1v1h-1zm10 0h1v1h-1zm10 0h1v1h-1zm10 0h1v1h-1zm11 0h1v1h-1zm10 0h1v1h-1zm10 0h1v1h-1zm10 0h1v1h-1zm11 0h1v1h-1zm10 0h1v1h-1zm10 0h1v1h-1zm10 0h1v1h-1zm11 0h1v1h-1zm10 0h1v1h-1zm10 0h1v1h-1zm10 0h1v1h-1zm11 0h1v1h-1zm10 0h1v1h-1zm10 0h1v1h-1zm10 0h1v1h-1zm11 0h1v1h-1zm10 0h1v1h-1zm10 0h1v1h-1zM95 271h1v1h-1zm10 0h1v1h-1zm10 0h1v1h-1zm11 0h1v1h-1zm10 0h1v1h-1zm10 0h1v1h-1zm10 0h1v1h-1zm11 0h1v1h-1zm10 0h1v1h-1zm10 0h1v1h-1zm10 0h1v1h-1zm11 0h1v1h-1zm10 0h1v1h-1zm10 0h1v1h-1zm10 0h1v1h-1zm11 0h1v1h-1zm10 0h1v1h-1zm10 0h1v1h-1zm10 0h1v1h-1zm11 0h1v1h-1zm10 0h1v1h-1zm10 0h1v1h-1zm10 0h1v1h-1zm11 0h1v1h-1zm10 0h1v1h-1zm10 0h1v1h-1zm10 0h1v1h-1zm11 0h1v1h-1zm10 0h1v1h-1zm10 0h1v1h-1zm10 0h1v1h-1zm11 0h1v1h-1zm10 0h1v1h-1zm10 0h1v1h-1zm10 0h1v1h-1zm11 0h1v1h-1zm10 0h1v1h-1zm10 0h1v1h-1zm10 0h1v1h-1zm11 0h1v1h-1zm10 0h1v1h-1zm10 0h1v1h-1zm10 0h1v1h-1zm11 0h1v1h-1zm10 0h1v1h-1zm10 0h1v1h-1zm10 0h1v1h-1zm11 0h1v1h-1zm10 0h1v1h-1zm10 0h1v1h-1zm10 0h1v1h-1zm11 0h1v1h-1zm10 0h1v1h-1zm10 0h1v1h-1zm10 0h1v1h-1zm11 0h1v1h-1zm10 0h1v1h-1zm10 0h1v1h-1zm10 0h1v1h-1zm11 0h1v1h-1zm10 0h1v1h-1zm10 0h1v1h-1zm10 0h1v1h-1zm11 0h1v1h-1zm10 0h1v1h-1zm10 0h1v1h-1zm10 0h1v1h-1zm11 0h1v1h-1zm10 0h1v1h-1zm10 0h1v1h-1zm10 0h1v1h-1zm11 0h1v1h-1zm10 0h1v1h-1zm10 0h1v1h-1zm10 0h1v1h-1zm11 0h1v1h-1zm10 0h1v1h-1zm10 0h1v1h-1zm10 0h1v1h-1zm11 0h1v1h-1zm10 0h1v1h-1zm10 0h1v1h-1zm10 0h1v1h-1zm11 0h1v1h-1zm10 0h1v1h-1zm10 0h1v1h-1zm10 0h1v1h-1zm11 0h1v1h-1zm10 0h1v1h-1zm10 0h1v1h-1zm10 0h1v1h-1zm11 0h1v1h-1zm10 0h1v1h-1zm10 0h1v1h-1zm10 0h1v1h-1zm11 0h1v1h-1zm10 0h1v1h-1zm10 0h1v1h-1zm10 0h1v1h-1zm11 0h1v1h-1zm10 0h1v1h-1zm10 0h1v1h-1zM95 260h1v1h-1zm10 0h1v1h-1zm10 0h1v1h-1zm11 0h1v1h-1zm10 0h1v1h-1zm10 0h1v1h-1zm10 0h1v1h-1zm11 0h1v1h-1zm10 0h1v1h-1zm10 0h1v1h-1zm10 0h1v1h-1zm11 0h1v1h-1zm10 0h1v1h-1zm10 0h1v1h-1zm10 0h1v1h-1zm11 0h1v1h-1zm10 0h1v1h-1zm10 0h1v1h-1zm10 0h1v1h-1zm11 0h1v1h-1zm10 0h1v1h-1zm10 0h1v1h-1zm10 0h1v1h-1zm11 0h1v1h-1zm10 0h1v1h-1zm10 0h1v1h-1zm10 0h1v1h-1zm11 0h1v1h-1zm10 0h1v1h-1zm10 0h1v1h-1zm10 0h1v1h-1zm11 0h1v1h-1zm10 0h1v1h-1zm10 0h1v1h-1zm10 0h1v1h-1zm11 0h1v1h-1zm10 0h1v1h-1zm10 0h1v1h-1zm10 0h1v1h-1zm11 0h1v1h-1zm10 0h1v1h-1zm10 0h1v1h-1zm10 0h1v1h-1zm11 0h1v1h-1zm10 0h1v1h-1zm10 0h1v1h-1zm10 0h1v1h-1zm11 0h1v1h-1zm10 0h1v1h-1zm10 0h1v1h-1zm10 0h1v1h-1zm11 0h1v1h-1zm10 0h1v1h-1zm10 0h1v1h-1zm10 0h1v1h-1zm11 0h1v1h-1zm10 0h1v1h-1zm10 0h1v1h-1zm10 0h1v1h-1zm11 0h1v1h-1zm10 0h1v1h-1zm10 0h1v1h-1zm10 0h1v1h-1zm11 0h1v1h-1zm10 0h1v1h-1zm10 0h1v1h-1zm10 0h1v1h-1zm11 0h1v1h-1zm10 0h1v1h-1zm10 0h1v1h-1zm10 0h1v1h-1zm11 0h1v1h-1zm10 0h1v1h-1zm10 0h1v1h-1zm10 0h1v1h-1zm11 0h1v1h-1zm10 0h1v1h-1zm10 0h1v1h-1zm10 0h1v1h-1zm11 0h1v1h-1zm10 0h1v1h-1zm10 0h1v1h-1zm10 0h1v1h-1zm11 0h1v1h-1zm10 0h1v1h-1zm10 0h1v1h-1zm10 0h1v1h-1zm11 0h1v1h-1zm10 0h1v1h-1zm10 0h1v1h-1zm10 0h1v1h-1zm11 0h1v1h-1zm10 0h1v1h-1zm10 0h1v1h-1zm10 0h1v1h-1zm11 0h1v1h-1zm10 0h1v1h-1zm10 0h1v1h-1zm10 0h1v1h-1zm11 0h1v1h-1zm10 0h1v1h-1zm10 0h1v1h-1zM95 250h1v1h-1zm10 0h1v1h-1zm10 0h1v1h-1zm11 0h1v1h-1zm10 0h1v1h-1zm10 0h1v1h-1zm10 0h1v1h-1zm11 0h1v1h-1zm10 0h1v1h-1zm10 0h1v1h-1zm10 0h1v1h-1zm11 0h1v1h-1zm10 0h1v1h-1zm10 0h1v1h-1zm10 0h1v1h-1zm11 0h1v1h-1zm10 0h1v1h-1zm10 0h1v1h-1zm10 0h1v1h-1zm11 0h1v1h-1zm10 0h1v1h-1zm10 0h1v1h-1zm10 0h1v1h-1zm11 0h1v1h-1zm10 0h1v1h-1zm10 0h1v1h-1zm10 0h1v1h-1zm11 0h1v1h-1zm10 0h1v1h-1zm10 0h1v1h-1zm10 0h1v1h-1zm11 0h1v1h-1zm10 0h1v1h-1zm10 0h1v1h-1zm10 0h1v1h-1zm11 0h1v1h-1zm10 0h1v1h-1zm10 0h1v1h-1zm10 0h1v1h-1zm11 0h1v1h-1zm10 0h1v1h-1zm10 0h1v1h-1zm10 0h1v1h-1zm11 0h1v1h-1zm10 0h1v1h-1zm10 0h1v1h-1zm10 0h1v1h-1zm11 0h1v1h-1zm10 0h1v1h-1zm10 0h1v1h-1zm10 0h1v1h-1zm11 0h1v1h-1zm10 0h1v1h-1zm10 0h1v1h-1zm10 0h1v1h-1zm11 0h1v1h-1zm10 0h1v1h-1zm10 0h1v1h-1zm10 0h1v1h-1zm11 0h1v1h-1zm10 0h1v1h-1zm10 0h1v1h-1zm10 0h1v1h-1zm11 0h1v1h-1zm10 0h1v1h-1zm10 0h1v1h-1zm10 0h1v1h-1zm11 0h1v1h-1zm10 0h1v1h-1zm10 0h1v1h-1zm10 0h1v1h-1zm11 0h1v1h-1zm10 0h1v1h-1zm10 0h1v1h-1zm10 0h1v1h-1zm11 0h1v1h-1zm10 0h1v1h-1zm10 0h1v1h-1zm10 0h1v1h-1zm11 0h1v1h-1zm10 0h1v1h-1zm10 0h1v1h-1zm10 0h1v1h-1zm11 0h1v1h-1zm10 0h1v1h-1zm10 0h1v1h-1zm10 0h1v1h-1zm11 0h1v1h-1zm10 0h1v1h-1zm10 0h1v1h-1zm10 0h1v1h-1zm11 0h1v1h-1zm10 0h1v1h-1zm10 0h1v1h-1zm10 0h1v1h-1zm11 0h1v1h-1zm10 0h1v1h-1zm10 0h1v1h-1zm10 0h1v1h-1zm11 0h1v1h-1zm10 0h1v1h-1zm10 0h1v1h-1zM95 240h1v1h-1zm10 0h1v1h-1zm10 0h1v1h-1zm11 0h1v1h-1zm10 0h1v1h-1zm10 0h1v1h-1zm10 0h1v1h-1zm11 0h1v1h-1zm10 0h1v1h-1zm10 0h1v1h-1zm10 0h1v1h-1zm11 0h1v1h-1zm10 0h1v1h-1zm10 0h1v1h-1zm10 0h1v1h-1zm11 0h1v1h-1zm10 0h1v1h-1zm10 0h1v1h-1zm10 0h1v1h-1zm11 0h1v1h-1zm10 0h1v1h-1zm10 0h1v1h-1zm10 0h1v1h-1zm11 0h1v1h-1zm10 0h1v1h-1zm10 0h1v1h-1zm10 0h1v1h-1zm11 0h1v1h-1zm10 0h1v1h-1zm10 0h1v1h-1zm10 0h1v1h-1zm11 0h1v1h-1zm10 0h1v1h-1zm10 0h1v1h-1zm10 0h1v1h-1zm11 0h1v1h-1zm10 0h1v1h-1zm10 0h1v1h-1zm10 0h1v1h-1zm11 0h1v1h-1zm10 0h1v1h-1zm10 0h1v1h-1zm10 0h1v1h-1zm11 0h1v1h-1zm10 0h1v1h-1zm10 0h1v1h-1zm10 0h1v1h-1zm11 0h1v1h-1zm10 0h1v1h-1zm10 0h1v1h-1zm10 0h1v1h-1zm11 0h1v1h-1zm10 0h1v1h-1zm10 0h1v1h-1zm10 0h1v1h-1zm11 0h1v1h-1zm10 0h1v1h-1zm10 0h1v1h-1zm10 0h1v1h-1zm11 0h1v1h-1zm10 0h1v1h-1zm10 0h1v1h-1zm10 0h1v1h-1zm11 0h1v1h-1zm10 0h1v1h-1zm10 0h1v1h-1zm10 0h1v1h-1zm11 0h1v1h-1zm10 0h1v1h-1zm10 0h1v1h-1zm10 0h1v1h-1zm11 0h1v1h-1zm10 0h1v1h-1zm10 0h1v1h-1zm10 0h1v1h-1zm11 0h1v1h-1zm10 0h1v1h-1zm10 0h1v1h-1zm10 0h1v1h-1zm11 0h1v1h-1zm10 0h1v1h-1zm10 0h1v1h-1zm10 0h1v1h-1zm11 0h1v1h-1zm10 0h1v1h-1zm10 0h1v1h-1zm10 0h1v1h-1zm11 0h1v1h-1zm10 0h1v1h-1zm10 0h1v1h-1zm10 0h1v1h-1zm11 0h1v1h-1zm10 0h1v1h-1zm10 0h1v1h-1zm10 0h1v1h-1zm11 0h1v1h-1zm10 0h1v1h-1zm10 0h1v1h-1zm10 0h1v1h-1zm11 0h1v1h-1zm10 0h1v1h-1zm10 0h1v1h-1zM95 230h1v1h-1zm10 0h1v1h-1zm10 0h1v1h-1zm11 0h1v1h-1zm10 0h1v1h-1zm10 0h1v1h-1zm10 0h1v1h-1zm11 0h1v1h-1zm10 0h1v1h-1zm10 0h1v1h-1zm10 0h1v1h-1zm11 0h1v1h-1zm10 0h1v1h-1zm10 0h1v1h-1zm10 0h1v1h-1zm11 0h1v1h-1zm10 0h1v1h-1zm10 0h1v1h-1zm10 0h1v1h-1zm11 0h1v1h-1zm10 0h1v1h-1zm10 0h1v1h-1zm10 0h1v1h-1zm11 0h1v1h-1zm10 0h1v1h-1zm10 0h1v1h-1zm10 0h1v1h-1zm11 0h1v1h-1zm10 0h1v1h-1zm10 0h1v1h-1zm10 0h1v1h-1zm11 0h1v1h-1zm10 0h1v1h-1zm10 0h1v1h-1zm10 0h1v1h-1zm11 0h1v1h-1zm10 0h1v1h-1zm10 0h1v1h-1zm10 0h1v1h-1zm11 0h1v1h-1zm10 0h1v1h-1zm10 0h1v1h-1zm10 0h1v1h-1zm11 0h1v1h-1zm10 0h1v1h-1zm10 0h1v1h-1zm10 0h1v1h-1zm11 0h1v1h-1zm10 0h1v1h-1zm10 0h1v1h-1zm10 0h1v1h-1zm11 0h1v1h-1zm10 0h1v1h-1zm10 0h1v1h-1zm10 0h1v1h-1zm11 0h1v1h-1zm10 0h1v1h-1zm10 0h1v1h-1zm10 0h1v1h-1zm11 0h1v1h-1zm10 0h1v1h-1zm10 0h1v1h-1zm10 0h1v1h-1zm11 0h1v1h-1zm10 0h1v1h-1zm10 0h1v1h-1zm10 0h1v1h-1zm11 0h1v1h-1zm10 0h1v1h-1zm10 0h1v1h-1zm10 0h1v1h-1zm11 0h1v1h-1zm10 0h1v1h-1zm10 0h1v1h-1zm10 0h1v1h-1zm11 0h1v1h-1zm10 0h1v1h-1zm10 0h1v1h-1zm10 0h1v1h-1zm11 0h1v1h-1zm10 0h1v1h-1zm10 0h1v1h-1zm10 0h1v1h-1zm11 0h1v1h-1zm10 0h1v1h-1zm10 0h1v1h-1zm10 0h1v1h-1zm11 0h1v1h-1zm10 0h1v1h-1zm10 0h1v1h-1zm10 0h1v1h-1zm11 0h1v1h-1zm10 0h1v1h-1zm10 0h1v1h-1zm10 0h1v1h-1zm11 0h1v1h-1zm10 0h1v1h-1zm10 0h1v1h-1zm10 0h1v1h-1zm11 0h1v1h-1zm10 0h1v1h-1zm10 0h1v1h-1zM95 219h1v1h-1zm10 0h1v1h-1zm10 0h1v1h-1zm11 0h1v1h-1zm10 0h1v1h-1zm10 0h1v1h-1zm10 0h1v1h-1zm11 0h1v1h-1zm10 0h1v1h-1zm10 0h1v1h-1zm10 0h1v1h-1zm11 0h1v1h-1zm10 0h1v1h-1zm10 0h1v1h-1zm10 0h1v1h-1zm11 0h1v1h-1zm10 0h1v1h-1zm10 0h1v1h-1zm10 0h1v1h-1zm11 0h1v1h-1zm10 0h1v1h-1zm10 0h1v1h-1zm10 0h1v1h-1zm11 0h1v1h-1zm10 0h1v1h-1zm10 0h1v1h-1zm10 0h1v1h-1zm11 0h1v1h-1zm10 0h1v1h-1zm10 0h1v1h-1zm10 0h1v1h-1zm11 0h1v1h-1zm10 0h1v1h-1zm10 0h1v1h-1zm10 0h1v1h-1zm11 0h1v1h-1zm10 0h1v1h-1zm10 0h1v1h-1zm10 0h1v1h-1zm11 0h1v1h-1zm10 0h1v1h-1zm10 0h1v1h-1zm10 0h1v1h-1zm11 0h1v1h-1zm10 0h1v1h-1zm10 0h1v1h-1zm10 0h1v1h-1zm11 0h1v1h-1zm10 0h1v1h-1zm10 0h1v1h-1zm10 0h1v1h-1zm11 0h1v1h-1zm10 0h1v1h-1zm10 0h1v1h-1zm10 0h1v1h-1zm11 0h1v1h-1zm10 0h1v1h-1zm10 0h1v1h-1zm10 0h1v1h-1zm11 0h1v1h-1zm10 0h1v1h-1zm10 0h1v1h-1zm10 0h1v1h-1zm11 0h1v1h-1zm10 0h1v1h-1zm10 0h1v1h-1zm10 0h1v1h-1zm11 0h1v1h-1zm10 0h1v1h-1zm10 0h1v1h-1zm10 0h1v1h-1zm11 0h1v1h-1zm10 0h1v1h-1zm10 0h1v1h-1zm10 0h1v1h-1zm11 0h1v1h-1zm10 0h1v1h-1zm10 0h1v1h-1zm10 0h1v1h-1zm11 0h1v1h-1zm10 0h1v1h-1zm10 0h1v1h-1zm10 0h1v1h-1zm11 0h1v1h-1zm10 0h1v1h-1zm10 0h1v1h-1zm10 0h1v1h-1zm11 0h1v1h-1zm10 0h1v1h-1zm10 0h1v1h-1zm10 0h1v1h-1zm11 0h1v1h-1zm10 0h1v1h-1zm10 0h1v1h-1zm10 0h1v1h-1zm11 0h1v1h-1zm10 0h1v1h-1zm10 0h1v1h-1zm10 0h1v1h-1zm11 0h1v1h-1zm10 0h1v1h-1zm10 0h1v1h-1zM95 209h1v1h-1zm10 0h1v1h-1zm10 0h1v1h-1zm11 0h1v1h-1zm10 0h1v1h-1zm10 0h1v1h-1zm10 0h1v1h-1zm11 0h1v1h-1zm10 0h1v1h-1zm10 0h1v1h-1zm10 0h1v1h-1zm11 0h1v1h-1zm10 0h1v1h-1zm10 0h1v1h-1zm10 0h1v1h-1zm11 0h1v1h-1zm10 0h1v1h-1zm10 0h1v1h-1zm10 0h1v1h-1zm11 0h1v1h-1zm10 0h1v1h-1zm10 0h1v1h-1zm10 0h1v1h-1zm11 0h1v1h-1zm10 0h1v1h-1zm10 0h1v1h-1zm10 0h1v1h-1zm11 0h1v1h-1zm10 0h1v1h-1zm10 0h1v1h-1zm10 0h1v1h-1zm11 0h1v1h-1zm10 0h1v1h-1zm10 0h1v1h-1zm10 0h1v1h-1zm11 0h1v1h-1zm10 0h1v1h-1zm10 0h1v1h-1zm10 0h1v1h-1zm11 0h1v1h-1zm10 0h1v1h-1zm10 0h1v1h-1zm10 0h1v1h-1zm11 0h1v1h-1zm10 0h1v1h-1zm10 0h1v1h-1zm10 0h1v1h-1zm11 0h1v1h-1zm10 0h1v1h-1zm10 0h1v1h-1zm10 0h1v1h-1zm11 0h1v1h-1zm10 0h1v1h-1zm10 0h1v1h-1zm10 0h1v1h-1zm11 0h1v1h-1zm10 0h1v1h-1zm10 0h1v1h-1zm10 0h1v1h-1zm11 0h1v1h-1zm10 0h1v1h-1zm10 0h1v1h-1zm10 0h1v1h-1zm11 0h1v1h-1zm10 0h1v1h-1zm10 0h1v1h-1zm10 0h1v1h-1zm11 0h1v1h-1zm10 0h1v1h-1zm10 0h1v1h-1zm10 0h1v1h-1zm11 0h1v1h-1zm10 0h1v1h-1zm10 0h1v1h-1zm10 0h1v1h-1zm11 0h1v1h-1zm10 0h1v1h-1zm10 0h1v1h-1zm10 0h1v1h-1zm11 0h1v1h-1zm10 0h1v1h-1zm10 0h1v1h-1zm10 0h1v1h-1zm11 0h1v1h-1zm10 0h1v1h-1zm10 0h1v1h-1zm10 0h1v1h-1zm11 0h1v1h-1zm10 0h1v1h-1zm10 0h1v1h-1zm10 0h1v1h-1zm11 0h1v1h-1zm10 0h1v1h-1zm10 0h1v1h-1zm10 0h1v1h-1zm11 0h1v1h-1zm10 0h1v1h-1zm10 0h1v1h-1zm10 0h1v1h-1zm11 0h1v1h-1zm10 0h1v1h-1zm10 0h1v1h-1zM95 199h1v1h-1zm10 0h1v1h-1zm10 0h1v1h-1zm11 0h1v1h-1zm10 0h1v1h-1zm10 0h1v1h-1zm10 0h1v1h-1zm11 0h1v1h-1zm10 0h1v1h-1zm10 0h1v1h-1zm10 0h1v1h-1zm11 0h1v1h-1zm10 0h1v1h-1zm10 0h1v1h-1zm10 0h1v1h-1zm11 0h1v1h-1zm10 0h1v1h-1zm10 0h1v1h-1zm10 0h1v1h-1zm11 0h1v1h-1zm10 0h1v1h-1zm10 0h1v1h-1zm10 0h1v1h-1zm11 0h1v1h-1zm10 0h1v1h-1zm10 0h1v1h-1zm10 0h1v1h-1zm11 0h1v1h-1zm10 0h1v1h-1zm10 0h1v1h-1zm10 0h1v1h-1zm11 0h1v1h-1zm10 0h1v1h-1zm10 0h1v1h-1zm10 0h1v1h-1zm11 0h1v1h-1zm10 0h1v1h-1zm10 0h1v1h-1zm10 0h1v1h-1zm11 0h1v1h-1zm10 0h1v1h-1zm10 0h1v1h-1zm10 0h1v1h-1zm11 0h1v1h-1zm10 0h1v1h-1zm10 0h1v1h-1zm10 0h1v1h-1zm11 0h1v1h-1zm10 0h1v1h-1zm10 0h1v1h-1zm10 0h1v1h-1zm11 0h1v1h-1zm10 0h1v1h-1zm10 0h1v1h-1zm10 0h1v1h-1zm11 0h1v1h-1zm10 0h1v1h-1zm10 0h1v1h-1zm10 0h1v1h-1zm11 0h1v1h-1zm10 0h1v1h-1zm10 0h1v1h-1zm10 0h1v1h-1zm11 0h1v1h-1zm10 0h1v1h-1zm10 0h1v1h-1zm10 0h1v1h-1zm11 0h1v1h-1zm10 0h1v1h-1zm10 0h1v1h-1zm10 0h1v1h-1zm11 0h1v1h-1zm10 0h1v1h-1zm10 0h1v1h-1zm10 0h1v1h-1zm11 0h1v1h-1zm10 0h1v1h-1zm10 0h1v1h-1zm10 0h1v1h-1zm11 0h1v1h-1zm10 0h1v1h-1zm10 0h1v1h-1zm10 0h1v1h-1zm11 0h1v1h-1zm10 0h1v1h-1zm10 0h1v1h-1zm10 0h1v1h-1zm11 0h1v1h-1zm10 0h1v1h-1zm10 0h1v1h-1zm10 0h1v1h-1zm11 0h1v1h-1zm10 0h1v1h-1zm10 0h1v1h-1zm10 0h1v1h-1zm11 0h1v1h-1zm10 0h1v1h-1zm10 0h1v1h-1zm10 0h1v1h-1zm11 0h1v1h-1zm10 0h1v1h-1zm10 0h1v1h-1zM95 189h1v1h-1zm10 0h1v1h-1zm10 0h1v1h-1zm11 0h1v1h-1zm10 0h1v1h-1zm10 0h1v1h-1zm10 0h1v1h-1zm11 0h1v1h-1zm10 0h1v1h-1zm10 0h1v1h-1zm10 0h1v1h-1zm11 0h1v1h-1zm10 0h1v1h-1zm10 0h1v1h-1zm10 0h1v1h-1zm11 0h1v1h-1zm10 0h1v1h-1zm10 0h1v1h-1zm10 0h1v1h-1zm11 0h1v1h-1zm10 0h1v1h-1zm10 0h1v1h-1zm10 0h1v1h-1zm11 0h1v1h-1zm10 0h1v1h-1zm10 0h1v1h-1zm10 0h1v1h-1zm11 0h1v1h-1zm10 0h1v1h-1zm10 0h1v1h-1zm10 0h1v1h-1zm11 0h1v1h-1zm10 0h1v1h-1zm10 0h1v1h-1zm10 0h1v1h-1zm11 0h1v1h-1zm10 0h1v1h-1zm10 0h1v1h-1zm10 0h1v1h-1zm11 0h1v1h-1zm10 0h1v1h-1zm10 0h1v1h-1zm10 0h1v1h-1zm11 0h1v1h-1zm10 0h1v1h-1zm10 0h1v1h-1zm10 0h1v1h-1zm11 0h1v1h-1zm10 0h1v1h-1zm10 0h1v1h-1zm10 0h1v1h-1zm11 0h1v1h-1zm10 0h1v1h-1zm10 0h1v1h-1zm10 0h1v1h-1zm11 0h1v1h-1zm10 0h1v1h-1zm10 0h1v1h-1zm10 0h1v1h-1zm11 0h1v1h-1zm10 0h1v1h-1zm10 0h1v1h-1zm10 0h1v1h-1zm11 0h1v1h-1zm10 0h1v1h-1zm10 0h1v1h-1zm10 0h1v1h-1zm11 0h1v1h-1zm10 0h1v1h-1zm10 0h1v1h-1zm10 0h1v1h-1zm11 0h1v1h-1zm10 0h1v1h-1zm10 0h1v1h-1zm10 0h1v1h-1zm11 0h1v1h-1zm10 0h1v1h-1zm10 0h1v1h-1zm10 0h1v1h-1zm11 0h1v1h-1zm10 0h1v1h-1zm10 0h1v1h-1zm10 0h1v1h-1zm11 0h1v1h-1zm10 0h1v1h-1zm10 0h1v1h-1zm10 0h1v1h-1zm11 0h1v1h-1zm10 0h1v1h-1zm10 0h1v1h-1zm10 0h1v1h-1zm11 0h1v1h-1zm10 0h1v1h-1zm10 0h1v1h-1zm10 0h1v1h-1zm11 0h1v1h-1zm10 0h1v1h-1zm10 0h1v1h-1zm10 0h1v1h-1zm11 0h1v1h-1zm10 0h1v1h-1zm10 0h1v1h-1zM95 178h1v1h-1zm10 0h1v1h-1zm10 0h1v1h-1zm11 0h1v1h-1zm10 0h1v1h-1zm10 0h1v1h-1zm10 0h1v1h-1zm11 0h1v1h-1zm10 0h1v1h-1zm10 0h1v1h-1zm10 0h1v1h-1zm11 0h1v1h-1zm10 0h1v1h-1zm10 0h1v1h-1zm10 0h1v1h-1zm11 0h1v1h-1zm10 0h1v1h-1zm10 0h1v1h-1zm10 0h1v1h-1zm11 0h1v1h-1zm10 0h1v1h-1zm10 0h1v1h-1zm10 0h1v1h-1zm11 0h1v1h-1zm10 0h1v1h-1zm10 0h1v1h-1zm10 0h1v1h-1zm11 0h1v1h-1zm10 0h1v1h-1zm10 0h1v1h-1zm10 0h1v1h-1zm11 0h1v1h-1zm10 0h1v1h-1zm10 0h1v1h-1zm10 0h1v1h-1zm11 0h1v1h-1zm10 0h1v1h-1zm10 0h1v1h-1zm10 0h1v1h-1zm11 0h1v1h-1zm10 0h1v1h-1zm10 0h1v1h-1zm10 0h1v1h-1zm11 0h1v1h-1zm10 0h1v1h-1zm10 0h1v1h-1zm10 0h1v1h-1zm11 0h1v1h-1zm10 0h1v1h-1zm10 0h1v1h-1zm10 0h1v1h-1zm11 0h1v1h-1zm10 0h1v1h-1zm10 0h1v1h-1zm10 0h1v1h-1zm11 0h1v1h-1zm10 0h1v1h-1zm10 0h1v1h-1zm10 0h1v1h-1zm11 0h1v1h-1zm10 0h1v1h-1zm10 0h1v1h-1zm10 0h1v1h-1zm11 0h1v1h-1zm10 0h1v1h-1zm10 0h1v1h-1zm10 0h1v1h-1zm11 0h1v1h-1zm10 0h1v1h-1zm10 0h1v1h-1zm10 0h1v1h-1zm11 0h1v1h-1zm10 0h1v1h-1zm10 0h1v1h-1zm10 0h1v1h-1zm11 0h1v1h-1zm10 0h1v1h-1zm10 0h1v1h-1zm10 0h1v1h-1zm11 0h1v1h-1zm10 0h1v1h-1zm10 0h1v1h-1zm10 0h1v1h-1zm11 0h1v1h-1zm10 0h1v1h-1zm10 0h1v1h-1zm10 0h1v1h-1zm11 0h1v1h-1zm10 0h1v1h-1zm10 0h1v1h-1zm10 0h1v1h-1zm11 0h1v1h-1zm10 0h1v1h-1zm10 0h1v1h-1zm10 0h1v1h-1zm11 0h1v1h-1zm10 0h1v1h-1zm10 0h1v1h-1zm10 0h1v1h-1zm11 0h1v1h-1zm10 0h1v1h-1zm10 0h1v1h-1zM95 168h1v1h-1zm10 0h1v1h-1zm10 0h1v1h-1zm11 0h1v1h-1zm10 0h1v1h-1zm10 0h1v1h-1zm10 0h1v1h-1zm11 0h1v1h-1zm10 0h1v1h-1zm10 0h1v1h-1zm10 0h1v1h-1zm11 0h1v1h-1zm10 0h1v1h-1zm10 0h1v1h-1zm10 0h1v1h-1zm11 0h1v1h-1zm10 0h1v1h-1zm10 0h1v1h-1zm10 0h1v1h-1zm11 0h1v1h-1zm10 0h1v1h-1zm10 0h1v1h-1zm10 0h1v1h-1zm11 0h1v1h-1zm10 0h1v1h-1zm10 0h1v1h-1zm10 0h1v1h-1zm11 0h1v1h-1zm10 0h1v1h-1zm10 0h1v1h-1zm10 0h1v1h-1zm11 0h1v1h-1zm10 0h1v1h-1zm10 0h1v1h-1zm10 0h1v1h-1zm11 0h1v1h-1zm10 0h1v1h-1zm10 0h1v1h-1zm10 0h1v1h-1zm11 0h1v1h-1zm10 0h1v1h-1zm10 0h1v1h-1zm10 0h1v1h-1zm11 0h1v1h-1zm10 0h1v1h-1zm10 0h1v1h-1zm10 0h1v1h-1zm11 0h1v1h-1zm10 0h1v1h-1zm10 0h1v1h-1zm10 0h1v1h-1zm11 0h1v1h-1zm10 0h1v1h-1zm10 0h1v1h-1zm10 0h1v1h-1zm11 0h1v1h-1zm10 0h1v1h-1zm10 0h1v1h-1zm10 0h1v1h-1zm11 0h1v1h-1zm10 0h1v1h-1zm10 0h1v1h-1zm10 0h1v1h-1zm11 0h1v1h-1zm10 0h1v1h-1zm10 0h1v1h-1zm10 0h1v1h-1zm11 0h1v1h-1zm10 0h1v1h-1zm10 0h1v1h-1zm10 0h1v1h-1zm11 0h1v1h-1zm10 0h1v1h-1zm10 0h1v1h-1zm10 0h1v1h-1zm11 0h1v1h-1zm10 0h1v1h-1zm10 0h1v1h-1zm10 0h1v1h-1zm11 0h1v1h-1zm10 0h1v1h-1zm10 0h1v1h-1zm10 0h1v1h-1zm11 0h1v1h-1zm10 0h1v1h-1zm10 0h1v1h-1zm10 0h1v1h-1zm11 0h1v1h-1zm10 0h1v1h-1zm10 0h1v1h-1zm10 0h1v1h-1zm11 0h1v1h-1zm10 0h1v1h-1zm10 0h1v1h-1zm10 0h1v1h-1zm11 0h1v1h-1zm10 0h1v1h-1zm10 0h1v1h-1zm10 0h1v1h-1zm11 0h1v1h-1zm10 0h1v1h-1zm10 0h1v1h-1zM95 158h1v1h-1zm10 0h1v1h-1zm10 0h1v1h-1zm11 0h1v1h-1zm10 0h1v1h-1zm10 0h1v1h-1zm10 0h1v1h-1zm11 0h1v1h-1zm10 0h1v1h-1zm10 0h1v1h-1zm10 0h1v1h-1zm11 0h1v1h-1zm10 0h1v1h-1zm10 0h1v1h-1zm10 0h1v1h-1zm11 0h1v1h-1zm10 0h1v1h-1zm10 0h1v1h-1zm10 0h1v1h-1zm11 0h1v1h-1zm10 0h1v1h-1zm10 0h1v1h-1zm10 0h1v1h-1zm11 0h1v1h-1zm10 0h1v1h-1zm10 0h1v1h-1zm10 0h1v1h-1zm11 0h1v1h-1zm10 0h1v1h-1zm10 0h1v1h-1zm10 0h1v1h-1zm11 0h1v1h-1zm10 0h1v1h-1zm10 0h1v1h-1zm10 0h1v1h-1zm11 0h1v1h-1zm10 0h1v1h-1zm10 0h1v1h-1zm10 0h1v1h-1zm11 0h1v1h-1zm10 0h1v1h-1zm10 0h1v1h-1zm10 0h1v1h-1zm11 0h1v1h-1zm10 0h1v1h-1zm10 0h1v1h-1zm10 0h1v1h-1zm11 0h1v1h-1zm10 0h1v1h-1zm10 0h1v1h-1zm10 0h1v1h-1zm11 0h1v1h-1zm10 0h1v1h-1zm10 0h1v1h-1zm10 0h1v1h-1zm11 0h1v1h-1zm10 0h1v1h-1zm10 0h1v1h-1zm10 0h1v1h-1zm11 0h1v1h-1zm10 0h1v1h-1zm10 0h1v1h-1zm10 0h1v1h-1zm11 0h1v1h-1zm10 0h1v1h-1zm10 0h1v1h-1zm10 0h1v1h-1zm11 0h1v1h-1zm10 0h1v1h-1zm10 0h1v1h-1zm10 0h1v1h-1zm11 0h1v1h-1zm10 0h1v1h-1zm10 0h1v1h-1zm10 0h1v1h-1zm11 0h1v1h-1zm10 0h1v1h-1zm10 0h1v1h-1zm10 0h1v1h-1zm11 0h1v1h-1zm10 0h1v1h-1zm10 0h1v1h-1zm10 0h1v1h-1zm11 0h1v1h-1zm10 0h1v1h-1zm10 0h1v1h-1zm10 0h1v1h-1zm11 0h1v1h-1zm10 0h1v1h-1zm10 0h1v1h-1zm10 0h1v1h-1zm11 0h1v1h-1zm10 0h1v1h-1zm10 0h1v1h-1zm10 0h1v1h-1zm11 0h1v1h-1zm10 0h1v1h-1zm10 0h1v1h-1zm10 0h1v1h-1zm11 0h1v1h-1zm10 0h1v1h-1zm10 0h1v1h-1z" fill="#4c4c4c"/><path d="M127 155V732M95 297H1138" stroke="#5e4906" stroke-width="2" stroke-dasharray="4.3 1.9" fill="none"/><path d="M125.7 629.8H166.7M146.7 608.8V649.8" stroke="#b80000" stroke-width="1" fill="none"/><rect x="146.2" y="270.55" width="922.5" height="358.75" rx="20.5" stroke="#fff" stroke-width="2.6" fill="none"/><circle cx="233.32" cy="362.8" r="7.3" stroke="#fff" stroke-width="2.6" fill="none"/><circle cx="356.32" cy="362.8" r="7.3" stroke="#fff" stroke-width="2.6" fill="none"/><path d="M256 337.6H333 Q345 337.6 343.5 349 L339 378 Q337.5 388.5 328 388.5 H261 Q251.5 388.5 250 378 L246 349 Q244.5 337.6 256 337.6Z" stroke="#fff" stroke-width="2.6" fill="none"/><circle cx="469.07" cy="362.8" r="38.4" stroke="#fff" stroke-width="2.6" fill="none"/><circle cx="576.7" cy="362.8" r="17.8" stroke="#fff" stroke-width="2.6" fill="none"/><circle cx="233.94" cy="526.8" r="15.9" stroke="#fff" stroke-width="2.6" fill="none"/><circle cx="509.46" cy="526.8" r="15.9" stroke="#fff" stroke-width="2.6" fill="none"/><path d="M288.06 494.41L455.34 494.41L455.34 543.71L439.56 543.71L426.33 559.91L317.07 559.91L303.85 543.71L288.06 543.71Z" stroke="#fff" stroke-width="2.6" fill="none" stroke-linejoin="miter"/><path d="M661.85 332.05a7.1 7.1 0 1 0 14.2 0a7.1 7.1 0 1 0 -14.2 0M692.6 332.05a7.1 7.1 0 1 0 14.2 0a7.1 7.1 0 1 0 -14.2 0M723.35 332.05a7.1 7.1 0 1 0 14.2 0a7.1 7.1 0 1 0 -14.2 0M754.1 332.05a7.1 7.1 0 1 0 14.2 0a7.1 7.1 0 1 0 -14.2 0M784.85 332.05a7.1 7.1 0 1 0 14.2 0a7.1 7.1 0 1 0 -14.2 0M815.6 332.05a7.1 7.1 0 1 0 14.2 0a7.1 7.1 0 1 0 -14.2 0M846.35 332.05a7.1 7.1 0 1 0 14.2 0a7.1 7.1 0 1 0 -14.2 0M877.1 332.05a7.1 7.1 0 1 0 14.2 0a7.1 7.1 0 1 0 -14.2 0M907.85 332.05a7.1 7.1 0 1 0 14.2 0a7.1 7.1 0 1 0 -14.2 0M938.6 332.05a7.1 7.1 0 1 0 14.2 0a7.1 7.1 0 1 0 -14.2 0M969.35 332.05a7.1 7.1 0 1 0 14.2 0a7.1 7.1 0 1 0 -14.2 0M1000.1 332.05a7.1 7.1 0 1 0 14.2 0a7.1 7.1 0 1 0 -14.2 0M677.23 352.55a7.1 7.1 0 1 0 14.2 0a7.1 7.1 0 1 0 -14.2 0M707.98 352.55a7.1 7.1 0 1 0 14.2 0a7.1 7.1 0 1 0 -14.2 0M738.73 352.55a7.1 7.1 0 1 0 14.2 0a7.1 7.1 0 1 0 -14.2 0M769.48 352.55a7.1 7.1 0 1 0 14.2 0a7.1 7.1 0 1 0 -14.2 0M800.23 352.55a7.1 7.1 0 1 0 14.2 0a7.1 7.1 0 1 0 -14.2 0M830.98 352.55a7.1 7.1 0 1 0 14.2 0a7.1 7.1 0 1 0 -14.2 0M861.73 352.55a7.1 7.1 0 1 0 14.2 0a7.1 7.1 0 1 0 -14.2 0M892.48 352.55a7.1 7.1 0 1 0 14.2 0a7.1 7.1 0 1 0 -14.2 0M923.23 352.55a7.1 7.1 0 1 0 14.2 0a7.1 7.1 0 1 0 -14.2 0M953.98 352.55a7.1 7.1 0 1 0 14.2 0a7.1 7.1 0 1 0 -14.2 0M984.73 352.55a7.1 7.1 0 1 0 14.2 0a7.1 7.1 0 1 0 -14.2 0M661.85 373.05a7.1 7.1 0 1 0 14.2 0a7.1 7.1 0 1 0 -14.2 0M692.6 373.05a7.1 7.1 0 1 0 14.2 0a7.1 7.1 0 1 0 -14.2 0M723.35 373.05a7.1 7.1 0 1 0 14.2 0a7.1 7.1 0 1 0 -14.2 0M754.1 373.05a7.1 7.1 0 1 0 14.2 0a7.1 7.1 0 1 0 -14.2 0M784.85 373.05a7.1 7.1 0 1 0 14.2 0a7.1 7.1 0 1 0 -14.2 0M815.6 373.05a7.1 7.1 0 1 0 14.2 0a7.1 7.1 0 1 0 -14.2 0M846.35 373.05a7.1 7.1 0 1 0 14.2 0a7.1 7.1 0 1 0 -14.2 0M877.1 373.05a7.1 7.1 0 1 0 14.2 0a7.1 7.1 0 1 0 -14.2 0M907.85 373.05a7.1 7.1 0 1 0 14.2 0a7.1 7.1 0 1 0 -14.2 0M938.6 373.05a7.1 7.1 0 1 0 14.2 0a7.1 7.1 0 1 0 -14.2 0M969.35 373.05a7.1 7.1 0 1 0 14.2 0a7.1 7.1 0 1 0 -14.2 0M1000.1 373.05a7.1 7.1 0 1 0 14.2 0a7.1 7.1 0 1 0 -14.2 0M677.23 393.55a7.1 7.1 0 1 0 14.2 0a7.1 7.1 0 1 0 -14.2 0M707.98 393.55a7.1 7.1 0 1 0 14.2 0a7.1 7.1 0 1 0 -14.2 0M738.73 393.55a7.1 7.1 0 1 0 14.2 0a7.1 7.1 0 1 0 -14.2 0M769.48 393.55a7.1 7.1 0 1 0 14.2 0a7.1 7.1 0 1 0 -14.2 0M800.23 393.55a7.1 7.1 0 1 0 14.2 0a7.1 7.1 0 1 0 -14.2 0M830.98 393.55a7.1 7.1 0 1 0 14.2 0a7.1 7.1 0 1 0 -14.2 0M861.73 393.55a7.1 7.1 0 1 0 14.2 0a7.1 7.1 0 1 0 -14.2 0M892.48 393.55a7.1 7.1 0 1 0 14.2 0a7.1 7.1 0 1 0 -14.2 0M923.23 393.55a7.1 7.1 0 1 0 14.2 0a7.1 7.1 0 1 0 -14.2 0M953.98 393.55a7.1 7.1 0 1 0 14.2 0a7.1 7.1 0 1 0 -14.2 0M984.73 393.55a7.1 7.1 0 1 0 14.2 0a7.1 7.1 0 1 0 -14.2 0M661.85 414.05a7.1 7.1 0 1 0 14.2 0a7.1 7.1 0 1 0 -14.2 0M692.6 414.05a7.1 7.1 0 1 0 14.2 0a7.1 7.1 0 1 0 -14.2 0M723.35 414.05a7.1 7.1 0 1 0 14.2 0a7.1 7.1 0 1 0 -14.2 0M754.1 414.05a7.1 7.1 0 1 0 14.2 0a7.1 7.1 0 1 0 -14.2 0M784.85 414.05a7.1 7.1 0 1 0 14.2 0a7.1 7.1 0 1 0 -14.2 0M815.6 414.05a7.1 7.1 0 1 0 14.2 0a7.1 7.1 0 1 0 -14.2 0M846.35 414.05a7.1 7.1 0 1 0 14.2 0a7.1 7.1 0 1 0 -14.2 0M877.1 414.05a7.1 7.1 0 1 0 14.2 0a7.1 7.1 0 1 0 -14.2 0M907.85 414.05a7.1 7.1 0 1 0 14.2 0a7.1 7.1 0 1 0 -14.2 0M938.6 414.05a7.1 7.1 0 1 0 14.2 0a7.1 7.1 0 1 0 -14.2 0M969.35 414.05a7.1 7.1 0 1 0 14.2 0a7.1 7.1 0 1 0 -14.2 0M1000.1 414.05a7.1 7.1 0 1 0 14.2 0a7.1 7.1 0 1 0 -14.2 0M677.23 434.55a7.1 7.1 0 1 0 14.2 0a7.1 7.1 0 1 0 -14.2 0M707.98 434.55a7.1 7.1 0 1 0 14.2 0a7.1 7.1 0 1 0 -14.2 0M738.73 434.55a7.1 7.1 0 1 0 14.2 0a7.1 7.1 0 1 0 -14.2 0M769.48 434.55a7.1 7.1 0 1 0 14.2 0a7.1 7.1 0 1 0 -14.2 0M800.23 434.55a7.1 7.1 0 1 0 14.2 0a7.1 7.1 0 1 0 -14.2 0M830.98 434.55a7.1 7.1 0 1 0 14.2 0a7.1 7.1 0 1 0 -14.2 0M861.73 434.55a7.1 7.1 0 1 0 14.2 0a7.1 7.1 0 1 0 -14.2 0M892.48 434.55a7.1 7.1 0 1 0 14.2 0a7.1 7.1 0 1 0 -14.2 0M923.23 434.55a7.1 7.1 0 1 0 14.2 0a7.1 7.1 0 1 0 -14.2 0M953.98 434.55a7.1 7.1 0 1 0 14.2 0a7.1 7.1 0 1 0 -14.2 0M984.73 434.55a7.1 7.1 0 1 0 14.2 0a7.1 7.1 0 1 0 -14.2 0M661.85 455.05a7.1 7.1 0 1 0 14.2 0a7.1 7.1 0 1 0 -14.2 0M692.6 455.05a7.1 7.1 0 1 0 14.2 0a7.1 7.1 0 1 0 -14.2 0M723.35 455.05a7.1 7.1 0 1 0 14.2 0a7.1 7.1 0 1 0 -14.2 0M754.1 455.05a7.1 7.1 0 1 0 14.2 0a7.1 7.1 0 1 0 -14.2 0M784.85 455.05a7.1 7.1 0 1 0 14.2 0a7.1 7.1 0 1 0 -14.2 0M815.6 455.05a7.1 7.1 0 1 0 14.2 0a7.1 7.1 0 1 0 -14.2 0M677.23 475.55a7.1 7.1 0 1 0 14.2 0a7.1 7.1 0 1 0 -14.2 0M707.98 475.55a7.1 7.1 0 1 0 14.2 0a7.1 7.1 0 1 0 -14.2 0M738.73 475.55a7.1 7.1 0 1 0 14.2 0a7.1 7.1 0 1 0 -14.2 0M769.48 475.55a7.1 7.1 0 1 0 14.2 0a7.1 7.1 0 1 0 -14.2 0M800.23 475.55a7.1 7.1 0 1 0 14.2 0a7.1 7.1 0 1 0 -14.2 0M661.85 496.05a7.1 7.1 0 1 0 14.2 0a7.1 7.1 0 1 0 -14.2 0M692.6 496.05a7.1 7.1 0 1 0 14.2 0a7.1 7.1 0 1 0 -14.2 0M723.35 496.05a7.1 7.1 0 1 0 14.2 0a7.1 7.1 0 1 0 -14.2 0M754.1 496.05a7.1 7.1 0 1 0 14.2 0a7.1 7.1 0 1 0 -14.2 0M784.85 496.05a7.1 7.1 0 1 0 14.2 0a7.1 7.1 0 1 0 -14.2 0M815.6 496.05a7.1 7.1 0 1 0 14.2 0a7.1 7.1 0 1 0 -14.2 0M677.23 516.55a7.1 7.1 0 1 0 14.2 0a7.1 7.1 0 1 0 -14.2 0M707.98 516.55a7.1 7.1 0 1 0 14.2 0a7.1 7.1 0 1 0 -14.2 0M738.73 516.55a7.1 7.1 0 1 0 14.2 0a7.1 7.1 0 1 0 -14.2 0M769.48 516.55a7.1 7.1 0 1 0 14.2 0a7.1 7.1 0 1 0 -14.2 0M800.23 516.55a7.1 7.1 0 1 0 14.2 0a7.1 7.1 0 1 0 -14.2 0M661.85 537.05a7.1 7.1 0 1 0 14.2 0a7.1 7.1 0 1 0 -14.2 0M692.6 537.05a7.1 7.1 0 1 0 14.2 0a7.1 7.1 0 1 0 -14.2 0M723.35 537.05a7.1 7.1 0 1 0 14.2 0a7.1 7.1 0 1 0 -14.2 0M754.1 537.05a7.1 7.1 0 1 0 14.2 0a7.1 7.1 0 1 0 -14.2 0M784.85 537.05a7.1 7.1 0 1 0 14.2 0a7.1 7.1 0 1 0 -14.2 0M815.6 537.05a7.1 7.1 0 1 0 14.2 0a7.1 7.1 0 1 0 -14.2 0M677.23 557.55a7.1 7.1 0 1 0 14.2 0a7.1 7.1 0 1 0 -14.2 0M707.98 557.55a7.1 7.1 0 1 0 14.2 0a7.1 7.1 0 1 0 -14.2 0M738.73 557.55a7.1 7.1 0 1 0 14.2 0a7.1 7.1 0 1 0 -14.2 0M769.48 557.55a7.1 7.1 0 1 0 14.2 0a7.1 7.1 0 1 0 -14.2 0M800.23 557.55a7.1 7.1 0 1 0 14.2 0a7.1 7.1 0 1 0 -14.2 0M661.85 578.05a7.1 7.1 0 1 0 14.2 0a7.1 7.1 0 1 0 -14.2 0M692.6 578.05a7.1 7.1 0 1 0 14.2 0a7.1 7.1 0 1 0 -14.2 0M723.35 578.05a7.1 7.1 0 1 0 14.2 0a7.1 7.1 0 1 0 -14.2 0M754.1 578.05a7.1 7.1 0 1 0 14.2 0a7.1 7.1 0 1 0 -14.2 0M784.85 578.05a7.1 7.1 0 1 0 14.2 0a7.1 7.1 0 1 0 -14.2 0M815.6 578.05a7.1 7.1 0 1 0 14.2 0a7.1 7.1 0 1 0 -14.2 0" stroke="#fff" stroke-width="2.6" fill="none"/><rect x="858.58" y="465.3" width="158.88" height="112.75" rx="20.5" stroke="#fff" stroke-width="2.6" fill="none"/><path d="M233.32 326.92H356.32A35.88 35.88 0 0 1 356.32 398.67H233.32A35.88 35.88 0 0 1 233.32 326.92Z" stroke="#c4c4c4" stroke-width="1.5" fill="none" stroke-dasharray="9.3 2.7 1.4 2.6" stroke-dashoffset="7.3"/><path d="M250.75 472.17H492.65A54.63 54.63 0 0 1 492.65 581.43H250.75A54.63 54.63 0 0 1 250.75 472.17Z" stroke="#c4c4c4" stroke-width="1.5" fill="none" stroke-dasharray="9.3 2.7 1.4 2.6" stroke-dashoffset="3.75"/><path d="M186.4 362.8L403 362.8" stroke="#e00000" stroke-width="2" fill="none" stroke-dasharray="17 7 1.5 6.5" stroke-dashoffset="11.9"/><path d="M294.82 311.2L294.82 414.5" stroke="#e00000" stroke-width="2" fill="none" stroke-dasharray="17 7 1.5 6.5" stroke-dashoffset="4.2"/><path d="M417.7 362.8L526 362.8" stroke="#e00000" stroke-width="2" fill="none" stroke-dasharray="17 7 1.5 6.5" stroke-dashoffset="2.7"/><path d="M469.07 311L469.07 414.7" stroke="#e00000" stroke-width="2" fill="none" stroke-dasharray="17 7 1.5 6.5" stroke-dashoffset="4.3"/><path d="M545.3 362.8L608 362.8" stroke="#e00000" stroke-width="2" fill="none" stroke-dasharray="17 7 1.5 6.5" stroke-dashoffset="9"/><path d="M576.7 331.7L576.7 394.3" stroke="#e00000" stroke-width="2" fill="none" stroke-dasharray="17 7 1.5 6.5" stroke-dashoffset="9"/><path d="M176 526.8L566.6 526.8" stroke="#e00000" stroke-width="2" fill="none" stroke-dasharray="17 7 1.5 6.5" stroke-dashoffset="4.7"/><path d="M371.7 454.4L371.7 599.3" stroke="#e00000" stroke-width="2" fill="none" stroke-dasharray="17 7 1.5 6.5" stroke-dashoffset="0.1"/><path d="M845.2 521.9L1030.6 521.9" stroke="#e00000" stroke-width="2" fill="none" stroke-dasharray="17 7 1.5 6.5" stroke-dashoffset="11.3"/><path d="M938.1 444.7L938.1 591.7" stroke="#e00000" stroke-width="2" fill="none" stroke-dasharray="17 7 1.5 6.5" stroke-dashoffset="14.9"/><g stroke="#b80000" stroke-width="1" fill="none"><circle cx="648.45" cy="598.55" r="5.3"/><path d="M642.95 598.55H653.95M648.45 593.05V604.05"/></g></svg>
<!-- v scrollbar -->
<div class="a" style="left:1138px;top:155px;width:17px;height:577px;background:#f9f9f9;border-right:2px solid #dadada"></div>
<div class="a" style="left:1143px;top:298px;width:8px;height:284px;border-radius:4px;background:#808080"></div>
<!-- h scrollbar -->
<div class="a" style="left:95px;top:732px;width:1004px;height:16px;background:#f9f9f9"></div>
<div class="a" style="left:1099px;top:732px;width:55px;height:16px;background:#ebebeb"></div>
<div class="a" style="left:301px;top:737px;width:604px;height:8px;border-radius:4px;background:#808080"></div>
<div class="a" style="left:1118px;top:732px;font-size:13px;color:#111;white-space:nowrap;line-height:17px">1 &lt; 10</div>
<!-- command widget -->
<div class="a" style="left:72px;top:748px;width:1082px;height:50px;background:#ececec;border-top:1px solid #c3c3c3"></div>
<div class="a" style="left:73px;top:749px;width:1081px;height:21px;background:#fff;border-bottom:2px solid #d0d0d0"></div>
<div class="a" style="left:1144px;top:750px;width:7px;height:18px;border-radius:0 0 3.5px 3.5px;background:#808080"></div>
<div class="a" style="left:77px;top:750px;font-size:13.35px;color:#0c0cd6;white-space:nowrap;line-height:16px"><i>Commande:</i> snapfree</div>
<div class="a" style="left:73px;top:778px;font-size:13.4px;color:#111;white-space:nowrap;line-height:16px">Premier point :</div>
<div class="a" style="left:164px;top:776px;width:963px;height:18px;background:#fff"></div>
<div class="a" style="left:1127px;top:772px;width:26px;height:26px;border:1px solid #b4b4b4;background:linear-gradient(#ececec,#f6f6f6)"></div>
<svg class="a" style="left:1132px;top:779px" width="15" height="11"><rect x="0.5" y="0.5" width="14" height="10" fill="#eee" stroke="#222"/><rect x="0" y="0" width="15" height="3" fill="#111"/></svg>

<!-- layer dock -->
<div class="a" style="left:1154px;top:108px;width:301px;height:690px;background:#ececec"></div>
<div class="a" style="left:1155px;top:108px;width:299px;height:21px;background:linear-gradient(#ececec,#dedede);border-bottom:1px solid #cfcfcf"></div>
<div class="a" style="left:1276px;top:112px;font-size:12px;color:#222;white-space:nowrap">Liste des calques</div>
<svg class="a" style="left:1156px;top:110px" width="34" height="16"><circle cx="8" cy="8" r="7" fill="#6d6d6d"/><path d="M5 5L11 11M11 5L5 11" stroke="#eee" stroke-width="1.8"/><circle cx="26" cy="8" r="7" fill="#6d6d6d"/><rect x="22.5" y="7" width="6" height="5" fill="none" stroke="#eee" stroke-width="1.1"/><path d="M24.5 7V5H30V9.5H28.5" fill="none" stroke="#eee" stroke-width="1.1"/></svg>
<div class="a" style="left:1155px;top:130px;width:300px;height:668px;background:#fff;border:2px solid #c8c8c8;border-bottom:none"></div>
<div class="a" style="left:1156px;top:131px;width:298px;height:26px;background:linear-gradient(#f6f6f6,#ececec);border-bottom:2px solid #bcbcbc"></div>
<div class="a" style="left:1214px;top:131px;width:2px;height:25px;background:#bcbcbc"></div>
<div class="a" style="left:1274px;top:131px;width:2px;height:25px;background:#bcbcbc"></div>
<div class="a" style="left:1334px;top:131px;width:2px;height:25px;background:#bcbcbc"></div>
<div class="a" style="left:1394px;top:131px;width:2px;height:25px;background:#bcbcbc"></div>
<svg class="a" style="left:1177px;top:136px" width="16" height="15" viewBox="0 0 16 15"><path d="M1 8Q8 -0.5 15 8Q8 15.5 1 8Z" fill="#fff" stroke="#000" stroke-width="1.8"/><path d="M2 6.5Q8 -1 14 6.5Q8 2 2 6.5Z" fill="#000"/><circle cx="8" cy="7.6" r="3.5" fill="#000"/><circle cx="7.2" cy="6.6" r="1" fill="#fff"/></svg><svg class="a" style="left:1237px;top:136px" width="16" height="15" viewBox="0 0 16 15"><path d="M1 8Q8 -0.5 15 8Q8 15.5 1 8Z" fill="#fff" stroke="#a6a6a6" stroke-width="1.8"/><path d="M2 6.5Q8 -1 14 6.5Q8 2 2 6.5Z" fill="#a6a6a6"/><circle cx="8" cy="7.6" r="3.5" fill="#a6a6a6"/><circle cx="7.2" cy="6.6" r="1" fill="#fff"/></svg><svg class="a" style="left:1296px;top:135px" width="17" height="17" viewBox="0 0 17 17"><path d="M8.5 2.5V14M2.5 8.3H14.5" stroke="#e80808" stroke-width="3"/></svg><svg class="a" style="left:1356px;top:135px" width="17" height="17" viewBox="0 0 17 17"><path d="M2.5 8.5H15" stroke="#e80808" stroke-width="3"/></svg><svg class="a" style="left:1416px;top:134px" width="16" height="16" viewBox="0 0 16 16"><path d="M1.5 13.5L3 9.5L11 1.5Q12.5 0.5 13.5 1.5Q14.5 2.5 13.5 4L5.5 12Z" fill="#e8b040" stroke="#7a5010" stroke-width=".8"/><path d="M11 1.5Q12.5 0.5 13.5 1.5Q14.5 2.5 13.5 4L12.5 5L10 2.5Z" fill="#e83030"/></svg><div class="sw" style="top:163px;background:#000"></div><div class="lr" style="top:160px">0</div><svg class="a" style="left:1414px;top:161px" width="17" height="13" viewBox="0 0 17 13"><path d="M1.2 6.8Q8.5 -1 15.8 6.8Q8.5 14 1.2 6.8Z" fill="#fff" stroke="#000" stroke-width="1.9"/><path d="M2 5.5Q8.5 -1.5 15 5.5Q8.5 1.5 2 5.5Z" fill="#000"/><circle cx="8.5" cy="6.6" r="3.6" fill="#000"/><circle cx="7.6" cy="5.4" r="1" fill="#fff"/></svg><svg class="a" style="left:1439px;top:160px" width="13" height="15" viewBox="0 0 13 15"><path d="M3 7V5Q3 1.5 6.5 1.5Q10 1.5 10 5V7" fill="none" stroke="#c4c4c4" stroke-width="1.6"/><rect x="1.5" y="7" width="10" height="7" fill="#c4c4c4"/></svg><div class="sw" style="top:183px;background:#f00"></div><div class="lr" style="top:180px">Centre</div><svg class="a" style="left:1414px;top:181px" width="17" height="13" viewBox="0 0 17 13"><path d="M1.2 6.8Q8.5 -1 15.8 6.8Q8.5 14 1.2 6.8Z" fill="#fff" stroke="#000" stroke-width="1.9"/><path d="M2 5.5Q8.5 -1.5 15 5.5Q8.5 1.5 2 5.5Z" fill="#000"/><circle cx="8.5" cy="6.6" r="3.6" fill="#000"/><circle cx="7.6" cy="5.4" r="1" fill="#fff"/></svg><svg class="a" style="left:1439px;top:180px" width="13" height="15" viewBox="0 0 13 15"><path d="M3 7V5Q3 1.5 6.5 1.5Q10 1.5 10 5V7" fill="none" stroke="#c4c4c4" stroke-width="1.6"/><rect x="1.5" y="7" width="10" height="7" fill="#c4c4c4"/></svg><div class="sw" style="top:203px;background:#a4a4a8"></div><div class="lr" style="top:200px">Retour</div><svg class="a" style="left:1414px;top:201px" width="17" height="13" viewBox="0 0 17 13"><path d="M1.2 6.8Q8.5 -1 15.8 6.8Q8.5 14 1.2 6.8Z" fill="#fff" stroke="#000" stroke-width="1.9"/><path d="M2 5.5Q8.5 -1.5 15 5.5Q8.5 1.5 2 5.5Z" fill="#000"/><circle cx="8.5" cy="6.6" r="3.6" fill="#000"/><circle cx="7.6" cy="5.4" r="1" fill="#fff"/></svg><svg class="a" style="left:1439px;top:200px" width="13" height="15" viewBox="0 0 13 15"><path d="M3 7V5Q3 1.5 6.5 1.5Q10 1.5 10 5V7" fill="none" stroke="#c4c4c4" stroke-width="1.6"/><rect x="1.5" y="7" width="10" height="7" fill="#c4c4c4"/></svg><div class="sw" style="top:223px;background:#000"></div><div class="lr" style="top:220px">Ventilation</div><svg class="a" style="left:1414px;top:221px" width="17" height="13" viewBox="0 0 17 13"><path d="M1.2 6.8Q8.5 -1 15.8 6.8Q8.5 14 1.2 6.8Z" fill="#fff" stroke="#000" stroke-width="1.9"/><path d="M2 5.5Q8.5 -1.5 15 5.5Q8.5 1.5 2 5.5Z" fill="#000"/><circle cx="8.5" cy="6.6" r="3.6" fill="#000"/><circle cx="7.6" cy="5.4" r="1" fill="#fff"/></svg><svg class="a" style="left:1439px;top:220px" width="13" height="15" viewBox="0 0 13 15"><path d="M3 7V5Q3 1.5 6.5 1.5Q10 1.5 10 5V7" fill="none" stroke="#c4c4c4" stroke-width="1.6"/><rect x="1.5" y="7" width="10" height="7" fill="#c4c4c4"/></svg><svg class="a" style="left:1393px;top:199px" width="16" height="16" viewBox="0 0 16 16"><path d="M1.5 13.5L3 9.5L11 1.5Q12.5 0.5 13.5 1.5Q14.5 2.5 13.5 4L5.5 12Z" fill="#e8b040" stroke="#7a5010" stroke-width=".8"/><path d="M11 1.5Q12.5 0.5 13.5 1.5Q14.5 2.5 13.5 4L12.5 5L10 2.5Z" fill="#e83030"/></svg>

<!-- right toolbar -->
<div class="a" style="left:1455px;top:108px;width:45px;height:690px;background:linear-gradient(90deg,#ececec,#dcdcdc 50%,#c8c8c8);border-left:1px solid #c4c4c4"></div>
<div class="a" style="left:1459px;top:116px;width:30px;height:2px;background-image:radial-gradient(circle,#a6a6a6 0.9px,transparent 1.2px);background-size:6px 2px"></div><div class="a" style="left:1456px;top:120px;width:43px;height:43px;border-radius:7px;background:#bcbcbc"></div><div class="a" style="left:1456px;top:417px;width:43px;height:43px;border-radius:7px;background:#bcbcbc"></div><div class="a" style="left:1458px;top:261px;width:40px;height:1px;background-image:linear-gradient(90deg,#8a8a8a 50%,transparent 50%);background-size:3px 1px"></div><div class="a" style="left:1458px;top:409px;width:40px;height:1px;background-image:linear-gradient(90deg,#8a8a8a 50%,transparent 50%);background-size:3px 1px"></div><svg class="a" style="left:1463px;top:127px" width="28" height="28" viewBox="0 0 28 28"><rect x="0.5" y="0.5" width="27" height="27" fill="#fff" stroke="#222" stroke-width="1"/><rect x="0" y="0" width="28" height="4" fill="#000"/><rect x="0.8" y="0.6" width="3" height="3" fill="#fff"/><path d="M7 9V21L11 24V12Z" fill="#999" stroke="#333" stroke-width=".8"/><path d="M10 8.5V20.5L20 17V5.5Z" fill="#fff" stroke="#333" stroke-width=".8" transform="translate(1 1)"/><path d="M15 17L18 10L19 17Z" fill="none" stroke="#f44" stroke-width=".9"/></svg><svg class="a" style="left:1463px;top:174px" width="28" height="28" viewBox="0 0 28 28"><rect x="0.5" y="0.5" width="27" height="27" fill="#fff" stroke="#222" stroke-width="1"/><rect x="0" y="0" width="28" height="4" fill="#000"/><rect x="0.8" y="0.6" width="3" height="3" fill="#fff"/><rect x="7" y="9" width="12" height="9" fill="#f6e6a8" stroke="#555" stroke-width=".8"/><circle cx="17" cy="18" r="5" fill="#f6e6a8" stroke="#555" stroke-width=".8" fill-opacity=".8"/></svg><svg class="a" style="left:1463px;top:220px" width="28" height="28" viewBox="0 0 28 28"><rect x="0.5" y="0.5" width="27" height="27" fill="#fff" stroke="#222" stroke-width="1"/><rect x="0" y="0" width="28" height="4" fill="#000"/><rect x="0.8" y="0.6" width="3" height="3" fill="#fff"/><rect x="6" y="9" width="17" height="13" rx="2.5" fill="#f4f4f4" stroke="#b8c8e0" stroke-width="1"/></svg><svg class="a" style="left:1463px;top:276px" width="28" height="28" viewBox="0 0 28 28"><rect x="0.5" y="0.5" width="27" height="27" fill="#fff" stroke="#222" stroke-width="1"/><rect x="0" y="0" width="28" height="4" fill="#000"/><rect x="0.8" y="0.6" width="3" height="3" fill="#fff"/><rect x="3.5" y="8.5" width="4.5" height="3.2" rx=".8" fill="#111"/><rect x="10" y="8.5" width="14" height="3" fill="#fff" stroke="#444" stroke-width=".8"/><rect x="3.5" y="14" width="4.5" height="3.2" rx=".8" fill="#111"/><rect x="10" y="14" width="14" height="3" fill="#fff" stroke="#444" stroke-width=".8"/><rect x="3.5" y="19.5" width="4.5" height="3.2" rx=".8" fill="#111"/><rect x="10" y="19.5" width="14" height="3" fill="#fff" stroke="#444" stroke-width=".8"/></svg><svg class="a" style="left:1463px;top:322px" width="28" height="28" viewBox="0 0 28 28"><rect x="0.5" y="0.5" width="27" height="27" fill="#fff" stroke="#222" stroke-width="1"/><rect x="0" y="0" width="28" height="4" fill="#000"/><rect x="0.8" y="0.6" width="3" height="3" fill="#fff"/><path d="M7 9.5L12.2 15.5V23.5L15.5 24.5V15.5L21 9.5Z" fill="#c4c4c4" stroke="#555" stroke-width=".7"/><ellipse cx="14" cy="9.5" rx="7" ry="1.6" fill="#666"/></svg><svg class="a" style="left:1463px;top:368px" width="28" height="28" viewBox="0 0 28 28"><rect x="0.5" y="0.5" width="27" height="27" fill="#fff" stroke="#222" stroke-width="1"/><rect x="0" y="0" width="28" height="4" fill="#000"/><rect x="0.8" y="0.6" width="3" height="3" fill="#fff"/><path d="M6 8V22L12 17V13Z" fill="#fff" stroke="#222" stroke-width=".9"/><rect x="12" y="12" width="10" height="6.5" rx="1.5" fill="#777"/><path d="M3 15H26" stroke="#f77" stroke-width=".6" stroke-dasharray="1 1"/></svg><svg class="a" style="left:1463px;top:424px" width="28" height="28" viewBox="0 0 28 28"><rect x="0.5" y="0.5" width="27" height="27" fill="#fff" stroke="#222" stroke-width="1"/><rect x="0" y="0" width="28" height="4" fill="#000"/><rect x="0.8" y="0.6" width="3" height="3" fill="#fff"/><path d="M4 7.5H13M4 10.5H15M4 13.5H14M4 16.5H15" stroke="#888" stroke-width=".8"/><path d="M0 22.5H28" stroke="#222" stroke-width=".8"/><text x="16" y="26.5" font-family="Liberation Sans" font-size="4" fill="#222" text-anchor="middle">command</text></svg><svg class="a" style="left:1463px;top:471px" width="28" height="28" viewBox="0 0 28 28"><rect x="0.5" y="0.5" width="27" height="27" fill="#fff" stroke="#222" stroke-width="1"/><rect x="0" y="0" width="28" height="4" fill="#000"/><rect x="0.8" y="0.6" width="3" height="3" fill="#fff"/><rect x="8" y="8" width="12" height="15" rx="1" fill="#b57a22"/><rect x="9.5" y="10" width="9" height="11.5" fill="#f6f6f6"/><rect x="11" y="6.5" width="6" height="3" fill="#9a9a90"/></svg>

<!-- status bar -->
<div class="a" style="left:0;top:798px;width:1500px;height:46px;background:#dadada;border-top:1px solid #c8c8c8"></div>
<div class="st" style="left:2px;top:807px">-1.878,32.439</div>
<div class="st" style="left:2px;top:827px">@-50.878,29.439</div>
<div class="a" style="left:253px;top:802px;width:1px;height:40px;background:#9a9a9a"></div>
<div class="st" style="left:256px;top:807px">32.4933&lt;93.31°</div>
<div class="st" style="left:256px;top:827px">@58.7812&lt;149.95°</div>
<div class="a" style="left:507px;top:820px;width:5px;height:5px;border-radius:50%;background:#c4c4c4"></div>
<div class="st2" style="left:637px;top:817px">Premier point</div>
<svg class="a" style="left:716px;top:805px" width="20" height="32"><rect x="1.5" y="1" width="17" height="29.5" rx="8.5" fill="#fff" stroke="#333" stroke-width="1"/><path d="M1.5 13.5Q10 11 18.5 13.5M10 1V12" stroke="#333" fill="none"/><rect x="8" y="3.5" width="4" height="7" rx="2" fill="#fff" stroke="#333" stroke-width="0.9"/></svg>
<div class="st2" style="left:754px;top:817px">Annuler</div>
<div class="a" style="left:940px;top:820px;width:5px;height:5px;border-radius:50%;background:#c4c4c4"></div>
<div class="st2" style="left:949px;top:817px">Aucune des entités sélectionnées.</div>
<div class="a" style="left:1270px;top:820px;width:5px;height:5px;border-radius:50%;background:#c4c4c4"></div>
</body></html>
